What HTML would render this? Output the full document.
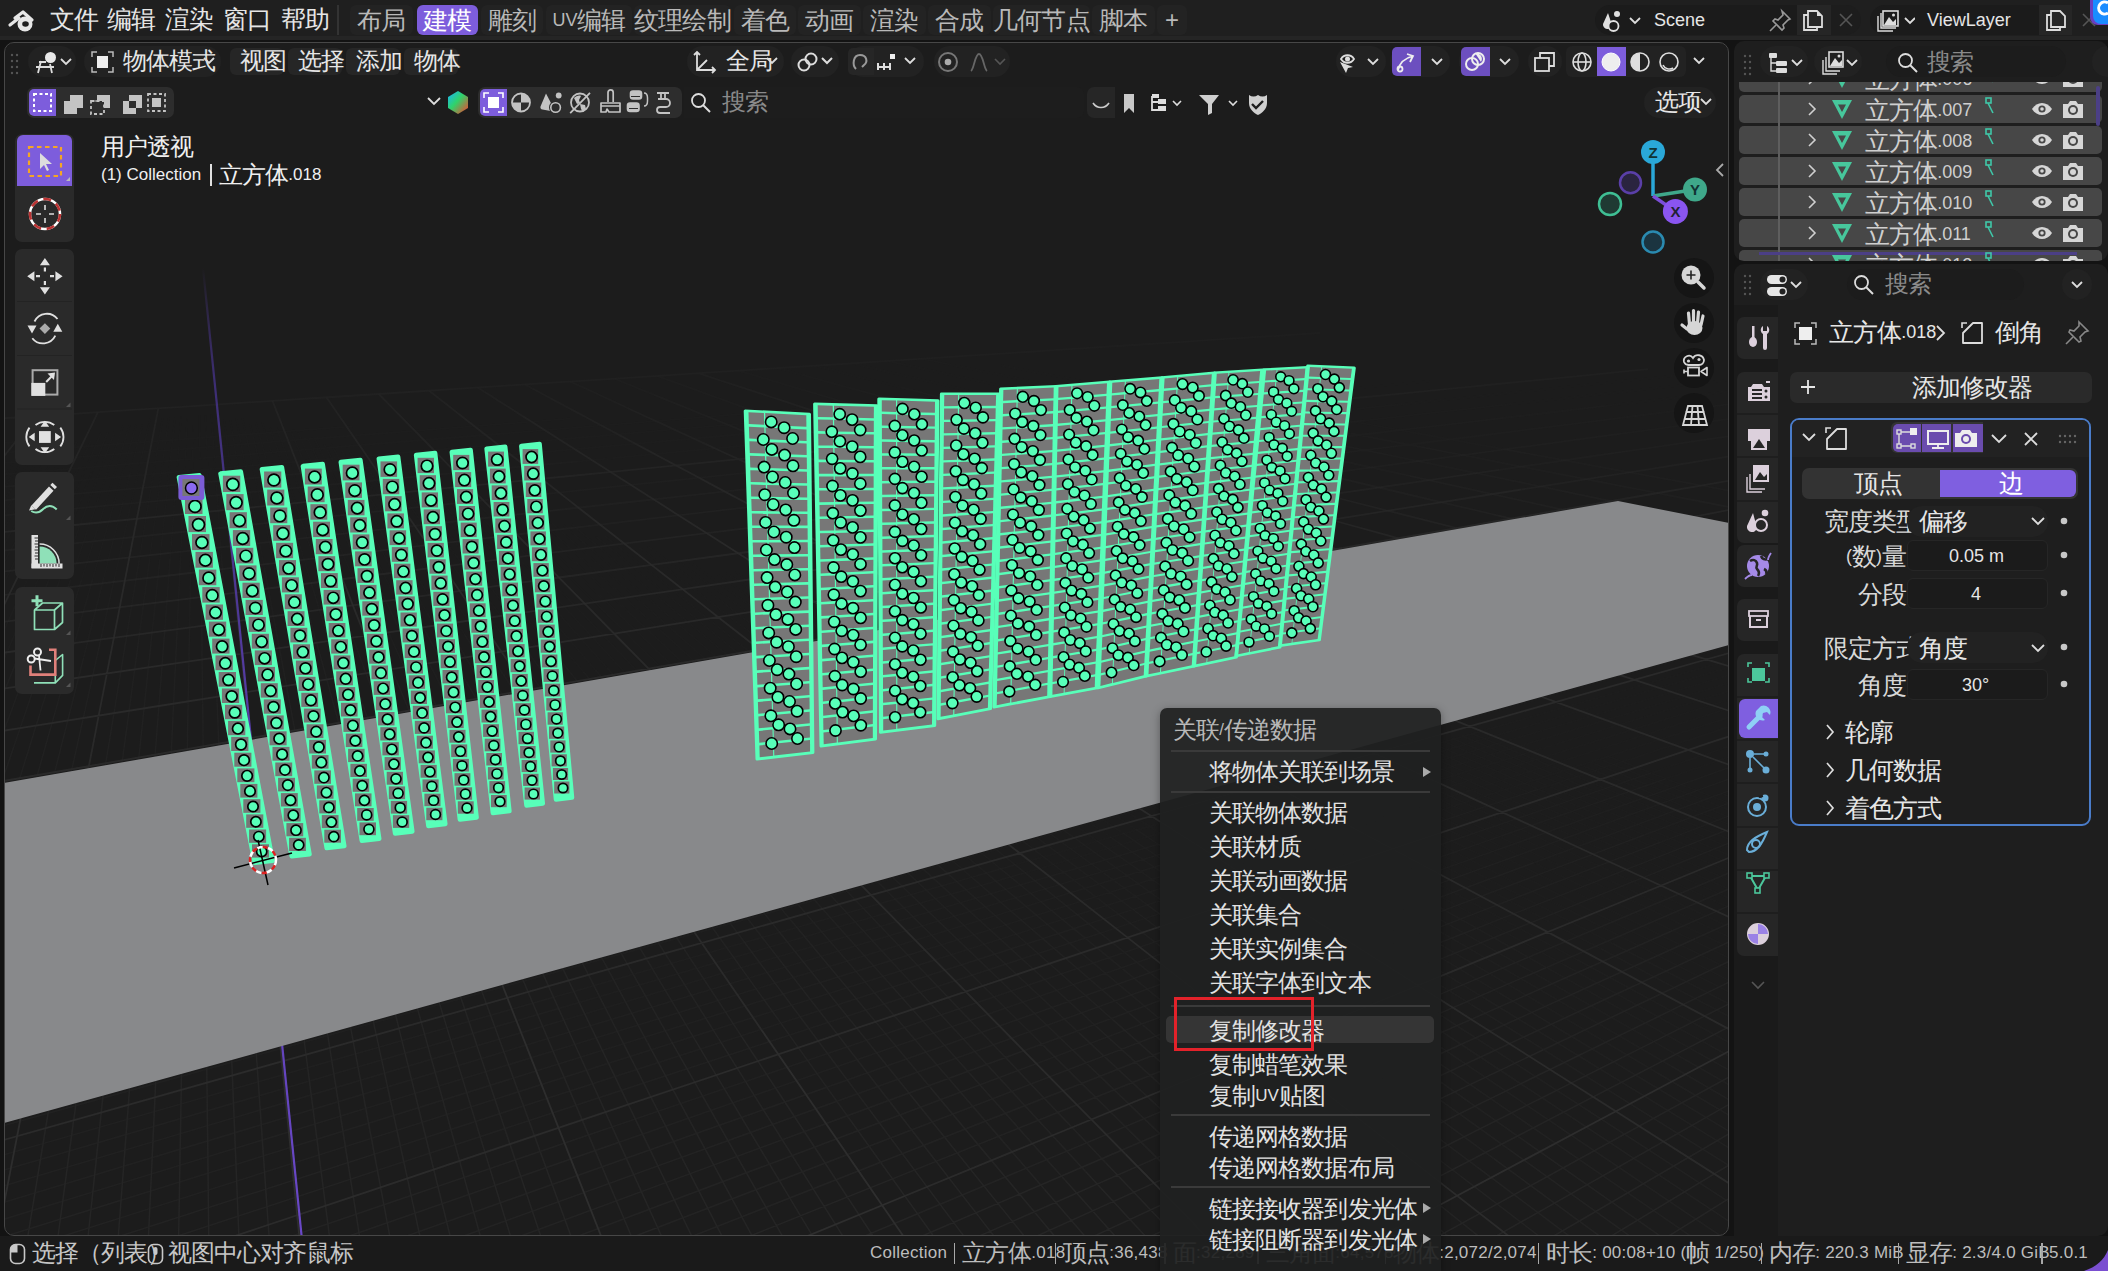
<!DOCTYPE html>
<html><head><meta charset="utf-8">
<style>
*{margin:0;padding:0;box-sizing:border-box}
html,body{width:2108px;height:1271px;overflow:hidden;background:#131313;font-family:"Liberation Sans",sans-serif;color:#d6d6d6;position:relative}
.a{position:absolute}
.t{position:absolute;white-space:nowrap;font-size:17px;line-height:20px}
.ic{position:absolute;overflow:visible}
#top{left:0;top:0;width:2108px;height:40px;background:linear-gradient(#1f1f1f 0,#1f1f1f 36px,#252525 36px)}
.vborder{left:4px;top:42px;width:1725px;height:1194px;border:1.5px solid #474747;border-radius:10px;pointer-events:none}
#ol{left:1734px;top:41px;width:374px;height:220px;background:#1e1e1e;border-radius:10px;overflow:hidden}
#pr{left:1734px;top:264px;width:374px;height:972px;background:#1e1e1e;border-radius:10px;overflow:hidden}
#sb{left:0;top:1236px;width:2108px;height:35px;background:#1a1a1a}
.btn{position:absolute;background:#262626;border-radius:6px}
.pill{position:absolute;background:#222222;border-radius:16px}
.tab{position:absolute;top:5px;height:30px;background:#232323;border-radius:6px;font-size:18px;line-height:30px;text-align:center;color:#b9b9b9}
.tab.on{background:#7d5ddc;color:#fff}
.mi{position:absolute;left:49px;font-size:17px;line-height:22px;color:#e2e2e2;white-space:nowrap}
.sep{position:absolute;left:11px;width:259px;height:2px;background:#3a3a3a}
.row{position:absolute;left:5px;width:363px;height:28px;background:#474747;border-radius:5px}
.k{font-size:1.4em;letter-spacing:-0.038em;line-height:1px;vertical-align:-3px}
</style></head><body>
<svg class="a" style="left:0;top:0" width="2108" height="1271" viewBox="0 0 2108 1271">
<defs>
<clipPath id="vc"><rect x="5" y="43" width="1723" height="1192" rx="9"/></clipPath>
<linearGradient id="gg" x1="0" y1="0" x2="0" y2="1" gradientUnits="userSpaceOnUse" >
</linearGradient>
<mask id="gm" maskUnits="userSpaceOnUse" x="0" y="0" width="2108" height="1271">
<rect x="0" y="0" width="2108" height="1271" fill="url(#gmg)"/>
</mask>
<linearGradient id="gmg" gradientUnits="userSpaceOnUse" x1="0" y1="260" x2="0" y2="1236">
<stop offset="0" stop-color="#000"/><stop offset="0.12" stop-color="#555"/><stop offset="0.3" stop-color="#ddd"/><stop offset="1" stop-color="#fff"/>
</linearGradient>
<linearGradient id="fl" gradientUnits="userSpaceOnUse" x1="0" y1="500" x2="0" y2="1123">
<stop offset="0" stop-color="#88898b"/><stop offset="1" stop-color="#88898b"/>
</linearGradient>
<linearGradient id="yax" gradientUnits="userSpaceOnUse" x1="0" y1="268" x2="0" y2="1240"><stop offset="0" stop-color="#5b3fb0" stop-opacity="0"/><stop offset="0.12" stop-color="#45328a" stop-opacity="0.8"/><stop offset="0.5" stop-color="#5a3fb0"/><stop offset="1" stop-color="#6a48c8"/></linearGradient>
</defs>
<g clip-path="url(#vc)">
<rect x="0" y="0" width="2108" height="1271" fill="#1c1c1c"/>
<g mask="url(#gm)"><path d="M-57.9 493.0L-49.8 484.1M-57.4 502.1L-49.1 492.5M-49.1 492.5L-41.3 483.5M-56.9 511.7L-48.3 501.5M-48.3 501.5L-40.3 491.9M-40.3 491.9L-32.8 483.0M-56.4 522.1L-47.6 511.1M-47.6 511.1L-39.3 500.9M-39.3 500.9L-31.6 491.4M-31.6 491.4L-24.3 482.4M-24.3 482.4L-17.5 474.0M-55.5 545.2L-46.0 532.6M-46.0 532.6L-37.2 520.8M-37.2 520.8L-29.0 509.9M-29.0 509.9L-21.3 499.8M-21.3 499.8L-14.2 490.3M-14.2 490.3L-7.5 481.3M-7.5 481.3L-1.2 473.0M-1.2 473.0L4.7 465.1M-55.0 558.2L-45.2 544.6M-45.2 544.6L-36.0 531.9M-36.0 531.9L-27.6 520.2M-27.6 520.2L-19.7 509.3M-19.7 509.3L-12.4 499.2M-12.4 499.2L-5.6 489.7M-5.6 489.7L0.9 480.8M0.9 480.8L6.9 472.5M6.9 472.5L12.5 464.6M-34.9 543.9L-26.2 531.3M-26.2 531.3L-18.1 519.6M-18.1 519.6L-10.5 508.8M-10.5 508.8L-3.5 498.6M-3.5 498.6L3.0 489.1M3.0 489.1L9.2 480.3M9.2 480.3L15.0 471.9M15.0 471.9L20.4 464.1M-24.6 543.3L-16.3 530.7M-16.3 530.7L-8.6 519.0M-8.6 519.0L-1.4 508.2M-1.4 508.2L5.3 498.1M5.3 498.1L11.6 488.6M11.6 488.6L17.5 479.7M17.5 479.7L23.0 471.4M23.0 471.4L28.2 463.6M28.2 463.6L33.1 456.2M-14.4 542.6L-6.5 530.1M-6.5 530.1L0.9 518.4M0.9 518.4L7.8 507.6M7.8 507.6L14.2 497.5M14.2 497.5L20.1 488.1M20.1 488.1L25.7 479.2M25.7 479.2L31.0 470.9M31.0 470.9L36.0 463.1M36.0 463.1L40.6 455.8M3.3 529.5L10.3 517.8M10.3 517.8L16.9 507.0M16.9 507.0L23.0 496.9M23.0 496.9L28.6 487.5M28.6 487.5L34.0 478.7M34.0 478.7L39.0 470.4M39.0 470.4L43.7 462.6M43.7 462.6L48.1 455.3M48.1 455.3L52.3 448.4M13.0 528.8L19.7 517.2M19.7 517.2L25.9 506.4M25.9 506.4L31.7 496.4M31.7 496.4L37.1 487.0M37.1 487.0L42.2 478.2M42.2 478.2L46.9 469.9M46.9 469.9L51.4 462.1M51.4 462.1L55.6 454.8M55.6 454.8L59.6 447.9M22.7 528.2L29.1 516.6M29.1 516.6L35.0 505.9M35.0 505.9L40.4 495.8M40.4 495.8L45.6 486.4M45.6 486.4L50.4 477.6M50.4 477.6L54.9 469.4M54.9 469.4L59.1 461.6M59.1 461.6L63.1 454.3M63.1 454.3L66.9 447.4M32.4 527.6L38.4 516.0M38.4 516.0L43.9 505.3M43.9 505.3L49.1 495.3M49.1 495.3L54.0 485.9M54.0 485.9L58.5 477.1M58.5 477.1L62.8 468.9M62.8 468.9L66.8 461.1M66.8 461.1L70.5 453.8M70.5 453.8L74.1 446.9M74.1 446.9L77.4 440.4M56.9 514.9L61.8 504.1M61.8 504.1L66.4 494.2M66.4 494.2L70.7 484.8M70.7 484.8L74.7 476.1M74.7 476.1L78.4 467.9M78.4 467.9L82.0 460.2M82.0 460.2L85.3 452.9M85.3 452.9L88.5 446.0M88.5 446.0L91.4 439.5M66.1 514.3L70.7 503.6M70.7 503.6L75.0 493.6M75.0 493.6L79.0 484.3M79.0 484.3L82.7 475.6M82.7 475.6L86.2 467.4M86.2 467.4L89.6 459.7M89.6 459.7L92.7 452.4M92.7 452.4L95.6 445.6M95.6 445.6L98.4 439.1M98.4 439.1L101.0 433.0M75.3 513.7L79.6 503.0M79.6 503.0L83.6 493.1M83.6 493.1L87.3 483.8M87.3 483.8L90.8 475.0M90.8 475.0L94.0 466.9M94.0 466.9L97.1 459.2M97.1 459.2L100.0 451.9M100.0 451.9L102.7 445.1M102.7 445.1L105.3 438.6M105.3 438.6L107.7 432.5M88.4 502.4L92.1 492.5M92.1 492.5L95.5 483.2M95.5 483.2L98.7 474.5M98.7 474.5L101.8 466.4M101.8 466.4L104.6 458.7M104.6 458.7L107.3 451.5M107.3 451.5L109.8 444.6M109.8 444.6L112.2 438.2M112.2 438.2L114.5 432.1M97.2 501.9L100.6 492.0M100.6 492.0L103.8 482.7M103.8 482.7L106.7 474.0M106.7 474.0L109.5 465.9M109.5 465.9L112.1 458.2M112.1 458.2L114.6 451.0M114.6 451.0L116.9 444.2M116.9 444.2L119.1 437.8M119.1 437.8L121.1 431.7M121.1 431.7L123.1 425.9M106.0 501.3L109.1 491.4M109.1 491.4L111.9 482.2M111.9 482.2L114.6 473.5M114.6 473.5L117.2 465.4M117.2 465.4L119.6 457.7M119.6 457.7L121.8 450.5M121.8 450.5L123.9 443.7M123.9 443.7L125.9 437.3M125.9 437.3L127.8 431.2M127.8 431.2L129.6 425.5M114.7 500.8L117.5 490.9M117.5 490.9L120.1 481.7M120.1 481.7L122.5 473.0M122.5 473.0L124.8 464.9M124.8 464.9L127.0 457.3M127.0 457.3L129.0 450.1M129.0 450.1L130.9 443.3M130.9 443.3L132.7 436.9M132.7 436.9L134.4 430.8M134.4 430.8L136.1 425.0M123.4 500.2L125.9 490.4M125.9 490.4L128.2 481.1M128.2 481.1L130.4 472.5M130.4 472.5L132.5 464.4M132.5 464.4L134.4 456.8M134.4 456.8L136.2 449.6M136.2 449.6L137.9 442.8M137.9 442.8L139.5 436.4M139.5 436.4L141.1 430.4M141.1 430.4L142.5 424.6M132.1 499.7L134.3 489.8M134.3 489.8L136.3 480.6M136.3 480.6L138.3 472.0M138.3 472.0L140.1 463.9M140.1 463.9L141.8 456.3M141.8 456.3L143.4 449.1M143.4 449.1L144.9 442.4M144.9 442.4L146.3 436.0M146.3 436.0L147.6 429.9M147.6 429.9L148.9 424.2M148.9 424.2L150.1 418.8M150.9 488.8L152.4 479.6M152.4 479.6L153.9 471.0M153.9 471.0L155.2 462.9M155.2 462.9L156.4 455.4M156.4 455.4L157.6 448.2M157.6 448.2L158.7 441.5M158.7 441.5L159.8 435.1M159.8 435.1L160.8 429.1M160.8 429.1L161.7 423.4M161.7 423.4L162.6 418.0M159.2 488.2L160.4 479.1M160.4 479.1L161.6 470.5M161.6 470.5L162.7 462.5M162.7 462.5L163.7 454.9M163.7 454.9L164.7 447.8M164.7 447.8L165.6 441.1M165.6 441.1L166.5 434.7M166.5 434.7L167.3 428.7M167.3 428.7L168.0 423.0M168.0 423.0L168.8 417.6M167.5 487.7L168.4 478.6M168.4 478.6L169.3 470.0M169.3 470.0L170.2 462.0M170.2 462.0L171.0 454.4M171.0 454.4L171.7 447.3M171.7 447.3L172.5 440.6M172.5 440.6L173.1 434.3M173.1 434.3L173.8 428.3M173.8 428.3L174.4 422.6M174.4 422.6L174.9 417.2M175.7 487.2L176.4 478.1M176.4 478.1L177.0 469.5M177.0 469.5L177.6 461.5M177.6 461.5L178.2 454.0M178.2 454.0L178.8 446.9M178.8 446.9L179.3 440.2M179.3 440.2L179.8 433.8M179.8 433.8L180.2 427.8M180.2 427.8L180.7 422.2M180.7 422.2L181.1 416.8M183.9 486.7L184.3 477.5M184.3 477.5L184.7 469.0M184.7 469.0L185.1 461.0M185.1 461.0L185.4 453.5M185.4 453.5L185.8 446.4M185.8 446.4L186.1 439.7M186.1 439.7L186.4 433.4M186.4 433.4L186.7 427.4M186.7 427.4L186.9 421.8M186.9 421.8L187.2 416.4M192.0 486.1L192.2 477.0M192.2 477.0L192.3 468.5M192.3 468.5L192.5 460.6M192.5 460.6L192.6 453.0M192.6 453.0L192.8 446.0M192.8 446.0L192.9 439.3M192.9 439.3L193.0 433.0M193.0 433.0L193.1 427.0M193.1 427.0L193.2 421.3M193.2 421.3L193.3 416.0M200.2 485.6L200.1 476.5M200.1 476.5L200.0 468.0M200.0 468.0L199.9 460.1M199.9 460.1L199.8 452.6M199.8 452.6L199.7 445.5M199.7 445.5L199.6 438.9M199.6 438.9L199.6 432.6M199.6 432.6L199.5 426.6M199.5 426.6L199.4 420.9M199.4 420.9L199.4 415.6M208.3 485.1L207.9 476.0M207.9 476.0L207.5 467.6M207.5 467.6L207.2 459.6M207.2 459.6L206.9 452.1M206.9 452.1L206.6 445.1M206.6 445.1L206.4 438.4M206.4 438.4L206.1 432.1M206.1 432.1L205.9 426.2M205.9 426.2L205.6 420.5M205.6 420.5L205.4 415.2M216.3 484.6L215.7 475.5M215.7 475.5L215.1 467.1M215.1 467.1L214.6 459.1M214.6 459.1L214.0 451.7M214.0 451.7L213.5 444.6M213.5 444.6L213.1 438.0M213.1 438.0L212.6 431.7M212.6 431.7L212.2 425.8M212.2 425.8L211.8 420.1M211.8 420.1L211.4 414.8M233.6 493.2L232.4 483.6M232.4 483.6L231.2 474.5M231.2 474.5L230.1 466.1M230.1 466.1L229.1 458.2M229.1 458.2L228.2 450.8M228.2 450.8L227.3 443.7M227.3 443.7L226.4 437.1M226.4 437.1L225.6 430.9M225.6 430.9L224.8 425.0M224.8 425.0L224.1 419.4M241.9 492.7L240.4 483.0M240.4 483.0L239.0 474.1M239.0 474.1L237.6 465.6M237.6 465.6L236.4 457.7M236.4 457.7L235.2 450.3M235.2 450.3L234.1 443.3M234.1 443.3L233.0 436.7M233.0 436.7L232.1 430.5M232.1 430.5L231.1 424.6M231.1 424.6L230.2 419.0M250.1 492.1L248.3 482.5M248.3 482.5L246.7 473.6M246.7 473.6L245.1 465.2M245.1 465.2L243.6 457.3M243.6 457.3L242.2 449.9M242.2 449.9L240.9 442.9M240.9 442.9L239.7 436.3M239.7 436.3L238.5 430.0M238.5 430.0L237.4 424.2M237.4 424.2L236.3 418.6M258.3 491.6L256.3 482.0M256.3 482.0L254.3 473.1M254.3 473.1L252.5 464.7M252.5 464.7L250.8 456.8M250.8 456.8L249.2 449.4M249.2 449.4L247.7 442.4M247.7 442.4L246.2 435.9M246.2 435.9L244.9 429.6M244.9 429.6L243.6 423.7M243.6 423.7L242.4 418.2M266.5 491.1L264.2 481.5M264.2 481.5L262.0 472.6M262.0 472.6L259.9 464.2M259.9 464.2L258.0 456.3M258.0 456.3L256.1 449.0M256.1 449.0L254.4 442.0M254.4 442.0L252.8 435.4M252.8 435.4L251.3 429.2M251.3 429.2L249.8 423.3M277.5 500.8L274.7 490.6M274.7 490.6L272.0 481.0M272.0 481.0L269.6 472.1M269.6 472.1L267.3 463.7M267.3 463.7L265.1 455.9M265.1 455.9L263.1 448.5M263.1 448.5L261.2 441.6M261.2 441.6L259.3 435.0M259.3 435.0L257.6 428.8M257.6 428.8L256.0 422.9M285.9 500.3L282.8 490.1M282.8 490.1L279.9 480.5M279.9 480.5L277.2 471.6M277.2 471.6L274.6 463.3M274.6 463.3L272.2 455.4M272.2 455.4L270.0 448.1M270.0 448.1L267.9 441.1M267.9 441.1L265.9 434.6M265.9 434.6L264.0 428.4M264.0 428.4L262.2 422.5M294.3 499.8L290.9 489.5M290.9 489.5L287.7 480.0M287.7 480.0L284.7 471.1M284.7 471.1L281.9 462.8M281.9 462.8L279.3 455.0M279.3 455.0L276.9 447.6M276.9 447.6L274.5 440.7M274.5 440.7L272.4 434.2M272.4 434.2L270.3 428.0M306.6 510.2L302.7 499.2M302.7 499.2L298.9 489.0M298.9 489.0L295.5 479.5M295.5 479.5L292.2 470.6M292.2 470.6L289.2 462.3M289.2 462.3L286.4 454.5M286.4 454.5L283.7 447.2M283.7 447.2L281.2 440.3M281.2 440.3L278.8 433.8M278.8 433.8L276.6 427.6M323.9 509.1L319.3 498.2M319.3 498.2L315.0 488.0M315.0 488.0L311.0 478.5M311.0 478.5L307.2 469.7M307.2 469.7L303.7 461.4M303.7 461.4L300.4 453.6M300.4 453.6L297.3 446.3M297.3 446.3L294.4 439.4M294.4 439.4L291.7 432.9M337.8 520.3L332.5 508.5M332.5 508.5L327.5 497.6M327.5 497.6L323.0 487.5M323.0 487.5L318.7 478.0M318.7 478.0L314.7 469.2M314.7 469.2L310.9 460.9M310.9 460.9L307.4 453.2M307.4 453.2L304.1 445.9M304.1 445.9L301.0 439.0M301.0 439.0L298.1 432.5M346.7 519.7L341.0 508.0M341.0 508.0L335.8 497.1M335.8 497.1L330.9 487.0M330.9 487.0L326.4 477.5M326.4 477.5L322.1 468.7M322.1 468.7L318.1 460.5M318.1 460.5L314.4 452.7M314.4 452.7L310.9 445.4M310.9 445.4L307.6 438.6M355.5 519.2L349.5 507.5M349.5 507.5L344.0 496.6M344.0 496.6L338.8 486.5M338.8 486.5L334.0 477.1M334.0 477.1L329.5 468.3M329.5 468.3L325.3 460.0M325.3 460.0L321.3 452.3M321.3 452.3L317.6 445.0M317.6 445.0L314.1 438.2M371.2 531.3L364.4 518.6M364.4 518.6L358.0 506.9M358.0 506.9L352.2 496.1M352.2 496.1L346.7 486.0M346.7 486.0L341.6 476.6M341.6 476.6L336.9 467.8M336.9 467.8L332.4 459.6M332.4 459.6L328.3 451.8M328.3 451.8L324.3 444.6M380.4 530.7L373.2 518.1M373.2 518.1L366.5 506.4M366.5 506.4L360.3 495.5M360.3 495.5L354.6 485.5M354.6 485.5L349.2 476.1M349.2 476.1L344.2 467.3M344.2 467.3L339.5 459.1M339.5 459.1L335.2 451.4M335.2 451.4L331.0 444.1M389.5 530.1L381.9 517.5M381.9 517.5L374.9 505.8M374.9 505.8L368.4 495.0M368.4 495.0L362.4 485.0M362.4 485.0L356.8 475.6M356.8 475.6L351.5 466.8M351.5 466.8L346.6 458.6M346.6 458.6L342.0 451.0M407.2 543.2L398.6 529.6M398.6 529.6L390.6 517.0M390.6 517.0L383.3 505.3M383.3 505.3L376.5 494.5M376.5 494.5L370.2 484.5M370.2 484.5L364.3 475.1M364.3 475.1L358.8 466.4M358.8 466.4L353.7 458.2M353.7 458.2L348.9 450.5M416.5 542.5L407.5 528.9M407.5 528.9L399.3 516.3M399.3 516.3L391.6 504.7M391.6 504.7L384.5 493.9M384.5 493.9L378.0 483.9M378.0 483.9L371.8 474.6M371.8 474.6L366.1 465.9M366.1 465.9L360.7 457.7M445.1 555.0L434.6 540.4M434.6 540.4L425.0 526.9M425.0 526.9L416.1 514.5M416.1 514.5L407.8 503.0M407.8 503.0L400.2 492.4M400.2 492.4L393.1 482.5M393.1 482.5L386.5 473.2M386.5 473.2L380.3 464.6M454.5 553.9L443.6 539.3M443.6 539.3L433.6 525.9M433.6 525.9L424.4 513.6M424.4 513.6L415.9 502.2M415.9 502.2L408.0 491.6M408.0 491.6L400.6 481.7M400.6 481.7L393.8 472.6M393.8 472.6L387.3 464.0M476.0 568.6L463.8 552.8M463.8 552.8L452.5 538.3M452.5 538.3L442.2 525.0M442.2 525.0L432.7 512.7M432.7 512.7L423.9 501.4M423.9 501.4L415.7 490.8M415.7 490.8L408.1 481.0M408.1 481.0L401.0 471.9M485.6 567.3L473.0 551.6M473.0 551.6L461.4 537.2M461.4 537.2L450.7 524.0M450.7 524.0L440.9 511.8M440.9 511.8L431.8 500.5M431.8 500.5L423.4 490.1M423.4 490.1L415.5 480.3M415.5 480.3L408.2 471.2M495.1 566.1L482.1 550.5M482.1 550.5L470.2 536.2M470.2 536.2L459.2 523.1M459.2 523.1L449.1 511.0M449.1 511.0L439.7 499.7M439.7 499.7L431.0 489.3M431.0 489.3L422.9 479.6M519.3 581.8L504.6 564.9M504.6 564.9L491.2 549.4M491.2 549.4L479.0 535.2M479.0 535.2L467.7 522.1M467.7 522.1L457.2 510.1M457.2 510.1L447.6 498.9M447.6 498.9L438.6 488.6M438.6 488.6L430.3 478.9M529.1 580.5L514.0 563.7M514.0 563.7L500.3 548.3M500.3 548.3L487.7 534.2M487.7 534.2L476.1 521.2M476.1 521.2L465.3 509.2M465.3 509.2L455.4 498.1M455.4 498.1L446.2 487.8M538.8 579.2L523.4 562.5M523.4 562.5L509.2 547.2M509.2 547.2L496.3 533.2M496.3 533.2L484.4 520.3M484.4 520.3L473.4 508.4M473.4 508.4L463.2 497.3M463.2 497.3L453.7 487.1M565.9 596.2L548.5 577.9M548.5 577.9L532.6 561.3M532.6 561.3L518.2 546.1M518.2 546.1L504.9 532.2M504.9 532.2L492.7 519.3M492.7 519.3L481.4 507.5M481.4 507.5L470.9 496.5M605.9 613.2L585.8 593.3M585.8 593.3L567.6 575.3M567.6 575.3L551.0 558.9M551.0 558.9L535.9 543.9M535.9 543.9L521.9 530.2M521.9 530.2L509.1 517.5M509.1 517.5L497.3 505.8M616.2 611.6L595.7 591.9M595.7 591.9L577.1 574.0M577.1 574.0L560.1 557.8M560.1 557.8L544.6 542.9M544.6 542.9L530.4 529.2M530.4 529.2L517.3 516.6M517.3 516.6L505.1 505.0M626.4 610.1L605.5 590.5M605.5 590.5L586.5 572.8M586.5 572.8L569.2 556.6M569.2 556.6L553.3 541.8M553.3 541.8L538.8 528.2M538.8 528.2L525.4 515.7M660.3 630.1L636.6 608.6M636.6 608.6L615.2 589.1M615.2 589.1L595.8 571.5M595.8 571.5L578.1 555.4M578.1 555.4L562.0 540.7M562.0 540.7L547.1 527.2M547.1 527.2L533.4 514.8M670.8 628.4L646.6 607.0M646.6 607.0L624.9 587.8M624.9 587.8L605.1 570.3M605.1 570.3L587.1 554.3M587.1 554.3L570.6 539.7M570.6 539.7L555.4 526.3M555.4 526.3L541.4 513.9M681.2 626.7L656.6 605.5M656.6 605.5L634.4 586.4M634.4 586.4L614.3 569.0M614.3 569.0L595.9 553.2M595.9 553.2L579.1 538.6M579.1 538.6L563.6 525.3M719.3 648.4L691.5 625.1M691.5 625.1L666.6 604.0M666.6 604.0L644.0 585.0M644.0 585.0L623.4 567.8M623.4 567.8L604.7 552.0M604.7 552.0L587.6 537.6M587.6 537.6L571.8 524.4M730.1 646.6L701.8 623.4M701.8 623.4L676.4 602.5M676.4 602.5L653.4 583.7M653.4 583.7L632.5 566.5M632.5 566.5L613.5 550.9M613.5 550.9L596.0 536.6M740.7 644.8L712.0 621.8M712.0 621.8L686.2 601.1M686.2 601.1L662.8 582.3M662.8 582.3L641.6 565.3M641.6 565.3L622.2 549.8M622.2 549.8L604.4 535.6M794.8 666.5L761.7 641.2M761.7 641.2L732.1 618.6M732.1 618.6L705.5 598.2M705.5 598.2L681.4 579.7M681.4 579.7L659.4 562.9M659.4 562.9L639.4 547.6M805.6 664.5L772.1 639.4M772.1 639.4L742.1 617.0M742.1 617.0L715.0 596.7M715.0 596.7L690.6 578.4M690.6 578.4L668.3 561.7M668.3 561.7L647.9 546.5M854.6 690.5L816.4 662.5M816.4 662.5L782.4 637.7M782.4 637.7L752.0 615.4M752.0 615.4L724.5 595.3M724.5 595.3L699.7 577.1M699.7 577.1L677.1 560.5M865.7 688.3L827.1 660.6M827.1 660.6L792.6 635.9M792.6 635.9L761.8 613.8M761.8 613.8L734.0 593.9M734.0 593.9L708.8 575.8M708.8 575.8L685.8 559.3M876.7 686.1L837.6 658.7M837.6 658.7L802.8 634.2M802.8 634.2L771.5 612.2M771.5 612.2L743.3 592.5M743.3 592.5L717.8 574.5M887.7 683.9L848.1 656.7M848.1 656.7L812.8 632.5M812.8 632.5L781.2 610.7M781.2 610.7L752.6 591.0M752.6 591.0L726.7 573.2M943.7 712.3L898.5 681.8M898.5 681.8L858.5 654.8M858.5 654.8L822.8 630.8M822.8 630.8L790.7 609.2M790.7 609.2L761.8 589.7M761.8 589.7L735.6 572.0M955.0 709.9L909.3 679.7M909.3 679.7L868.8 652.9M868.8 652.9L832.7 629.1M832.7 629.1L800.2 607.6M800.2 607.6L771.0 588.3M966.1 707.5L919.9 677.6M919.9 677.6L879.0 651.1M879.0 651.1L842.5 627.4M842.5 627.4L809.7 606.1M809.7 606.1L780.0 586.9M1041.4 736.1L988.0 702.8M988.0 702.8L941.0 673.4M941.0 673.4L899.2 647.4M899.2 647.4L861.9 624.1M861.9 624.1L828.4 603.1M1052.7 733.5L998.8 700.5M998.8 700.5L951.4 671.4M951.4 671.4L909.2 645.5M909.2 645.5L871.5 622.4M871.5 622.4L837.6 601.6M1063.8 730.9L1009.5 698.2M1009.5 698.2L961.6 669.3M961.6 669.3L919.1 643.7M919.1 643.7L881.0 620.8M881.0 620.8L846.7 600.2M1137.4 765.3L1074.9 728.3M1074.9 728.3L1020.2 695.9M1020.2 695.9L971.8 667.3M971.8 667.3L928.9 641.9M928.9 641.9L890.4 619.2M1148.8 762.3L1085.8 725.7M1085.8 725.7L1030.7 693.7M1030.7 693.7L982.0 665.3M982.0 665.3L938.6 640.1M938.6 640.1L899.8 617.6M1160.1 759.4L1096.7 723.2M1096.7 723.2L1041.1 691.4M1041.1 691.4L992.0 663.4M992.0 663.4L948.3 638.4M948.3 638.4L909.1 616.0M1171.3 756.6L1107.4 720.7M1107.4 720.7L1051.4 689.2M1051.4 689.2L1001.9 661.4M1001.9 661.4L957.8 636.6M1256.2 794.6L1182.3 753.7M1182.3 753.7L1118.1 718.2M1118.1 718.2L1061.7 687.0M1061.7 687.0L1011.8 659.5M1011.8 659.5L967.3 634.9M1267.6 791.3L1193.3 750.9M1193.3 750.9L1128.6 715.7M1128.6 715.7L1071.8 684.9M1071.8 684.9L1021.5 657.5M1021.5 657.5L976.8 633.2M1289.9 785.0L1214.8 745.4M1214.8 745.4L1149.4 710.9M1149.4 710.9L1091.8 680.6M1091.8 680.6L1040.8 653.7M1388.3 827.2L1300.9 781.8M1300.9 781.8L1225.4 742.7M1225.4 742.7L1159.6 708.5M1159.6 708.5L1101.7 678.5M1101.7 678.5L1050.4 651.8M1399.5 823.6L1311.7 778.7M1311.7 778.7L1235.9 740.0M1235.9 740.0L1169.7 706.1M1169.7 706.1L1111.5 676.4M1111.5 676.4L1059.8 650.0M1410.6 820.0L1322.5 775.6M1322.5 775.6L1246.3 737.3M1246.3 737.3L1179.8 703.8M1179.8 703.8L1121.2 674.3M1421.5 816.5L1333.1 772.6M1333.1 772.6L1256.6 734.6M1256.6 734.6L1189.7 701.5M1189.7 701.5L1130.8 672.2M1536.0 863.6L1432.4 813.0M1432.4 813.0L1343.6 769.6M1343.6 769.6L1266.8 732.0M1266.8 732.0L1199.6 699.2M1199.6 699.2L1140.3 670.2M1547.0 859.6L1443.1 809.5M1443.1 809.5L1354.0 766.6M1354.0 766.6L1276.9 729.4M1276.9 729.4L1209.4 696.9M1209.4 696.9L1149.8 668.2M1557.8 855.6L1453.7 806.1M1453.7 806.1L1364.3 763.7M1364.3 763.7L1286.9 726.8M1286.9 726.8L1219.1 694.6M1568.5 851.6L1464.1 802.7M1464.1 802.7L1374.5 760.7M1374.5 760.7L1296.8 724.3M1296.8 724.3L1228.6 692.4M1712.9 900.1L1589.5 843.9M1589.5 843.9L1484.7 796.1M1484.7 796.1L1394.6 755.0M1394.6 755.0L1316.3 719.3M1316.3 719.3L1247.6 688.0M1723.3 895.6L1599.8 840.0M1599.8 840.0L1494.9 792.8M1494.9 792.8L1404.5 752.2M1404.5 752.2L1325.9 716.8M1733.6 891.1L1610.0 836.3M1610.0 836.3L1504.9 789.6M1504.9 789.6L1414.3 749.4M1414.3 749.4L1335.4 714.4M1743.8 886.7L1620.1 832.5M1620.1 832.5L1514.8 786.4M1514.8 786.4L1424.0 746.6M1424.0 746.6L1344.9 711.9M1753.8 882.4L1630.1 828.9M1630.1 828.9L1524.6 783.2M1524.6 783.2L1433.5 743.9M1433.5 743.9L1354.2 709.5M1910.7 940.9L1763.7 878.1M1763.7 878.1L1639.9 825.2M1639.9 825.2L1534.3 780.1M1534.3 780.1L1443.0 741.1M1920.4 935.8L1773.5 873.9M1773.5 873.9L1649.7 821.6M1649.7 821.6L1543.9 777.0M1543.9 777.0L1452.4 738.5M1930.0 930.8L1783.2 869.7M1783.2 869.7L1659.3 818.1M1659.3 818.1L1553.3 774.0M1553.3 774.0L1461.7 735.8M1939.4 925.9L1792.7 865.5M1792.7 865.5L1668.8 814.6M1668.8 814.6L1562.7 770.9M1562.7 770.9L1470.9 733.2M1811.4 857.4L1687.5 807.7M1687.5 807.7L1581.2 765.0M1820.6 853.5L1696.7 804.3M1696.7 804.3L1590.3 762.0M1829.7 849.5L1705.8 800.9M1705.8 800.9L1599.3 759.1M1838.7 845.6L1714.8 797.6M1714.8 797.6L1608.2 756.3M1847.6 841.8L1723.6 794.3M1856.3 838.0L1732.4 791.0M1865.0 834.3L1741.1 787.8M1873.6 830.6L1749.7 784.7M1882.0 826.9L1758.2 781.5M1726.6 700.4L1790.6 680.4M1790.6 680.4L1849.7 662.0M1643.6 717.3L1713.1 696.0M1713.1 696.0L1777.2 676.4M1777.2 676.4L1836.3 658.3M1630.4 712.7L1699.9 691.8M1699.9 691.8L1764.0 672.5M1764.0 672.5L1823.2 654.7M1542.0 730.6L1617.5 708.2M1617.5 708.2L1687.0 687.6M1687.0 687.6L1751.0 668.7M1751.0 668.7L1810.2 651.2M1529.4 725.7L1604.9 703.7M1604.9 703.7L1674.2 683.5M1674.2 683.5L1738.2 664.9M1738.2 664.9L1797.4 647.7M1797.4 647.7L1852.4 631.7M1435.0 744.5L1517.2 721.0M1517.2 721.0L1592.5 699.4M1592.5 699.4L1661.7 679.5M1661.7 679.5L1725.7 661.2M1725.7 661.2L1784.9 644.2M1784.9 644.2L1839.8 628.5M1322.4 759.2L1411.6 734.4M1411.6 734.4L1493.3 711.7M1493.3 711.7L1568.2 690.9M1568.2 690.9L1637.3 671.7M1637.3 671.7L1701.1 653.9M1701.1 653.9L1760.3 637.5M1760.3 637.5L1815.3 622.2M1311.3 753.8L1400.3 729.5M1400.3 729.5L1481.6 707.2M1481.6 707.2L1556.4 686.7M1556.4 686.7L1625.4 667.8M1625.4 667.8L1689.2 650.4M1689.2 650.4L1748.3 634.2M1748.3 634.2L1803.3 619.1M1203.5 774.7L1300.5 748.5M1300.5 748.5L1389.1 724.6M1389.1 724.6L1470.2 702.8M1470.2 702.8L1544.8 682.6M1544.8 682.6L1613.7 664.1M1613.7 664.1L1677.4 646.9M1677.4 646.9L1736.5 631.0M1193.3 769.0L1289.9 743.3M1289.9 743.3L1378.1 719.9M1378.1 719.9L1459.0 698.4M1459.0 698.4L1533.4 678.6M1533.4 678.6L1602.1 660.4M1602.1 660.4L1665.8 643.5M1665.8 643.5L1724.9 627.8M1077.8 791.0L1183.4 763.4M1183.4 763.4L1279.5 738.2M1279.5 738.2L1367.4 715.2M1367.4 715.2L1448.0 694.1M1448.0 694.1L1522.2 674.7M1522.2 674.7L1590.8 656.7M1590.8 656.7L1654.4 640.1M1068.7 785.0L1173.7 757.9M1173.7 757.9L1269.3 733.2M1269.3 733.2L1356.8 710.7M1356.8 710.7L1437.2 689.9M1437.2 689.9L1511.2 670.8M1511.2 670.8L1579.7 653.2M1579.7 653.2L1643.1 636.8M944.8 808.4L1059.8 779.1M1059.8 779.1L1164.1 752.6M1164.1 752.6L1259.3 728.3M1259.3 728.3L1346.4 706.2M1346.4 706.2L1426.5 685.8M1426.5 685.8L1500.4 667.0M1500.4 667.0L1568.7 649.6M936.8 802.0L1051.0 773.3M1051.0 773.3L1154.8 747.3M1154.8 747.3L1249.5 723.5M1249.5 723.5L1336.2 701.8M1336.2 701.8L1416.0 681.7M1416.0 681.7L1489.7 663.3M803.8 826.7L929.0 795.7M929.0 795.7L1042.4 767.7M1042.4 767.7L1145.6 742.1M1145.6 742.1L1239.8 718.8M1239.8 718.8L1326.2 697.4M1326.2 697.4L1405.8 677.8M1405.8 677.8L1479.2 659.6M654.0 846.3L790.6 813.3M790.6 813.3L913.9 783.6M913.9 783.6L1025.8 756.7M1025.8 756.7L1127.8 732.1M1127.8 732.1L1221.0 709.6M1221.0 709.6L1306.7 689.0M1306.7 689.0L1385.7 670.0M648.8 839.1L784.2 806.9M784.2 806.9L906.6 777.8M906.6 777.8L1017.7 751.3M1017.7 751.3L1119.1 727.2M1119.1 727.2L1211.9 705.2M1211.9 705.2L1297.2 684.9M494.6 867.0L643.8 832.0M643.8 832.0L778.0 800.5M778.0 800.5L899.4 772.0M899.4 772.0L1009.8 746.1M1009.8 746.1L1110.6 722.5M1110.6 722.5L1202.9 700.8M1202.9 700.8L1287.9 680.9M491.1 859.4L638.8 825.1M638.8 825.1L771.9 794.3M771.9 794.3L892.4 766.4M892.4 766.4L1002.0 741.0M1002.0 741.0L1102.2 717.8M1102.2 717.8L1194.1 696.5M487.7 851.9L634.0 818.4M634.0 818.4L765.9 788.2M765.9 788.2L885.5 760.9M885.5 760.9L994.4 735.9M994.4 735.9L1094.0 713.2M1094.0 713.2L1185.4 692.2M323.1 881.0L484.4 844.5M484.4 844.5L629.3 811.8M629.3 811.8L760.1 782.3M760.1 782.3L878.8 755.4M878.8 755.4L986.9 731.0M986.9 731.0L1086.0 708.6M321.6 873.0L481.2 837.4M481.2 837.4L624.7 805.4M624.7 805.4L754.3 776.4M754.3 776.4L872.1 750.1M872.1 750.1L979.6 726.1M979.6 726.1L1078.0 704.2M143.7 904.1L320.1 865.2M320.1 865.2L478.0 830.4M478.0 830.4L620.1 799.0M620.1 799.0L748.7 770.7M748.7 770.7L865.6 744.9M865.6 744.9L972.4 721.4M144.4 895.5L318.7 857.5M318.7 857.5L474.9 823.5M474.9 823.5L615.7 792.9M615.7 792.9L743.2 765.1M743.2 765.1L859.3 739.8M859.3 739.8L965.3 716.7M-45.1 919.6L145.6 879.0M145.6 879.0L316.0 842.8M316.0 842.8L468.9 810.3M468.9 810.3L607.1 780.9M607.1 780.9L732.5 754.2M732.5 754.2L846.9 729.9M-42.1 910.7L146.3 871.1M146.3 871.1L314.6 835.7M314.6 835.7L466.0 803.9M466.0 803.9L602.9 775.1M602.9 775.1L727.3 748.9M-248.2 945.4L-39.1 902.0M-39.1 902.0L146.9 863.3M146.9 863.3L313.3 828.7M313.3 828.7L463.2 797.6M463.2 797.6L598.9 769.4M598.9 769.4L722.2 743.7M-242.4 935.8L-36.2 893.5M-36.2 893.5L147.4 855.8M147.4 855.8L312.0 821.9M312.0 821.9L460.4 791.4M460.4 791.4L594.9 763.8M594.9 763.8L717.3 738.7M-236.7 926.5L-33.4 885.2M-33.4 885.2L148.0 848.3M148.0 848.3L310.8 815.3M310.8 815.3L457.7 785.4M457.7 785.4L590.9 758.3M-231.2 917.4L-30.6 877.1M-30.6 877.1L148.6 841.1M148.6 841.1L309.6 808.8M309.6 808.8L455.0 779.5M455.0 779.5L587.1 753.0M-225.9 908.6L-27.9 869.2M-27.9 869.2L149.1 834.0M149.1 834.0L308.4 802.4M308.4 802.4L452.4 773.7M-220.6 899.9L-25.3 861.5M-25.3 861.5L149.6 827.1M149.6 827.1L307.2 796.1M307.2 796.1L449.9 768.1M-215.5 891.5L-22.7 854.0M-22.7 854.0L150.1 820.3M150.1 820.3L306.0 790.0M-205.7 875.2L-17.8 839.4M-17.8 839.4L151.1 807.2M-201.0 867.4L-15.4 832.4M-15.4 832.4L151.6 800.9M-196.3 859.7L-13.0 825.5M-13.0 825.5L152.1 794.7M-191.8 852.2L-10.7 818.8M-187.4 844.9L-8.5 812.2" stroke="#252525" stroke-width="1.5" stroke-opacity="0.125" fill="none"/><path d="M-54.6 572.3L-44.3 557.6M-44.3 557.6L-34.9 543.9M-54.1 587.7L-43.5 571.6M-43.5 571.6L-33.7 556.9M-33.7 556.9L-24.6 543.3M-53.7 604.5L-42.6 587.0M-42.6 587.0L-32.4 570.9M-32.4 570.9L-23.1 556.2M-23.1 556.2L-14.4 542.6M-53.2 623.0L-41.6 603.8M-41.6 603.8L-31.0 586.3M-31.0 586.3L-21.4 570.3M-21.4 570.3L-12.5 555.5M-12.5 555.5L-4.3 542.0M-4.3 542.0L3.3 529.5M-40.6 622.2L-29.6 603.0M-29.6 603.0L-19.6 585.5M-19.6 585.5L-10.4 569.6M-10.4 569.6L-1.9 554.9M-1.9 554.9L5.8 541.3M5.8 541.3L13.0 528.8M-17.7 602.3L-8.2 584.8M-8.2 584.8L0.6 568.9M0.6 568.9L8.6 554.2M8.6 554.2L15.9 540.7M15.9 540.7L22.7 528.2M-5.8 601.5L3.2 584.1M3.2 584.1L11.5 568.2M11.5 568.2L19.0 553.6M19.0 553.6L26.0 540.1M26.0 540.1L32.4 527.6M17.9 600.0L25.9 582.7M25.9 582.7L33.1 566.8M33.1 566.8L39.8 552.2M39.8 552.2L46.0 538.8M46.0 538.8L51.7 526.4M51.7 526.4L56.9 514.9M29.7 599.3L37.1 582.0M37.1 582.0L43.9 566.1M43.9 566.1L50.2 551.6M50.2 551.6L55.9 538.2M55.9 538.2L61.2 525.8M61.2 525.8L66.1 514.3M48.3 581.3L54.7 565.5M54.7 565.5L60.5 550.9M60.5 550.9L65.8 537.5M65.8 537.5L70.7 525.2M70.7 525.2L75.3 513.7M59.5 580.6L65.4 564.8M65.4 564.8L70.7 550.3M70.7 550.3L75.7 536.9M75.7 536.9L80.2 524.6M80.2 524.6L84.5 513.1M84.5 513.1L88.4 502.4M70.6 579.9L76.0 564.1M76.0 564.1L80.9 549.6M80.9 549.6L85.5 536.3M85.5 536.3L89.7 524.0M89.7 524.0L93.6 512.5M93.6 512.5L97.2 501.9M81.7 579.2L86.6 563.4M86.6 563.4L91.1 549.0M91.1 549.0L95.3 535.7M95.3 535.7L99.1 523.4M99.1 523.4L102.7 511.9M102.7 511.9L106.0 501.3M92.8 578.5L97.2 562.8M97.2 562.8L101.3 548.4M101.3 548.4L105.0 535.1M105.0 535.1L108.5 522.8M108.5 522.8L111.7 511.4M111.7 511.4L114.7 500.8M103.8 577.8L107.8 562.1M107.8 562.1L111.4 547.7M111.4 547.7L114.8 534.4M114.8 534.4L117.9 522.2M117.9 522.2L120.7 510.8M120.7 510.8L123.4 500.2M114.8 577.1L118.3 561.4M118.3 561.4L121.5 547.1M121.5 547.1L124.4 533.8M124.4 533.8L127.2 521.6M127.2 521.6L129.7 510.2M129.7 510.2L132.1 499.7M139.2 560.1L141.5 545.8M141.5 545.8L143.7 532.6M143.7 532.6L145.7 520.4M145.7 520.4L147.6 509.1M147.6 509.1L149.3 498.6M149.3 498.6L150.9 488.8M149.6 559.5L151.5 545.2M151.5 545.2L153.3 532.0M153.3 532.0L154.9 519.8M154.9 519.8L156.5 508.5M156.5 508.5L157.9 498.0M157.9 498.0L159.2 488.2M159.9 558.8L161.4 544.6M161.4 544.6L162.8 531.4M162.8 531.4L164.1 519.2M164.1 519.2L165.3 508.0M165.3 508.0L166.4 497.5M166.4 497.5L167.5 487.7M170.2 558.2L171.3 543.9M171.3 543.9L172.3 530.8M172.3 530.8L173.3 518.7M173.3 518.7L174.1 507.4M174.1 507.4L174.9 496.9M174.9 496.9L175.7 487.2M180.5 557.5L181.2 543.3M181.2 543.3L181.8 530.2M181.8 530.2L182.4 518.1M182.4 518.1L182.9 506.8M182.9 506.8L183.4 496.4M183.4 496.4L183.9 486.7M190.8 556.9L191.0 542.7M191.0 542.7L191.3 529.6M191.3 529.6L191.5 517.5M191.5 517.5L191.7 506.3M191.7 506.3L191.9 495.9M191.9 495.9L192.0 486.1M201.0 556.2L200.8 542.1M200.8 542.1L200.7 529.0M200.7 529.0L200.5 516.9M200.5 516.9L200.4 505.7M200.4 505.7L200.3 495.3M200.3 495.3L200.2 485.6M211.1 555.6L210.6 541.4M210.6 541.4L210.0 528.4M210.0 528.4L209.5 516.4M209.5 516.4L209.1 505.2M209.1 505.2L208.7 494.8M208.7 494.8L208.3 485.1M221.3 555.0L220.3 540.8M220.3 540.8L219.4 527.8M219.4 527.8L218.5 515.8M218.5 515.8L217.7 504.6M217.7 504.6L217.0 494.2M217.0 494.2L216.3 484.6M243.4 569.0L241.4 553.7M241.4 553.7L239.6 539.6M239.6 539.6L237.9 526.6M237.9 526.6L236.4 514.6M236.4 514.6L235.0 503.5M235.0 503.5L233.6 493.2M253.9 568.4L251.5 553.1M251.5 553.1L249.2 539.0M249.2 539.0L247.2 526.1M247.2 526.1L245.3 514.1M245.3 514.1L243.5 503.0M243.5 503.0L241.9 492.7M264.3 567.7L261.5 552.4M261.5 552.4L258.8 538.4M258.8 538.4L256.4 525.5M256.4 525.5L254.2 513.5M254.2 513.5L252.1 502.4M252.1 502.4L250.1 492.1M274.7 567.0L271.4 551.8M271.4 551.8L268.4 537.8M268.4 537.8L265.6 524.9M265.6 524.9L263.0 513.0M263.0 513.0L260.6 501.9M260.6 501.9L258.3 491.6M285.1 566.4L281.3 551.2M281.3 551.2L277.9 537.2M277.9 537.2L274.7 524.3M274.7 524.3L271.8 512.4M271.8 512.4L269.1 501.4M269.1 501.4L266.5 491.1M295.4 565.7L291.2 550.5M291.2 550.5L287.4 536.6M287.4 536.6L283.8 523.7M283.8 523.7L280.5 511.8M280.5 511.8L277.5 500.8M310.8 581.7L305.7 565.1M305.7 565.1L301.1 549.9M301.1 549.9L296.8 536.0M296.8 536.0L292.9 523.2M292.9 523.2L289.3 511.3M289.3 511.3L285.9 500.3M321.5 581.0L315.9 564.5M315.9 564.5L310.9 549.3M310.9 549.3L306.2 535.4M306.2 535.4L301.9 522.6M301.9 522.6L298.0 510.7M298.0 510.7L294.3 499.8M332.2 580.3L326.2 563.8M326.2 563.8L320.7 548.7M320.7 548.7L315.6 534.8M315.6 534.8L310.9 522.0M310.9 522.0L306.6 510.2M361.1 597.1L353.5 579.0M353.5 579.0L346.5 562.5M346.5 562.5L340.1 547.5M340.1 547.5L334.3 533.6M334.3 533.6L328.9 520.9M328.9 520.9L323.9 509.1M372.2 596.4L364.0 578.3M364.0 578.3L356.6 561.9M356.6 561.9L349.8 546.9M349.8 546.9L343.6 533.0M343.6 533.0L337.8 520.3M383.3 595.7L374.6 577.7M374.6 577.7L366.7 561.3M366.7 561.3L359.4 546.2M359.4 546.2L352.8 532.5M352.8 532.5L346.7 519.7M394.3 595.0L385.1 577.0M385.1 577.0L376.7 560.6M376.7 560.6L369.1 545.6M369.1 545.6L362.0 531.9M362.0 531.9L355.5 519.2M416.0 614.1L405.3 594.3M405.3 594.3L395.6 576.4M395.6 576.4L386.7 560.0M386.7 560.0L378.6 545.0M378.6 545.0L371.2 531.3M427.5 613.4L416.2 593.7M416.2 593.7L406.0 575.7M406.0 575.7L396.7 559.4M396.7 559.4L388.2 544.4M388.2 544.4L380.4 530.7M439.0 612.7L427.1 593.0M427.1 593.0L416.4 575.1M416.4 575.1L406.6 558.8M406.6 558.8L397.7 543.8M397.7 543.8L389.5 530.1M464.2 633.9L450.4 612.0M450.4 612.0L438.0 592.3M438.0 592.3L426.8 574.4M426.8 574.4L416.5 558.1M416.5 558.1L407.2 543.2M476.0 632.8L461.6 611.0M461.6 611.0L448.7 591.4M448.7 591.4L437.0 573.6M437.0 573.6L426.3 557.3M426.3 557.3L416.5 542.5M498.5 629.4L483.1 608.0M483.1 608.0L469.2 588.6M469.2 588.6L456.6 571.0M456.6 571.0L445.1 555.0M527.3 651.4L509.6 627.7M509.6 627.7L493.7 606.4M493.7 606.4L479.4 587.2M479.4 587.2L466.4 569.8M466.4 569.8L454.5 553.9M538.9 649.5L520.6 626.1M520.6 626.1L504.3 604.9M504.3 604.9L489.5 585.9M489.5 585.9L476.0 568.6M550.4 647.7L531.6 624.4M531.6 624.4L514.7 603.5M514.7 603.5L499.5 584.5M499.5 584.5L485.6 567.3M583.3 671.7L561.7 645.9M561.7 645.9L542.5 622.8M542.5 622.8L525.1 602.0M525.1 602.0L509.4 583.2M509.4 583.2L495.1 566.1M595.2 669.7L573.1 644.1M573.1 644.1L553.2 621.1M553.2 621.1L535.4 600.5M535.4 600.5L519.3 581.8M607.0 667.7L584.3 642.3M584.3 642.3L563.9 619.5M563.9 619.5L545.6 599.0M545.6 599.0L529.1 580.5M644.8 694.0L618.6 665.7M618.6 665.7L595.4 640.5M595.4 640.5L574.6 617.9M574.6 617.9L555.8 597.6M555.8 597.6L538.8 579.2M657.0 691.8L630.2 663.7M630.2 663.7L606.4 638.7M606.4 638.7L585.1 616.3M585.1 616.3L565.9 596.2M712.5 718.5L681.0 687.4M681.0 687.4L653.1 659.8M653.1 659.8L628.2 635.2M628.2 635.2L605.9 613.2M725.0 716.1L692.8 685.2M692.8 685.2L664.3 657.9M664.3 657.9L639.0 633.5M639.0 633.5L616.2 611.6M737.3 713.6L704.5 683.0M704.5 683.0L675.5 655.9M675.5 655.9L649.7 631.8M649.7 631.8L626.4 610.1M787.5 745.7L749.5 711.2M749.5 711.2L716.2 680.9M716.2 680.9L686.6 654.0M686.6 654.0L660.3 630.1M800.2 743.0L761.6 708.8M761.6 708.8L727.7 678.8M727.7 678.8L697.6 652.2M697.6 652.2L670.8 628.4M812.8 740.3L773.6 706.5M773.6 706.5L739.1 676.7M739.1 676.7L708.5 650.3M708.5 650.3L681.2 626.7M825.3 737.6L785.5 704.1M785.5 704.1L750.5 674.6M750.5 674.6L719.3 648.4M883.9 772.9L837.7 735.0M837.7 735.0L797.3 701.8M797.3 701.8L761.7 672.6M761.7 672.6L730.1 646.6M896.8 769.9L849.9 732.3M849.9 732.3L809.0 699.5M809.0 699.5L772.8 670.5M772.8 670.5L740.7 644.8M922.1 764.0L874.1 727.2M874.1 727.2L832.0 694.9M832.0 694.9L794.8 666.5M990.7 803.0L934.6 761.0M934.6 761.0L886.0 724.6M886.0 724.6L843.3 692.7M843.3 692.7L805.6 664.5M1003.7 799.7L947.0 758.2M947.0 758.2L897.7 722.1M897.7 722.1L854.6 690.5M1016.5 796.4L959.2 755.3M959.2 755.3L909.4 719.6M909.4 719.6L865.7 688.3M1096.4 840.3L1029.2 793.1M1029.2 793.1L971.3 752.5M971.3 752.5L921.0 717.1M921.0 717.1L876.7 686.1M1109.6 836.5L1041.7 789.9M1041.7 789.9L983.3 749.7M983.3 749.7L932.4 714.7M932.4 714.7L887.7 683.9M1122.6 832.8L1054.2 786.7M1054.2 786.7L995.1 746.9M995.1 746.9L943.7 712.3M1135.5 829.1L1066.4 783.5M1066.4 783.5L1006.9 744.2M1006.9 744.2L955.0 709.9M1229.7 878.3L1148.2 825.5M1148.2 825.5L1078.6 780.4M1078.6 780.4L1018.5 741.5M1018.5 741.5L966.1 707.5M1255.7 869.9L1173.1 818.4M1173.1 818.4L1102.5 774.3M1102.5 774.3L1041.4 736.1M1268.5 865.8L1185.4 814.8M1185.4 814.8L1114.3 771.2M1114.3 771.2L1052.7 733.5M1281.2 861.7L1197.6 811.4M1197.6 811.4L1125.9 768.2M1125.9 768.2L1063.8 730.9M1393.0 916.5L1293.7 857.7M1293.7 857.7L1209.5 807.9M1209.5 807.9L1137.4 765.3M1405.8 911.7L1306.0 853.7M1306.0 853.7L1221.4 804.5M1221.4 804.5L1148.8 762.3M1418.4 907.1L1318.2 849.8M1318.2 849.8L1233.1 801.2M1233.1 801.2L1160.1 759.4M1430.9 902.5L1330.2 845.9M1330.2 845.9L1244.7 797.9M1244.7 797.9L1171.3 756.6M1563.7 964.6L1443.1 897.9M1443.1 897.9L1342.1 842.1M1342.1 842.1L1256.2 794.6M1576.2 959.2L1455.3 893.5M1455.3 893.5L1353.9 838.3M1353.9 838.3L1267.6 791.3M1600.6 948.7L1479.1 884.7M1479.1 884.7L1376.9 830.8M1376.9 830.8L1289.9 785.0M1612.5 943.5L1490.7 880.3M1490.7 880.3L1388.3 827.2M1771.4 1013.6L1624.3 938.4M1624.3 938.4L1502.3 876.1M1502.3 876.1L1399.5 823.6M1783.1 1007.5L1635.9 933.4M1635.9 933.4L1513.7 871.9M1513.7 871.9L1410.6 820.0M1794.6 1001.5L1647.3 928.5M1647.3 928.5L1524.9 867.7M1524.9 867.7L1421.5 816.5M1805.9 995.6L1658.6 923.6M1658.6 923.6L1536.0 863.6M1817.1 989.8L1669.7 918.7M1669.7 918.7L1547.0 859.6M1828.1 984.0L1680.7 914.0M1680.7 914.0L1557.8 855.6M1839.0 978.3L1691.6 909.3M1691.6 909.3L1568.5 851.6M1860.2 967.3L1712.9 900.1M1870.6 961.8L1723.3 895.6M1880.8 956.5L1733.6 891.1M1890.9 951.2L1743.8 886.7M1900.9 946.0L1753.8 882.4M1773.5 763.0L1843.2 737.8M1757.9 757.5L1827.6 732.8M1666.1 778.7L1742.6 752.1M1742.6 752.1L1812.4 727.9M1651.2 772.9L1727.6 746.9M1727.6 746.9L1797.4 723.1M1797.4 723.1L1861.3 701.3M1538.4 789.2L1622.3 761.7M1622.3 761.7L1698.6 736.7M1698.6 736.7L1768.3 713.8M1768.3 713.8L1832.3 692.7M1432.4 813.0L1524.6 783.2M1524.6 783.2L1608.2 756.3M1608.2 756.3L1684.4 731.7M1684.4 731.7L1754.1 709.2M1754.1 709.2L1818.2 688.6M1419.1 806.5L1511.0 777.4M1511.0 777.4L1594.4 750.9M1594.4 750.9L1670.5 726.8M1670.5 726.8L1740.2 704.7M1740.2 704.7L1804.3 684.5M1304.8 831.7L1406.1 800.1M1406.1 800.1L1497.7 771.6M1497.7 771.6L1580.9 745.7M1580.9 745.7L1656.9 722.0M1656.9 722.0L1726.6 700.4M1292.6 824.8L1393.4 793.9M1393.4 793.9L1484.7 766.0M1484.7 766.0L1567.7 740.6M1567.7 740.6L1643.6 717.3M1169.3 851.5L1280.6 818.0M1280.6 818.0L1380.9 787.8M1380.9 787.8L1471.9 760.4M1471.9 760.4L1554.7 735.5M1554.7 735.5L1630.4 712.7M1158.2 844.2L1268.9 811.4M1268.9 811.4L1368.7 781.9M1368.7 781.9L1459.4 755.0M1459.4 755.0L1542.0 730.6M1025.0 872.7L1147.4 837.0M1147.4 837.0L1257.4 805.0M1257.4 805.0L1356.8 776.0M1356.8 776.0L1447.1 749.7M1447.1 749.7L1529.4 725.7M1015.3 864.8L1136.8 830.0M1136.8 830.0L1246.1 798.7M1246.1 798.7L1345.1 770.3M1345.1 770.3L1435.0 744.5M862.8 886.9L996.4 849.7M996.4 849.7L1116.3 816.5M1116.3 816.5L1224.4 786.4M1224.4 786.4L1322.4 759.2M706.4 919.3L854.8 878.7M854.8 878.7L987.3 842.5M987.3 842.5L1106.3 809.9M1106.3 809.9L1213.8 780.5M1213.8 780.5L1311.3 753.8M700.0 910.4L847.0 870.8M847.0 870.8L978.4 835.3M978.4 835.3L1096.6 803.5M1096.6 803.5L1203.5 774.7M530.0 945.2L693.7 901.7M693.7 901.7L839.4 863.0M839.4 863.0L969.7 828.4M969.7 828.4L1087.1 797.2M1087.1 797.2L1193.3 769.0M525.6 935.6L687.6 893.2M687.6 893.2L831.9 855.4M831.9 855.4L961.2 821.6M961.2 821.6L1077.8 791.0M340.4 973.0L521.4 926.3M521.4 926.3L681.7 884.9M681.7 884.9L824.7 848.0M824.7 848.0L952.9 814.9M952.9 814.9L1068.7 785.0M338.4 962.7L517.3 917.2M517.3 917.2L675.9 876.8M675.9 876.8L817.5 840.8M817.5 840.8L944.8 808.4M336.6 952.6L513.3 908.3M513.3 908.3L670.2 868.9M670.2 868.9L810.6 833.7M810.6 833.7L936.8 802.0M137.0 991.8L334.7 942.8M334.7 942.8L509.3 899.6M509.3 899.6L664.7 861.2M664.7 861.2L803.8 826.7M-80.4 1023.2L138.6 970.4M138.6 970.4L331.2 924.0M331.2 924.0L501.8 882.9M501.8 882.9L654.0 846.3M-76.4 1011.5L139.4 960.2M139.4 960.2L329.5 915.0M329.5 915.0L498.2 874.9M498.2 874.9L648.8 839.1M-72.5 1000.1L140.2 950.2M140.2 950.2L327.8 906.2M327.8 906.2L494.6 867.0M-68.8 989.1L140.9 940.5M140.9 940.5L326.2 897.6M326.2 897.6L491.1 859.4M-65.1 978.3L141.7 931.0M141.7 931.0L324.7 889.2M324.7 889.2L487.7 851.9M-61.5 967.9L142.4 921.8M142.4 921.8L323.1 881.0M-58.1 957.7L143.1 912.8M143.1 912.8L321.6 873.0M-54.7 947.8L143.7 904.1M-51.4 938.2L144.4 895.5M-260.2 965.4L-45.1 919.6M-254.1 955.3L-42.1 910.7" stroke="#252525" stroke-width="1.5" stroke-opacity="0.250" fill="none"/><path d="M-52.8 643.3L-40.6 622.2M-52.4 665.8L-39.6 642.5M-39.6 642.5L-28.1 621.4M-28.1 621.4L-17.7 602.3M-52.0 691.0L-38.6 665.0M-38.6 665.0L-26.5 641.7M-26.5 641.7L-15.6 620.6M-15.6 620.6L-5.8 601.5M-11.0 663.3L-0.4 640.0M-0.4 640.0L9.2 619.1M9.2 619.1L17.9 600.0M2.6 662.4L12.6 639.2M12.6 639.2L21.6 618.3M21.6 618.3L29.7 599.3M16.3 661.6L25.5 638.4M25.5 638.4L33.9 617.5M33.9 617.5L41.4 598.6M41.4 598.6L48.3 581.3M29.8 660.7L38.4 637.6M38.4 637.6L46.1 616.8M46.1 616.8L53.1 597.8M53.1 597.8L59.5 580.6M43.4 659.9L51.2 636.8M51.2 636.8L58.3 616.0M58.3 616.0L64.8 597.1M64.8 597.1L70.6 579.9M56.9 659.1L64.0 636.0M64.0 636.0L70.5 615.2M70.5 615.2L76.4 596.4M76.4 596.4L81.7 579.2M70.3 658.2L76.8 635.2M76.8 635.2L82.6 614.5M82.6 614.5L88.0 595.6M88.0 595.6L92.8 578.5M83.7 657.4L89.5 634.5M89.5 634.5L94.7 613.7M94.7 613.7L99.5 594.9M99.5 594.9L103.8 577.8M102.1 633.7L106.8 613.0M106.8 613.0L111.0 594.2M111.0 594.2L114.8 577.1M127.3 632.1L130.7 611.5M130.7 611.5L133.8 592.8M133.8 592.8L136.6 575.7M136.6 575.7L139.2 560.1M139.8 631.3L142.6 610.7M142.6 610.7L145.2 592.1M145.2 592.1L147.5 575.0M147.5 575.0L149.6 559.5M152.3 630.5L154.5 610.0M154.5 610.0L156.5 591.3M156.5 591.3L158.3 574.4M158.3 574.4L159.9 558.8M164.8 629.8L166.3 609.3M166.3 609.3L167.8 590.6M167.8 590.6L169.0 573.7M169.0 573.7L170.2 558.2M177.1 629.0L178.1 608.5M178.1 608.5L179.0 589.9M179.0 589.9L179.8 573.0M179.8 573.0L180.5 557.5M189.5 628.2L189.9 607.8M189.9 607.8L190.2 589.2M190.2 589.2L190.5 572.3M190.5 572.3L190.8 556.9M201.8 627.5L201.6 607.1M201.6 607.1L201.3 588.5M201.3 588.5L201.1 571.7M201.1 571.7L201.0 556.2M214.0 626.7L213.2 606.3M213.2 606.3L212.5 587.8M212.5 587.8L211.8 571.0M211.8 571.0L211.1 555.6M226.3 625.9L224.8 605.6M224.8 605.6L223.5 587.1M223.5 587.1L222.4 570.3M222.4 570.3L221.3 555.0M253.5 646.9L250.6 624.4M250.6 624.4L247.9 604.2M247.9 604.2L245.6 585.8M245.6 585.8L243.4 569.0M266.2 646.1L262.6 623.7M262.6 623.7L259.4 603.4M259.4 603.4L256.5 585.1M256.5 585.1L253.9 568.4M278.9 645.3L274.7 622.9M274.7 622.9L270.9 602.7M270.9 602.7L267.5 584.4M267.5 584.4L264.3 567.7M291.5 644.5L286.7 622.2M286.7 622.2L282.3 602.0M282.3 602.0L278.3 583.7M278.3 583.7L274.7 567.0M304.1 643.8L298.6 621.4M298.6 621.4L293.7 601.3M293.7 601.3L289.2 583.0M289.2 583.0L285.1 566.4M316.7 643.0L310.6 620.7M310.6 620.7L305.0 600.6M305.0 600.6L300.0 582.4M300.0 582.4L295.4 565.7M329.2 642.2L322.4 620.0M322.4 620.0L316.3 599.9M316.3 599.9L310.8 581.7M350.0 666.2L341.7 641.4M341.7 641.4L334.3 619.2M334.3 619.2L327.6 599.2M327.6 599.2L321.5 581.0M363.1 665.4L354.1 640.7M354.1 640.7L346.1 618.5M346.1 618.5L338.8 598.5M338.8 598.5L332.2 580.3M389.3 663.8L378.9 639.1M378.9 639.1L369.5 617.0M369.5 617.0L361.1 597.1M402.3 663.0L391.2 638.4M391.2 638.4L381.2 616.3M381.2 616.3L372.2 596.4M428.5 689.7L415.3 662.2M415.3 662.2L403.5 637.6M403.5 637.6L392.8 615.6M392.8 615.6L383.3 595.7M442.3 688.9L428.2 661.4M428.2 661.4L415.7 636.9M415.7 636.9L404.4 614.9M404.4 614.9L394.3 595.0M455.9 688.0L441.1 660.6M441.1 660.6L427.9 636.1M427.9 636.1L416.0 614.1M469.5 687.2L453.9 659.8M453.9 659.8L440.0 635.4M440.0 635.4L427.5 613.4M501.6 717.3L483.1 686.4M483.1 686.4L466.7 659.0M466.7 659.0L452.1 634.6M452.1 634.6L439.0 612.7M516.1 716.4L496.7 685.5M496.7 685.5L479.5 658.2M479.5 658.2L464.2 633.9M530.1 715.0L509.8 684.3M509.8 684.3L491.9 657.1M491.9 657.1L476.0 632.8M581.0 744.5L556.4 710.2M556.4 710.2L534.8 680.0M534.8 680.0L515.6 653.3M515.6 653.3L498.5 629.4M594.8 741.8L569.4 707.8M569.4 707.8L547.1 677.9M547.1 677.9L527.3 651.4M608.4 739.1L582.3 705.5M582.3 705.5L559.3 675.8M559.3 675.8L538.9 649.5M621.8 736.4L595.0 703.1M595.0 703.1L571.3 673.8M571.3 673.8L550.4 647.7M666.7 771.5L635.2 733.8M635.2 733.8L607.6 700.8M607.6 700.8L583.3 671.7M680.7 768.5L648.4 731.2M648.4 731.2L620.1 698.5M620.1 698.5L595.2 669.7M694.5 765.6L661.4 728.6M661.4 728.6L632.5 696.2M632.5 696.2L607.0 667.7M747.1 804.8L708.2 762.7M708.2 762.7L674.4 726.1M674.4 726.1L644.8 694.0M761.5 801.5L721.7 759.8M721.7 759.8L687.2 723.5M687.2 723.5L657.0 691.8M789.8 794.9L748.4 754.0M748.4 754.0L712.5 718.5M852.5 838.6L803.6 791.6M803.6 791.6L761.6 751.2M761.6 751.2L725.0 716.1M867.0 834.8L817.4 788.4M817.4 788.4L774.6 748.5M774.6 748.5L737.3 713.6M881.4 831.1L831.0 785.3M831.0 785.3L787.5 745.7M895.6 827.5L844.4 782.1M844.4 782.1L800.2 743.0M970.5 876.3L909.7 823.8M909.7 823.8L857.7 779.0M857.7 779.0L812.8 740.3M985.2 872.1L923.6 820.3M923.6 820.3L870.9 775.9M870.9 775.9L825.3 737.6M999.7 868.0L937.3 816.7M937.3 816.7L883.9 772.9M1014.0 863.9L950.9 813.2M950.9 813.2L896.8 769.9M1118.4 914.2L1042.2 855.8M1042.2 855.8L977.6 806.4M977.6 806.4L922.1 764.0M1133.0 909.5L1056.0 851.9M1056.0 851.9L990.7 803.0M1147.3 904.9L1069.6 848.0M1069.6 848.0L1003.7 799.7M1161.5 900.3L1083.1 844.1M1083.1 844.1L1016.5 796.4M1269.8 962.0L1175.5 895.8M1175.5 895.8L1096.4 840.3M1284.3 956.6L1189.3 891.3M1189.3 891.3L1109.6 836.5M1298.5 951.4L1202.9 887.0M1202.9 887.0L1122.6 832.8M1312.6 946.2L1216.4 882.6M1216.4 882.6L1135.5 829.1M1443.2 1016.8L1326.4 941.1M1326.4 941.1L1229.7 878.3M1471.4 1004.6L1353.6 931.0M1353.6 931.0L1255.7 869.9M1485.2 998.6L1366.9 926.1M1366.9 926.1L1268.5 865.8M1498.8 992.7L1380.0 921.2M1380.0 921.2L1281.2 861.7M1657.6 1073.0L1512.1 986.9M1512.1 986.9L1393.0 916.5M1671.1 1066.0L1525.3 981.2M1525.3 981.2L1405.8 911.7M1684.3 1059.1L1538.3 975.6M1538.3 975.6L1418.4 907.1M1697.4 1052.3L1551.1 970.1M1551.1 970.1L1430.9 902.5M1710.2 1045.6L1563.7 964.6M1904.3 1137.7L1722.8 1039.0M1722.8 1039.0L1576.2 959.2M1928.7 1121.6L1747.5 1026.1M1747.5 1026.1L1600.6 948.7M1940.6 1113.8L1759.5 1019.8M1759.5 1019.8L1612.5 943.5M1952.3 1106.1L1771.4 1013.6M1963.8 1098.5L1783.1 1007.5M1975.1 1091.1L1794.6 1001.5M1762.4 816.1L1839.0 786.0M1660.7 842.1L1745.5 809.5M1745.5 809.5L1822.1 780.1M1644.2 835.0L1729.0 803.1M1729.0 803.1L1805.6 774.3M1534.0 862.7L1628.1 828.0M1628.1 828.0L1712.7 796.8M1712.7 796.8L1789.4 768.6M1789.4 768.6L1859.0 742.9M1518.5 855.1L1612.3 821.2M1612.3 821.2L1696.9 790.6M1696.9 790.6L1773.5 763.0M1399.0 884.6L1503.3 847.7M1503.3 847.7L1596.9 814.5M1596.9 814.5L1681.3 784.6M1681.3 784.6L1757.9 757.5M1384.6 876.5L1488.5 840.4M1488.5 840.4L1581.8 808.0M1581.8 808.0L1666.1 778.7M1254.8 908.0L1370.5 868.6M1370.5 868.6L1474.0 833.3M1474.0 833.3L1567.0 801.6M1567.0 801.6L1651.2 772.9M1100.4 933.1L1228.9 890.9M1228.9 890.9L1343.3 853.3M1343.3 853.3L1445.9 819.6M1445.9 819.6L1538.4 789.2M1088.8 923.8L1216.4 882.6M1216.4 882.6L1330.2 845.9M1330.2 845.9L1432.4 813.0M934.6 960.0L1077.5 914.7M1077.5 914.7L1204.2 874.6M1204.2 874.6L1317.4 838.7M1317.4 838.7L1419.1 806.5M924.8 950.0L1066.4 905.9M1066.4 905.9L1192.3 866.7M1192.3 866.7L1304.8 831.7M756.3 988.9L915.3 940.2M915.3 940.2L1055.7 897.3M1055.7 897.3L1180.7 859.0M1180.7 859.0L1292.6 824.8M748.6 978.1L906.0 930.8M906.0 930.8L1045.2 888.9M1045.2 888.9L1169.3 851.5M563.8 1020.1L741.1 967.7M741.1 967.7L896.9 921.5M896.9 921.5L1035.0 880.7M1035.0 880.7L1158.2 844.2M558.6 1008.5L733.8 957.5M733.8 957.5L888.1 912.5M888.1 912.5L1025.0 872.7M553.5 997.2L726.6 947.6M726.6 947.6L879.4 903.8M879.4 903.8L1015.3 864.8M350.9 1029.1L543.7 975.5M543.7 975.5L713.0 928.5M713.0 928.5L862.8 886.9M130.5 1076.9L348.7 1017.2M348.7 1017.2L539.0 965.2M539.0 965.2L706.4 919.3M131.5 1063.7L346.5 1005.7M346.5 1005.7L534.4 955.0M534.4 955.0L700.0 910.4M132.5 1050.8L344.4 994.5M344.4 994.5L530.0 945.2M-107.0 1101.2L133.4 1038.3M133.4 1038.3L342.4 983.6M342.4 983.6L525.6 935.6M-102.2 1087.2L134.4 1026.1M134.4 1026.1L340.4 973.0M-97.6 1073.6L135.3 1014.3M135.3 1014.3L338.4 962.7M-93.1 1060.4L136.2 1002.9M136.2 1002.9L336.6 952.6M-88.7 1047.6L137.0 991.8" stroke="#252525" stroke-width="1.5" stroke-opacity="0.375" fill="none"/><path d="M-51.2 750.9L-36.2 718.2M-36.2 718.2L-22.9 689.2M-22.9 689.2L-11.0 663.3M-34.9 749.9L-20.9 717.3M-20.9 717.3L-8.4 688.3M-8.4 688.3L2.6 662.4M-18.6 749.0L-5.6 716.3M-5.6 716.3L6.0 687.4M6.0 687.4L16.3 661.6M-2.4 748.0L9.6 715.4M9.6 715.4L20.3 686.5M20.3 686.5L29.8 660.7M13.7 747.0L24.8 714.5M24.8 714.5L34.6 685.6M34.6 685.6L43.4 659.9M39.9 713.5L48.9 684.7M48.9 684.7L56.9 659.1M55.0 712.6L63.1 683.9M63.1 683.9L70.3 658.2M70.0 711.7L77.2 683.0M77.2 683.0L83.7 657.4M84.9 710.8L91.3 682.1M91.3 682.1L97.0 656.6M97.0 656.6L102.1 633.7M114.7 708.9L119.4 680.4M119.4 680.4L123.6 654.9M123.6 654.9L127.3 632.1M129.5 708.0L133.3 679.5M133.3 679.5L136.8 654.1M136.8 654.1L139.8 631.3M144.2 707.1L147.2 678.7M147.2 678.7L149.9 653.3M149.9 653.3L152.3 630.5M158.9 706.2L161.1 677.8M161.1 677.8L163.0 652.5M163.0 652.5L164.8 629.8M173.5 705.3L174.9 677.0M174.9 677.0L176.1 651.7M176.1 651.7L177.1 629.0M188.1 704.4L188.6 676.1M188.6 676.1L189.1 650.9M189.1 650.9L189.5 628.2M202.7 703.6L202.3 675.3M202.3 675.3L202.0 650.1M202.0 650.1L201.8 627.5M217.1 702.7L216.0 674.5M216.0 674.5L215.0 649.3M215.0 649.3L214.0 626.7M231.6 701.8L229.6 673.6M229.6 673.6L227.8 648.5M227.8 648.5L226.3 625.9M260.3 700.0L256.7 671.9M256.7 671.9L253.5 646.9M274.6 699.1L270.2 671.1M270.2 671.1L266.2 646.1M288.8 698.3L283.6 670.3M283.6 670.3L278.9 645.3M309.9 729.0L303.0 697.4M303.0 697.4L296.9 669.5M296.9 669.5L291.5 644.5M324.9 728.0L317.2 696.5M317.2 696.5L310.3 668.6M310.3 668.6L304.1 643.8M339.9 727.1L331.2 695.7M331.2 695.7L323.6 667.8M323.6 667.8L316.7 643.0M354.9 726.2L345.3 694.8M345.3 694.8L336.8 667.0M336.8 667.0L329.2 642.2M369.8 725.3L359.3 694.0M359.3 694.0L350.0 666.2M384.6 724.4L373.2 693.1M373.2 693.1L363.1 665.4M429.2 758.1L414.2 722.6M414.2 722.6L401.0 691.4M401.0 691.4L389.3 663.8M444.9 757.2L428.9 721.7M428.9 721.7L414.8 690.6M414.8 690.6L402.3 663.0M460.6 756.2L443.5 720.8M443.5 720.8L428.5 689.7M476.2 755.3L458.1 719.9M458.1 719.9L442.3 688.9M491.8 754.3L472.7 719.0M472.7 719.0L455.9 688.0M530.4 793.9L507.3 753.4M507.3 753.4L487.2 718.2M487.2 718.2L469.5 687.2M547.0 792.9L522.7 752.5M522.7 752.5L501.6 717.3M563.5 791.9L538.2 751.5M538.2 751.5L516.1 716.4M579.6 790.2L553.1 750.0M553.1 750.0L530.1 715.0M641.9 829.4L609.2 783.8M609.2 783.8L581.0 744.5M657.5 825.8L623.8 780.7M623.8 780.7L594.8 741.8M672.8 822.2L638.3 777.6M638.3 777.6L608.4 739.1M729.5 870.2L688.0 818.6M688.0 818.6L652.5 774.6M652.5 774.6L621.8 736.4M745.6 866.0L703.1 815.1M703.1 815.1L666.7 771.5M761.4 862.0L717.9 811.7M717.9 811.7L680.7 768.5M777.1 857.9L732.6 808.2M732.6 808.2L694.5 765.6M792.5 854.0L747.1 804.8M862.3 907.3L807.8 850.0M807.8 850.0L761.5 801.5M894.2 898.2L837.8 842.3M837.8 842.3L789.8 794.9M909.9 893.7L852.5 838.6M994.7 954.1L925.3 889.3M925.3 889.3L867.0 834.8M1011.0 948.9L940.6 884.9M940.6 884.9L881.4 831.1M1027.0 943.7L955.7 880.6M955.7 880.6L895.6 827.5M1042.7 938.6L970.5 876.3M1146.3 1007.6L1058.3 933.6M1058.3 933.6L985.2 872.1M1162.5 1001.6L1073.6 928.6M1073.6 928.6L999.7 868.0M1178.5 995.7L1088.8 923.8M1088.8 923.8L1014.0 863.9M1209.8 984.1L1118.4 914.2M1337.4 1062.5L1225.1 978.5M1225.1 978.5L1133.0 909.5M1353.3 1055.7L1240.2 972.9M1240.2 972.9L1147.3 904.9M1368.9 1048.9L1255.1 967.4M1255.1 967.4L1161.5 900.3M1384.2 1042.3L1269.8 962.0M1399.3 1035.8L1284.3 956.6M1557.0 1125.6L1414.2 1029.3M1414.2 1029.3L1298.5 951.4M1572.1 1117.7L1428.8 1023.0M1428.8 1023.0L1312.6 946.2M1587.0 1109.9L1443.2 1016.8M1615.9 1094.8L1471.4 1004.6M1811.7 1198.7L1630.1 1087.4M1630.1 1087.4L1485.2 998.6M1825.6 1189.5L1644.0 1080.1M1644.0 1080.1L1498.8 992.7M1839.4 1180.5L1657.6 1073.0M1852.8 1171.6L1671.1 1066.0M1866.0 1162.9L1684.3 1059.1M1879.0 1154.4L1697.4 1052.3M1891.8 1146.0L1710.2 1045.6M1749.1 880.3L1834.0 843.8M1730.6 872.3L1815.5 836.7M1600.0 894.9L1694.8 856.9M1694.8 856.9L1779.7 822.8M1779.7 822.8L1856.3 792.1M1476.7 928.3L1582.9 886.6M1582.9 886.6L1677.6 849.4M1677.6 849.4L1762.4 816.1M1460.4 919.1L1566.2 878.4M1566.2 878.4L1660.7 842.1M1325.7 954.8L1444.5 910.1M1444.5 910.1L1549.9 870.4M1549.9 870.4L1644.2 835.0M1310.7 945.0L1428.9 901.4M1428.9 901.4L1534.0 862.7M1163.2 983.4L1296.2 935.4M1296.2 935.4L1413.8 892.9M1413.8 892.9L1518.5 855.1M1149.9 972.8L1282.0 926.0M1282.0 926.0L1399.0 884.6M987.9 1014.2L1137.0 962.4M1137.0 962.4L1268.2 916.9M1268.2 916.9L1384.6 876.5M976.7 1002.8L1124.5 952.4M1124.5 952.4L1254.8 908.0M789.4 1035.1L955.1 980.8M955.1 980.8L1100.4 933.1M592.6 1083.8L780.8 1023.1M780.8 1023.1L944.7 970.2M944.7 970.2L1088.8 923.8M586.5 1070.2L772.4 1011.4M772.4 1011.4L934.6 960.0M580.6 1057.1L764.2 1000.0M764.2 1000.0L924.8 950.0M365.8 1108.4L574.8 1044.4M574.8 1044.4L756.3 988.9M363.1 1094.2L569.3 1032.1M569.3 1032.1L748.6 978.1M124.9 1150.1L360.5 1080.3M360.5 1080.3L563.8 1020.1M126.1 1134.5L358.0 1066.9M358.0 1066.9L558.6 1008.5M-139.2 1195.8L127.2 1119.4M127.2 1119.4L355.6 1053.9M355.6 1053.9L553.5 997.2M-127.7 1162.1L129.4 1090.7M129.4 1090.7L350.9 1029.1M-122.3 1146.1L130.5 1076.9M-117.0 1130.7L131.5 1063.7M-111.9 1115.7L132.5 1050.8" stroke="#252525" stroke-width="1.5" stroke-opacity="0.500" fill="none"/><path d="M-50.8 787.1L-34.9 749.9M-50.5 828.7L-33.5 786.1M-33.5 786.1L-18.6 749.0M-31.9 827.6L-16.1 785.0M-16.1 785.0L-2.4 748.0M-13.4 826.5L1.1 784.0M1.1 784.0L13.7 747.0M5.1 825.4L18.3 783.0M18.3 783.0L29.8 746.0M29.8 746.0L39.9 713.5M35.4 781.9L45.8 745.0M45.8 745.0L55.0 712.6M52.5 780.9L61.8 744.1M61.8 744.1L70.0 711.7M69.5 779.9L77.7 743.1M77.7 743.1L84.9 710.8M103.3 777.8L109.4 741.2M109.4 741.2L114.7 708.9M120.2 776.8L125.1 740.2M125.1 740.2L129.5 708.0M136.9 775.8L140.8 739.3M140.8 739.3L144.2 707.1M153.6 774.8L156.4 738.3M156.4 738.3L158.9 706.2M170.3 773.8L172.0 737.4M172.0 737.4L173.5 705.3M186.9 772.8L187.5 736.4M187.5 736.4L188.1 704.4M203.4 771.8L203.0 735.5M203.0 735.5L202.7 703.6M219.9 770.8L218.4 734.5M218.4 734.5L217.1 702.7M236.3 769.8L233.8 733.6M233.8 733.6L231.6 701.8M269.0 767.8L264.4 731.7M264.4 731.7L260.3 700.0M285.3 766.8L279.6 730.8M279.6 730.8L274.6 699.1M309.3 807.1L301.5 765.8M301.5 765.8L294.8 729.9M294.8 729.9L288.8 698.3M326.6 806.1L317.7 764.9M317.7 764.9L309.9 729.0M343.9 805.1L333.8 763.9M333.8 763.9L324.9 728.0M361.1 804.0L349.8 762.9M349.8 762.9L339.9 727.1M378.3 803.0L365.8 762.0M365.8 762.0L354.9 726.2M395.4 802.0L381.7 761.0M381.7 761.0L369.8 725.3M412.5 801.0L397.6 760.0M397.6 760.0L384.6 724.4M466.5 846.3L446.4 798.9M446.4 798.9L429.2 758.1M484.7 845.2L463.3 797.9M463.3 797.9L444.9 757.2M502.9 844.1L480.2 796.9M480.2 796.9L460.6 756.2M521.0 843.0L497.0 795.9M497.0 795.9L476.2 755.3M539.1 842.0L513.7 794.9M513.7 794.9L491.8 754.3M557.1 840.9L530.4 793.9M608.1 894.9L575.1 839.8M575.1 839.8L547.0 792.9M627.6 893.8L593.0 838.8M593.0 838.8L563.5 791.9M646.3 891.6L610.2 836.8M610.2 836.8L579.6 790.2M680.2 882.8L641.9 829.4M743.7 941.2L696.9 878.6M696.9 878.6L657.5 825.8M761.3 936.2L713.3 874.3M713.3 874.3L672.8 822.2M778.7 931.2L729.5 870.2M795.9 926.3L745.6 866.0M874.5 992.8L812.8 921.4M812.8 921.4L761.4 862.0M892.5 987.1L829.5 916.7M829.5 916.7L777.1 857.9M910.1 981.4L846.0 911.9M846.0 911.9L792.5 854.0M927.5 975.8L862.3 907.3M1043.4 1045.6L961.6 964.8M961.6 964.8L894.2 898.2M1061.2 1039.0L978.3 959.4M978.3 959.4L909.9 893.7M1078.8 1032.6L994.7 954.1M1096.0 1026.2L1011.0 948.9M1113.0 1019.9L1027.0 943.7M1236.8 1106.1L1129.8 1013.7M1129.8 1013.7L1042.7 938.6M1254.3 1098.5L1146.3 1007.6M1271.5 1091.1L1162.5 1001.6M1288.4 1083.8L1178.5 995.7M1460.5 1176.0L1321.4 1069.5M1321.4 1069.5L1209.8 984.1M1477.3 1167.2L1337.4 1062.5M1493.8 1158.6L1353.3 1055.7M1510.0 1150.1L1368.9 1048.9M1525.9 1141.8L1384.2 1042.3M1722.1 1257.7L1541.6 1133.6M1541.6 1133.6L1399.3 1035.8M1737.7 1247.4L1557.0 1125.6M1753.1 1237.3L1572.1 1117.7M1768.2 1227.4L1587.0 1109.9M1797.4 1208.1L1615.9 1094.8M1695.5 938.5L1790.3 895.7M1790.3 895.7L1874.7 857.6M1672.8 930.5L1768.1 888.6M1768.1 888.6L1852.9 851.2M1546.5 967.5L1653.9 921.3M1653.9 921.3L1749.1 880.3M1528.4 957.3L1635.5 912.3M1635.5 912.3L1730.6 872.3M1372.9 986.1L1493.5 937.7M1493.5 937.7L1600.0 894.9M1220.1 1029.0L1356.7 975.4M1356.7 975.4L1476.7 928.3M1205.2 1017.1L1341.0 965.0M1341.0 965.0L1460.4 919.1M1036.5 1063.6L1190.8 1005.6M1190.8 1005.6L1325.7 954.8M1023.8 1050.7L1176.8 994.3M1176.8 994.3L1310.7 945.0M836.9 1101.3L1011.5 1038.2M1011.5 1038.2L1163.2 983.4M826.8 1087.2L999.5 1026.0M999.5 1026.0L1149.9 972.8M619.1 1142.3L817.0 1073.6M817.0 1073.6L987.9 1014.2M612.2 1126.9L807.5 1060.4M807.5 1060.4L976.7 1002.8M377.4 1170.4L598.9 1097.7M598.9 1097.7L789.4 1035.1M374.4 1154.1L592.6 1083.8M119.7 1218.1L371.4 1138.4M371.4 1138.4L586.5 1070.2M121.0 1200.2L368.6 1123.2M368.6 1123.2L580.6 1057.1M-164.7 1270.8L122.4 1182.9M122.4 1182.9L365.8 1108.4M-158.0 1251.0L123.6 1166.2M123.6 1166.2L363.1 1094.2M-151.5 1231.9L124.9 1150.1M-145.2 1213.5L126.1 1134.5" stroke="#252525" stroke-width="1.5" stroke-opacity="0.625" fill="none"/><path d="M-50.1 876.9L-31.9 827.6M-30.2 875.8L-13.4 826.5M-10.2 874.6L5.1 825.4M9.6 873.4L23.5 824.3M23.5 824.3L35.4 781.9M29.4 872.2L41.8 823.2M41.8 823.2L52.5 780.9M49.1 871.0L60.1 822.1M60.1 822.1L69.5 779.9M88.4 868.7L96.4 819.9M96.4 819.9L103.3 777.8M107.9 867.6L114.5 818.8M114.5 818.8L120.2 776.8M127.3 866.4L132.5 817.7M132.5 817.7L136.9 775.8M146.7 865.3L150.4 816.7M150.4 816.7L153.6 774.8M166.0 864.1L168.3 815.6M168.3 815.6L170.3 773.8M185.3 863.0L186.1 814.5M186.1 814.5L186.9 772.8M204.5 861.8L203.9 813.5M203.9 813.5L203.4 771.8M223.6 860.7L221.6 812.4M221.6 812.4L219.9 770.8M242.6 859.6L239.3 811.3M239.3 811.3L236.3 769.8M280.6 857.3L274.4 809.2M274.4 809.2L269.0 767.8M299.4 856.2L291.8 808.2M291.8 808.2L285.3 766.8M318.3 855.1L309.3 807.1M337.0 854.0L326.6 806.1M355.7 852.8L343.9 805.1M374.3 851.7L361.1 804.0M409.9 906.6L392.9 850.6M392.9 850.6L378.3 803.0M430.0 905.4L411.3 849.5M411.3 849.5L395.4 802.0M450.1 904.2L429.8 848.4M429.8 848.4L412.5 801.0M490.0 901.9L466.5 846.3M509.8 900.7L484.7 845.2M529.6 899.5L502.9 844.1M549.3 898.4L521.0 843.0M604.6 963.1L569.0 897.2M569.0 897.2L539.1 842.0M626.1 961.9L588.6 896.1M588.6 896.1L557.1 840.9M647.5 960.6L608.1 894.9M668.8 959.4L627.6 893.8M689.2 956.8L646.3 891.6M780.8 1023.1L725.8 946.4M725.8 946.4L680.2 882.8M800.1 1016.8L743.7 941.2M819.1 1010.7L761.3 936.2M837.9 1004.7L778.7 931.2M930.4 1087.4L856.3 998.7M856.3 998.7L795.9 926.3M950.0 1080.1L874.5 992.8M969.3 1073.0L892.5 987.1M988.3 1066.0L910.1 981.4M1007.0 1059.1L927.5 975.8M1144.8 1145.9L1043.4 1045.6M1163.9 1137.6L1061.2 1039.0M1182.6 1129.5L1078.8 1032.6M1201.0 1121.6L1096.0 1026.2M1352.8 1232.2L1219.0 1113.7M1219.0 1113.7L1113.0 1019.9M1371.6 1222.3L1236.8 1106.1M1390.1 1212.7L1254.3 1098.5M1408.1 1203.3L1271.5 1091.1M1425.9 1194.0L1288.4 1083.8M1638.9 1312.5L1460.5 1176.0M1656.2 1301.1L1477.3 1167.2M1673.2 1289.9L1493.8 1158.6M1689.8 1279.0L1510.0 1150.1M1706.1 1268.2L1525.9 1141.8M1958.5 1420.3L1722.1 1257.7M1973.9 1406.6L1737.7 1247.4M1989.0 1393.1L1753.1 1237.3M2003.7 1380.0L1768.2 1227.4M2032.2 1354.6L1797.4 1208.1M1697.2 997.6L1797.6 948.6M1797.6 948.6L1886.3 905.2M1660.6 994.0L1763.2 945.2M1763.2 945.2L1854.0 902.0M1624.2 990.5L1729.2 941.8M1729.2 941.8L1822.0 898.8M1465.8 1042.3L1588.2 987.0M1588.2 987.0L1695.5 938.5M1442.5 1032.0L1565.2 978.0M1565.2 978.0L1672.8 930.5M1284.1 1080.3L1424.3 1020.0M1424.3 1020.0L1546.5 967.5M1267.4 1066.9L1406.7 1008.4M1406.7 1008.4L1528.4 957.3M1076.9 1104.8L1235.4 1041.3M1235.4 1041.3L1372.9 986.1M880.6 1162.3L1063.0 1090.7M1063.0 1090.7L1220.1 1029.0M869.1 1146.3L1049.5 1076.9M1049.5 1076.9L1205.2 1017.1M858.0 1130.8L1036.5 1063.6M641.4 1191.6L847.3 1115.8M847.3 1115.8L1023.8 1050.7M633.7 1174.6L836.9 1101.3M390.8 1241.6L626.3 1158.2M626.3 1158.2L826.8 1087.2M387.3 1222.8L619.1 1142.3M113.6 1296.8L383.9 1204.7M383.9 1204.7L612.2 1126.9M116.8 1256.0L377.4 1170.4M-186.6 1335.0L118.2 1236.7M118.2 1236.7L374.4 1154.1M-179.0 1312.8L119.7 1218.1M-171.8 1291.4L121.0 1200.2" stroke="#252525" stroke-width="1.5" stroke-opacity="0.750" fill="none"/><path d="M-49.9 933.6L-30.2 875.8M-28.2 932.3L-10.2 874.6M-6.6 931.0L9.6 873.4M14.9 929.8L29.4 872.2M36.3 928.5L49.1 871.0M78.9 926.0L88.4 868.7M100.1 924.8L107.9 867.6M121.3 923.5L127.3 866.4M142.3 922.3L146.7 865.3M163.3 921.0L166.0 864.1M184.3 919.8L185.3 863.0M205.1 918.6L204.5 861.8M225.9 917.4L223.6 860.7M246.6 916.2L242.6 859.6M287.9 913.7L280.6 857.3M308.4 912.5L299.4 856.2M328.8 911.3L318.3 855.1M349.2 910.1L337.0 854.0M386.0 975.8L369.5 908.9M369.5 908.9L355.7 852.8M408.1 974.5L389.7 907.8M389.7 907.8L374.3 851.7M430.3 973.2L409.9 906.6M452.3 971.9L430.0 905.4M474.3 970.6L450.1 904.2M518.0 968.1L490.0 901.9M539.8 966.9L509.8 900.7M561.4 965.6L529.6 899.5M623.9 1044.3L583.1 964.3M583.1 964.3L549.3 898.4M647.7 1042.9L604.6 963.1M671.5 1041.6L626.1 961.9M695.2 1040.2L647.5 960.6M718.8 1038.9L668.8 959.4M741.2 1035.8L689.2 956.8M848.6 1117.6L780.8 1023.1M869.6 1109.9L800.1 1016.8M890.2 1102.2L819.1 1010.7M910.4 1094.8L837.9 1004.7M1044.4 1189.3L950.0 1080.1M1065.2 1180.3L969.3 1073.0M1085.6 1171.5L988.3 1066.0M1105.7 1162.8L1007.0 1059.1M1273.9 1273.4L1144.8 1145.9M1294.2 1262.8L1163.9 1137.6M1314.1 1252.4L1182.6 1129.5M1333.6 1242.2L1201.0 1121.6M1546.5 1373.3L1371.6 1222.3M1565.8 1360.6L1390.1 1212.7M1584.7 1348.2L1408.1 1203.3M1603.1 1336.0L1425.9 1194.0M1910.1 1463.4L1673.2 1289.9M1926.6 1448.7L1689.8 1279.0M1942.8 1434.3L1706.1 1268.2M1771.6 1004.8L1867.2 955.4M1622.5 1057.3L1734.2 1001.2M1734.2 1001.2L1832.2 952.0M1582.8 1053.5L1697.2 997.6M1543.4 1049.7L1660.6 994.0M1366.5 1109.9L1504.4 1046.0M1504.4 1046.0L1624.2 990.5M1324.8 1106.0L1465.8 1042.3M1137.4 1166.4L1301.4 1094.2M1301.4 1094.2L1442.5 1032.0M1121.5 1150.3L1284.1 1080.3M917.6 1213.8L1106.2 1134.6M1106.2 1134.6L1267.4 1066.9M892.5 1178.9L1076.9 1104.8M666.2 1246.5L880.6 1162.3M657.6 1227.5L869.1 1146.3M402.2 1302.3L649.4 1209.3M649.4 1209.3L858.0 1130.8M398.2 1281.2L641.4 1191.6M108.5 1364.3L394.4 1261.0M394.4 1261.0L633.7 1174.6M110.2 1340.9L390.8 1241.6M112.0 1318.4L387.3 1222.8M-211.3 1407.5L113.6 1296.8M-194.5 1358.2L116.8 1256.0" stroke="#252525" stroke-width="1.5" stroke-opacity="0.875" fill="none"/><path d="M-73.3 1002.3L-49.9 933.6M-75.5 1084.1L-49.6 1001.0M-49.6 1001.0L-28.2 932.3M-78.3 1185.0L-49.4 1082.6M-49.4 1082.6L-26.0 999.6M-26.0 999.6L-6.6 931.0M-82.0 1312.9L-49.2 1183.4M-49.2 1183.4L-23.4 1081.1M-23.4 1081.1L-2.4 998.2M-2.4 998.2L14.9 929.8M-49.2 1311.1L-20.3 1181.8M-20.3 1181.8L2.5 1079.6M2.5 1079.6L21.0 996.9M21.0 996.9L36.3 928.5M16.1 1307.6L37.3 1178.6M37.3 1178.6L54.1 1076.7M54.1 1076.7L67.7 994.2M67.7 994.2L78.9 926.0M48.6 1305.8L66.0 1177.0M66.0 1177.0L79.8 1075.2M79.8 1075.2L90.9 992.8M90.9 992.8L100.1 924.8M80.9 1304.0L94.6 1175.4M94.6 1175.4L105.3 1073.8M105.3 1073.8L114.1 991.5M114.1 991.5L121.3 923.5M113.2 1302.3L123.1 1173.8M123.1 1173.8L130.8 1072.3M130.8 1072.3L137.1 990.2M137.1 990.2L142.3 922.3M145.4 1300.6L151.5 1172.2M151.5 1172.2L156.2 1070.9M156.2 1070.9L160.1 988.8M160.1 988.8L163.3 921.0M174.5 1466.4L177.5 1298.8M177.5 1298.8L179.8 1170.6M179.8 1170.6L181.6 1069.4M181.6 1069.4L183.0 987.5M183.0 987.5L184.3 919.8M211.4 1464.5L209.4 1297.1M209.4 1297.1L208.0 1169.1M208.0 1169.1L206.8 1068.0M206.8 1068.0L205.9 986.2M205.9 986.2L205.1 918.6M248.1 1462.6L241.3 1295.4M241.3 1295.4L236.1 1167.5M236.1 1167.5L232.0 1066.6M232.0 1066.6L228.7 984.9M228.7 984.9L225.9 917.4M284.8 1460.7L273.1 1293.6M273.1 1293.6L264.1 1165.9M264.1 1165.9L257.1 1065.1M257.1 1065.1L251.3 983.5M251.3 983.5L246.6 916.2M357.9 1456.9L336.4 1290.2M336.4 1290.2L320.0 1162.8M320.0 1162.8L307.0 1062.3M307.0 1062.3L296.5 980.9M296.5 980.9L287.9 913.7M394.2 1455.0L367.9 1288.5M367.9 1288.5L347.7 1161.3M347.7 1161.3L331.8 1060.9M331.8 1060.9L319.0 979.6M319.0 979.6L308.4 912.5M430.5 1453.1L399.3 1286.8M399.3 1286.8L375.4 1159.7M375.4 1159.7L356.6 1059.5M356.6 1059.5L341.4 978.3M341.4 978.3L328.8 911.3M466.6 1451.2L430.6 1285.1M430.6 1285.1L403.0 1158.2M403.0 1158.2L381.3 1058.1M381.3 1058.1L363.7 977.0M363.7 977.0L349.2 910.1M502.7 1449.3L461.8 1283.4M461.8 1283.4L430.6 1156.7M430.6 1156.7L405.9 1056.7M405.9 1056.7L386.0 975.8M538.6 1447.4L492.9 1281.7M492.9 1281.7L458.0 1155.1M458.0 1155.1L430.4 1055.3M430.4 1055.3L408.1 974.5M574.4 1445.6L523.9 1280.1M523.9 1280.1L485.3 1153.6M485.3 1153.6L454.9 1053.9M454.9 1053.9L430.3 973.2M610.2 1443.7L554.9 1278.4M554.9 1278.4L512.6 1152.1M512.6 1152.1L479.3 1052.5M479.3 1052.5L452.3 971.9M645.8 1441.8L585.7 1276.7M585.7 1276.7L539.8 1150.6M539.8 1150.6L503.6 1051.1M503.6 1051.1L474.3 970.6M716.7 1438.1L647.1 1273.4M647.1 1273.4L593.9 1147.6M593.9 1147.6L551.9 1048.4M551.9 1048.4L518.0 968.1M752.1 1436.3L677.6 1271.7M677.6 1271.7L620.8 1146.1M620.8 1146.1L576.0 1047.0M576.0 1047.0L539.8 966.9M787.3 1434.5L708.1 1270.1M708.1 1270.1L647.6 1144.6M647.6 1144.6L600.0 1045.6M600.0 1045.6L561.4 965.6M822.4 1432.6L738.5 1268.4M738.5 1268.4L674.4 1143.1M674.4 1143.1L623.9 1044.3M857.4 1430.8L768.8 1266.8M768.8 1266.8L701.1 1141.6M701.1 1141.6L647.7 1042.9M892.3 1429.0L799.0 1265.2M799.0 1265.2L727.7 1140.1M727.7 1140.1L671.5 1041.6M927.1 1427.2L829.1 1263.5M829.1 1263.5L754.2 1138.6M754.2 1138.6L695.2 1040.2M961.9 1425.4L859.1 1261.9M859.1 1261.9L780.6 1137.2M780.6 1137.2L718.8 1038.9M993.8 1419.6L887.1 1257.4M887.1 1257.4L805.6 1133.5M805.6 1133.5L741.2 1035.8M1045.7 1392.5L934.2 1237.0M934.2 1237.0L848.6 1117.6M1070.8 1379.4L957.1 1227.1M957.1 1227.1L869.6 1109.9M1095.3 1366.6L979.5 1217.4M979.5 1217.4L890.2 1102.2M1119.3 1354.1L1001.5 1207.9M1001.5 1207.9L910.4 1094.8M1142.8 1341.8L1023.2 1198.5M1023.2 1198.5L930.4 1087.4M1165.8 1329.8L1044.4 1189.3M1188.3 1318.0L1065.2 1180.3M1210.4 1306.5L1085.6 1171.5M1398.9 1470.5L1232.0 1295.3M1232.0 1295.3L1105.7 1162.8M1443.5 1441.1L1273.9 1273.4M1465.1 1426.9L1294.2 1262.8M1486.1 1413.0L1314.1 1252.4M1506.7 1399.5L1333.6 1242.2M1526.9 1386.2L1352.8 1232.2M1645.7 1328.6L1781.8 1237.4M1781.8 1237.4L1897.4 1159.8M1590.7 1323.6L1731.3 1232.7M1731.3 1232.7L1850.9 1155.4M1536.2 1318.7L1681.4 1228.1M1681.4 1228.1L1804.8 1151.1M1482.1 1313.9L1631.9 1223.6M1631.9 1223.6L1759.1 1146.8M1759.1 1146.8L1868.6 1080.8M1428.5 1309.1L1582.8 1219.0M1582.8 1219.0L1713.9 1142.6M1713.9 1142.6L1826.6 1076.8M1375.5 1304.3L1534.2 1214.6M1534.2 1214.6L1669.1 1138.3M1669.1 1138.3L1785.0 1072.8M1785.0 1072.8L1885.8 1015.9M1127.8 1406.4L1322.8 1299.6M1322.8 1299.6L1486.0 1210.1M1486.0 1210.1L1624.6 1134.2M1624.6 1134.2L1743.8 1068.9M1743.8 1068.9L1847.4 1012.1M1013.3 1396.4L1218.9 1290.2M1218.9 1290.2L1391.0 1201.4M1391.0 1201.4L1537.0 1125.9M1537.0 1125.9L1662.5 1061.1M1662.5 1061.1L1771.6 1004.8M956.8 1391.5L1167.7 1285.6M1167.7 1285.6L1344.1 1197.0M1344.1 1197.0L1493.8 1121.9M1493.8 1121.9L1622.5 1057.3M900.7 1386.6L1116.9 1281.0M1116.9 1281.0L1297.6 1192.8M1297.6 1192.8L1451.0 1117.8M1451.0 1117.8L1582.8 1053.5M845.2 1381.7L1066.5 1276.5M1066.5 1276.5L1251.5 1188.5M1251.5 1188.5L1408.5 1113.9M1408.5 1113.9L1543.4 1049.7M790.1 1376.9L1016.5 1272.0M1016.5 1272.0L1205.9 1184.3M1205.9 1184.3L1366.5 1109.9M735.4 1372.2L967.0 1267.6M967.0 1267.6L1160.6 1180.1M1160.6 1180.1L1324.8 1106.0M714.3 1352.8L944.5 1251.4M944.5 1251.4L1137.4 1166.4M703.9 1329.9L930.8 1232.3M930.8 1232.3L1121.5 1150.3M693.9 1307.8L917.6 1213.8M415.0 1370.5L675.1 1266.1M675.1 1266.1L892.5 1178.9M410.5 1346.8L666.2 1246.5M406.3 1324.1L657.6 1227.5M106.6 1388.7L398.2 1281.2" stroke="#252525" stroke-width="1.5" stroke-opacity="1.000" fill="none"/><path d="M802.3 374.9L789.7 371.4M789.7 371.4L777.5 368.1M900.3 387.2L884.6 383.2M884.6 383.2L869.5 379.4M869.5 379.4L855.1 375.8M855.1 375.8L841.3 372.3M841.3 372.3L828.0 368.9M828.0 368.9L815.3 365.7M994.4 396.9L975.6 392.4M975.6 392.4L957.7 388.2M957.7 388.2L940.5 384.2M940.5 384.2L924.1 380.3M924.1 380.3L908.4 376.6M908.4 376.6L893.4 373.1M893.4 373.1L879.0 369.7M879.0 369.7L865.2 366.4M865.2 366.4L851.9 363.3M1123.1 412.9L1099.4 407.6M1099.4 407.6L1076.9 402.7M1076.9 402.7L1055.5 398.0M1055.5 398.0L1035.1 393.5M1035.1 393.5L1015.7 389.2M1015.7 389.2L997.1 385.1M997.1 385.1L979.4 381.2M979.4 381.2L962.4 377.5M962.4 377.5L946.2 373.9M946.2 373.9L930.6 370.5M930.6 370.5L915.7 367.2M915.7 367.2L901.3 364.0M901.3 364.0L887.5 361.0M1245.8 425.6L1217.4 419.7M1217.4 419.7L1190.4 414.2M1190.4 414.2L1164.8 408.9M1164.8 408.9L1140.5 403.9M1140.5 403.9L1117.4 399.1M1117.4 399.1L1095.4 394.5M1095.4 394.5L1074.5 390.2M1074.5 390.2L1054.4 386.1M1054.4 386.1L1035.3 382.1M1035.3 382.1L1017.0 378.4M1017.0 378.4L999.5 374.7M999.5 374.7L982.7 371.3M982.7 371.3L966.7 368.0M966.7 368.0L951.2 364.8M951.2 364.8L936.4 361.7M936.4 361.7L922.1 358.8M1350.7 433.4L1318.3 427.1M1318.3 427.1L1287.6 421.1M1287.6 421.1L1258.6 415.5M1258.6 415.5L1231.1 410.1M1231.1 410.1L1205.0 405.1M1205.0 405.1L1180.1 400.2M1180.1 400.2L1156.5 395.6M1156.5 395.6L1133.9 391.2M1133.9 391.2L1112.4 387.1M1112.4 387.1L1091.9 383.1M1091.9 383.1L1072.3 379.2M1072.3 379.2L1053.5 375.6M1053.5 375.6L1035.5 372.1M1035.5 372.1L1018.2 368.7M1018.2 368.7L1001.6 365.5M1502.8 449.0L1463.6 441.8M1463.6 441.8L1426.7 435.0M1426.7 435.0L1391.9 428.6M1391.9 428.6L1358.9 422.6M1358.9 422.6L1327.8 416.8M1327.8 416.8L1298.3 411.4M1298.3 411.4L1270.3 406.3M1270.3 406.3L1243.6 401.4M1243.6 401.4L1218.3 396.7M1218.3 396.7L1194.2 392.3M1194.2 392.3L1171.1 388.0M1171.1 388.0L1149.2 384.0M1149.2 384.0L1128.1 380.1M1128.1 380.1L1108.0 376.4M1605.7 405.9L1634.2 402.5M1634.2 402.5L1661.8 399.3M1661.8 399.3L1688.5 396.1M1688.5 396.1L1714.3 393.1M1714.3 393.1L1739.4 390.1M1739.4 390.1L1763.6 387.2M1763.6 387.2L1787.2 384.5M1365.8 420.3L1400.5 416.5M1400.5 416.5L1434.0 412.7M1434.0 412.7L1466.3 409.2M1466.3 409.2L1497.6 405.7M1497.6 405.7L1527.9 402.3M1527.9 402.3L1557.1 399.1M1557.1 399.1L1585.4 395.9M1585.4 395.9L1612.8 392.9M1612.8 392.9L1639.4 389.9M1639.4 389.9L1665.2 387.1M1665.2 387.1L1690.1 384.3M1690.1 384.3L1714.4 381.6M1714.4 381.6L1737.9 379.0M1132.2 432.5L1173.2 428.2M1173.2 428.2L1212.6 424.1M1212.6 424.1L1250.6 420.1M1250.6 420.1L1287.3 416.2M1287.3 416.2L1322.7 412.5M1322.7 412.5L1356.9 408.9M1356.9 408.9L1389.9 405.5M1389.9 405.5L1421.9 402.1M1421.9 402.1L1452.8 398.9M1452.8 398.9L1482.7 395.8M1482.7 395.8L1511.7 392.7M1511.7 392.7L1539.8 389.8M1539.8 389.8L1567.0 386.9M1567.0 386.9L1593.4 384.2M1593.4 384.2L1619.1 381.5M1619.1 381.5L1643.9 378.9M1643.9 378.9L1668.1 376.4M1668.1 376.4L1691.6 373.9M578.8 461.3L636.2 455.9M636.2 455.9L691.4 450.7M691.4 450.7L744.3 445.7M744.3 445.7L795.1 440.9M795.1 440.9L843.9 436.3M843.9 436.3L890.9 431.9M890.9 431.9L936.2 427.7M936.2 427.7L979.8 423.6M979.8 423.6L1021.8 419.6M1021.8 419.6L1062.4 415.8M1062.4 415.8L1101.5 412.1M1101.5 412.1L1139.3 408.5M1139.3 408.5L1175.9 405.1M1175.9 405.1L1211.2 401.8M1211.2 401.8L1245.4 398.6M1245.4 398.6L1278.6 395.4M1278.6 395.4L1310.6 392.4M1310.6 392.4L1341.7 389.5M1341.7 389.5L1371.9 386.7M1371.9 386.7L1401.1 383.9M1401.1 383.9L1429.5 381.2M316.1 472.4L381.7 466.5M381.7 466.5L444.4 460.9M444.4 460.9L504.6 455.5M504.6 455.5L562.2 450.3M562.2 450.3L617.6 445.4M617.6 445.4L670.8 440.6M670.8 440.6L721.9 436.0M721.9 436.0L771.1 431.6M771.1 431.6L818.5 427.4M818.5 427.4L864.1 423.3M864.1 423.3L908.1 419.4M908.1 419.4L950.6 415.6M950.6 415.6L991.6 411.9M991.6 411.9L1031.2 408.3M1031.2 408.3L1069.5 404.9M1069.5 404.9L1106.5 401.6M1106.5 401.6L1142.4 398.4M1142.4 398.4L1177.0 395.3M1177.0 395.3L1210.7 392.3M1210.7 392.3L1243.2 389.4M30.5 484.5L105.3 478.1M105.3 478.1L176.8 471.9M176.8 471.9L245.3 466.1M245.3 466.1L310.7 460.5M310.7 460.5L373.5 455.1M373.5 455.1L433.7 450.0M433.7 450.0L491.5 445.1M491.5 445.1L547.0 440.3M547.0 440.3L600.4 435.8M600.4 435.8L651.8 431.4M651.8 431.4L701.3 427.1M701.3 427.1L749.0 423.1M749.0 423.1L795.0 419.1M795.0 419.1L839.3 415.3M839.3 415.3L882.2 411.7M882.2 411.7L923.5 408.1M923.5 408.1L963.5 404.7M963.5 404.7L1002.2 401.4M-114.1 484.0L-36.1 477.6M-36.1 477.6L38.3 471.5M38.3 471.5L109.5 465.7M109.5 465.7L177.8 460.1M177.8 460.1L243.1 454.8M243.1 454.8L305.8 449.7M305.8 449.7L366.0 444.7M366.0 444.7L423.9 440.0M423.9 440.0L479.5 435.5M479.5 435.5L533.1 431.1M533.1 431.1L584.6 426.9M584.6 426.9L634.3 422.8M634.3 422.8L682.3 418.9M682.3 418.9L728.5 415.1M728.5 415.1L773.1 411.5M773.1 411.5L816.3 407.9M-99.5 471.1L-25.5 465.3M-25.5 465.3L45.4 459.7M45.4 459.7L113.4 454.4M113.4 454.4L178.6 449.3M178.6 449.3L241.2 444.4M241.2 444.4L301.3 439.7M301.3 439.7L359.2 435.2M359.2 435.2L414.9 430.8M414.9 430.8L468.5 426.6M468.5 426.6L520.2 422.6M520.2 422.6L570.0 418.7M-86.2 459.4L-15.7 454.1M-15.7 454.1L51.9 449.0M51.9 449.0L116.9 444.1M116.9 444.1L179.3 439.4M179.3 439.4L239.4 434.9M239.4 434.9L297.2 430.5M297.2 430.5L352.9 426.4M-74.1 448.6L-6.8 443.8M-6.8 443.8L57.9 439.1" stroke="#2e2e2e" stroke-width="1.8" stroke-opacity="0.125" fill="none"/><path d="M863.1 407.8L846.6 402.8M846.6 402.8L830.8 398.1M830.8 398.1L815.7 393.7M815.7 393.7L801.4 389.4M801.4 389.4L787.7 385.3M787.7 385.3L774.6 381.4M774.6 381.4L762.1 377.7M762.1 377.7L750.1 374.1M750.1 374.1L738.6 370.6M987.8 425.8L966.4 419.9M966.4 419.9L946.1 414.3M946.1 414.3L926.8 409.0M926.8 409.0L908.5 404.0M908.5 404.0L891.1 399.3M891.1 399.3L874.6 394.7M874.6 394.7L858.8 390.4M858.8 390.4L843.7 386.3M843.7 386.3L829.3 382.3M829.3 382.3L815.5 378.5M815.5 378.5L802.3 374.9M1109.5 440.2L1083.1 433.5M1083.1 433.5L1058.2 427.2M1058.2 427.2L1034.7 421.3M1034.7 421.3L1012.5 415.6M1012.5 415.6L991.4 410.3M991.4 410.3L971.3 405.2M971.3 405.2L952.3 400.4M952.3 400.4L934.1 395.8M934.1 395.8L916.8 391.4M916.8 391.4L900.3 387.2M1248.7 456.8L1216.2 449.1M1216.2 449.1L1185.6 441.9M1185.6 441.9L1156.9 435.1M1156.9 435.1L1129.7 428.7M1129.7 428.7L1104.1 422.7M1104.1 422.7L1079.8 417.0M1079.8 417.0L1056.8 411.6M1056.8 411.6L1035.0 406.4M1035.0 406.4L1014.2 401.5M1014.2 401.5L994.4 396.9M1409.6 475.9L1369.3 467.0M1369.3 467.0L1331.6 458.7M1331.6 458.7L1296.2 451.0M1296.2 451.0L1263.0 443.6M1263.0 443.6L1231.8 436.8M1231.8 436.8L1202.3 430.3M1202.3 430.3L1174.4 424.1M1174.4 424.1L1148.1 418.3M1148.1 418.3L1123.1 412.9M1547.3 487.9L1500.4 478.2M1500.4 478.2L1456.8 469.2M1456.8 469.2L1415.9 460.7M1415.9 460.7L1377.6 452.8M1377.6 452.8L1341.7 445.4M1341.7 445.4L1307.8 438.4M1307.8 438.4L1276.0 431.8M1276.0 431.8L1245.8 425.6M1698.1 501.0L1643.6 490.4M1643.6 490.4L1593.0 480.5M1593.0 480.5L1545.8 471.3M1545.8 471.3L1501.7 462.8M1501.7 462.8L1460.4 454.7M1460.4 454.7L1421.6 447.2M1421.6 447.2L1385.1 440.1M1385.1 440.1L1350.7 433.4M1800.6 503.7L1741.9 492.9M1741.9 492.9L1687.3 482.9M1687.3 482.9L1636.5 473.6M1636.5 473.6L1589.0 464.8M1589.0 464.8L1544.5 456.7M1544.5 456.7L1502.8 449.0M1621.4 433.6L1653.5 429.3M1653.5 429.3L1684.4 425.1M1684.4 425.1L1714.2 421.0M1714.2 421.0L1742.9 417.1M1742.9 417.1L1770.7 413.4M1770.7 413.4L1797.4 409.8M1797.4 409.8L1823.3 406.3M1346.7 452.4L1386.9 447.4M1386.9 447.4L1425.5 442.5M1425.5 442.5L1462.6 437.8M1462.6 437.8L1498.3 433.3M1498.3 433.3L1532.6 429.0M1532.6 429.0L1565.7 424.8M1565.7 424.8L1597.6 420.8M1597.6 420.8L1628.3 416.9M1628.3 416.9L1658.0 413.2M1658.0 413.2L1686.6 409.6M1686.6 409.6L1714.3 406.1M1714.3 406.1L1741.0 402.7M1741.0 402.7L1766.9 399.4M1766.9 399.4L1792.0 396.3M1792.0 396.3L1816.2 393.2M1074.6 468.6L1123.2 462.9M1123.2 462.9L1169.7 457.4M1169.7 457.4L1214.3 452.1M1214.3 452.1L1257.1 447.0M1257.1 447.0L1298.2 442.2M1298.2 442.2L1337.7 437.5M1337.7 437.5L1375.7 433.0M1375.7 433.0L1412.3 428.7M1412.3 428.7L1447.5 424.6M1447.5 424.6L1481.4 420.6M1481.4 420.6L1514.1 416.7M1514.1 416.7L1545.7 413.0M1545.7 413.0L1576.2 409.4M1576.2 409.4L1605.7 405.9M765.5 486.9L824.4 480.4M824.4 480.4L880.7 474.1M880.7 474.1L934.5 468.2M934.5 468.2L986.0 462.5M986.0 462.5L1035.3 457.0M1035.3 457.0L1082.6 451.7M1082.6 451.7L1128.0 446.7M1128.0 446.7L1171.5 441.9M1171.5 441.9L1213.4 437.2M1213.4 437.2L1253.7 432.8M1253.7 432.8L1292.4 428.5M1292.4 428.5L1329.8 424.3M1329.8 424.3L1365.8 420.3M483.2 500.4L551.6 493.3M551.6 493.3L616.8 486.4M616.8 486.4L679.0 479.9M679.0 479.9L738.4 473.7M738.4 473.7L795.2 467.8M795.2 467.8L849.6 462.1M849.6 462.1L901.6 456.6M901.6 456.6L951.5 451.4M951.5 451.4L999.4 446.4M999.4 446.4L1045.5 441.6M1045.5 441.6L1089.7 436.9M1089.7 436.9L1132.2 432.5M-75.4 522.8L12.3 514.6M12.3 514.6L95.6 506.7M95.6 506.7L174.8 499.3M174.8 499.3L250.2 492.2M250.2 492.2L322.0 485.4M322.0 485.4L390.6 479.0M390.6 479.0L456.1 472.8M456.1 472.8L518.8 466.9M518.8 466.9L578.8 461.3M-60.9 506.2L21.9 498.7M21.9 498.7L100.7 491.7M100.7 491.7L175.9 484.9M175.9 484.9L247.6 478.5M247.6 478.5L316.1 472.4M-130.1 498.2L-47.9 491.2M-47.9 491.2L30.5 484.5" stroke="#2e2e2e" stroke-width="1.8" stroke-opacity="0.250" fill="none"/><path d="M654.3 394.9L643.6 390.6M643.6 390.6L633.5 386.4M633.5 386.4L623.8 382.5M623.8 382.5L614.5 378.7M767.1 415.8L752.3 410.5M752.3 410.5L738.3 405.4M738.3 405.4L725.0 400.5M725.0 400.5L712.4 396.0M712.4 396.0L700.3 391.6M700.3 391.6L688.8 387.4M688.8 387.4L677.8 383.4M677.8 383.4L667.2 379.6M667.2 379.6L657.2 375.9M1008.1 451.1L983.7 443.8M983.7 443.8L960.6 436.9M960.6 436.9L938.9 430.4M938.9 430.4L918.4 424.3M918.4 424.3L899.0 418.5M899.0 418.5L880.6 413.0M880.6 413.0L863.1 407.8M1179.4 478.3L1146.5 469.3M1146.5 469.3L1115.8 460.8M1115.8 460.8L1087.0 452.9M1087.0 452.9L1059.9 445.5M1059.9 445.5L1034.5 438.5M1034.5 438.5L1010.5 432.0M1010.5 432.0L987.8 425.8M1307.6 490.4L1268.8 480.6M1268.8 480.6L1232.6 471.4M1232.6 471.4L1198.8 462.9M1198.8 462.9L1167.2 454.8M1167.2 454.8L1137.4 447.3M1137.4 447.3L1109.5 440.2M1497.4 515.4L1448.1 503.8M1448.1 503.8L1402.4 493.0M1402.4 493.0L1359.9 483.0M1359.9 483.0L1320.3 473.6M1320.3 473.6L1283.3 464.9M1283.3 464.9L1248.7 456.8M1661.1 531.3L1602.8 518.4M1602.8 518.4L1548.9 506.6M1548.9 506.6L1499.0 495.6M1499.0 495.6L1452.7 485.4M1452.7 485.4L1409.6 475.9M1842.9 548.9L1773.9 534.7M1773.9 534.7L1710.4 521.5M1710.4 521.5L1651.8 509.4M1651.8 509.4L1597.6 498.3M1597.6 498.3L1547.3 487.9M1820.3 524.7L1756.8 512.4M1756.8 512.4L1698.1 501.0M1780.0 448.4L1811.0 443.5M1499.2 469.9L1538.9 464.1M1538.9 464.1L1576.9 458.5M1576.9 458.5L1613.4 453.2M1613.4 453.2L1648.3 448.1M1648.3 448.1L1681.9 443.1M1681.9 443.1L1714.1 438.4M1714.1 438.4L1745.1 433.9M1745.1 433.9L1775.0 429.5M1775.0 429.5L1803.7 425.3M1216.5 488.4L1265.5 481.8M1265.5 481.8L1312.2 475.5M1312.2 475.5L1356.9 469.4M1356.9 469.4L1399.6 463.7M1399.6 463.7L1440.5 458.1M1440.5 458.1L1479.7 452.8M1479.7 452.8L1517.3 447.7M1517.3 447.7L1553.4 442.8M1553.4 442.8L1588.1 438.1M1588.1 438.1L1621.4 433.6M892.3 509.8L952.9 502.1M952.9 502.1L1010.5 494.9M1010.5 494.9L1065.3 487.9M1065.3 487.9L1117.7 481.3M1117.7 481.3L1167.6 475.0M1167.6 475.0L1215.3 469.0M1215.3 469.0L1261.0 463.3M1261.0 463.3L1304.8 457.7M1304.8 457.7L1346.7 452.4M516.7 534.5L592.0 525.6M592.0 525.6L663.3 517.1M663.3 517.1L731.0 509.2M731.0 509.2L795.4 501.6M795.4 501.6L856.6 494.3M856.6 494.3L915.0 487.4M915.0 487.4L970.6 480.9M970.6 480.9L1023.8 474.6M1023.8 474.6L1074.6 468.6M170.6 552.9L259.7 543.1M259.7 543.1L343.9 533.7M343.9 533.7L423.5 524.9M423.5 524.9L499.0 516.5M499.0 516.5L570.7 508.5M570.7 508.5L638.9 501.0M638.9 501.0L703.7 493.8M703.7 493.8L765.5 486.9M-109.8 562.5L-10.4 552.1M-10.4 552.1L83.5 542.3M83.5 542.3L172.2 533.0M172.2 533.0L256.2 524.2M256.2 524.2L335.8 515.9M335.8 515.9L411.4 507.9M411.4 507.9L483.2 500.4" stroke="#2e2e2e" stroke-width="1.8" stroke-opacity="0.375" fill="none"/><path d="M532.4 388.5L524.8 384.5M627.5 408.0L616.8 403.0M616.8 403.0L606.6 398.3M606.6 398.3L596.9 393.8M596.9 393.8L587.7 389.5M587.7 389.5L578.8 385.5M578.8 385.5L570.4 381.6M745.9 432.1L730.6 425.9M730.6 425.9L716.2 420.0M716.2 420.0L702.5 414.5M702.5 414.5L689.5 409.2M689.5 409.2L677.2 404.2M677.2 404.2L665.4 399.4M665.4 399.4L654.3 394.9M875.0 455.0L854.3 447.4M854.3 447.4L834.8 440.4M834.8 440.4L816.4 433.7M816.4 433.7L799.0 427.4M799.0 427.4L782.6 421.4M782.6 421.4L767.1 415.8M1194.2 506.6L1157.5 495.6M1157.5 495.6L1123.4 485.5M1123.4 485.5L1091.6 476.0M1091.6 476.0L1061.9 467.1M1061.9 467.1L1034.2 458.8M1034.2 458.8L1008.1 451.1M1337.2 521.5L1293.2 509.5M1293.2 509.5L1252.4 498.3M1252.4 498.3L1214.6 487.9M1214.6 487.9L1179.4 478.3M1553.0 552.6L1495.6 538.1M1495.6 538.1L1442.9 524.7M1442.9 524.7L1394.3 512.4M1394.3 512.4L1349.3 501.0M1349.3 501.0L1307.6 490.4M1740.9 572.7L1671.9 556.5M1671.9 556.5L1608.8 541.6M1608.8 541.6L1550.8 528.0M1550.8 528.0L1497.4 515.4M1869.3 577.1L1793.6 560.4M1793.6 560.4L1724.5 545.2M1724.5 545.2L1661.1 531.3M1521.5 489.5L1563.6 482.8M1563.6 482.8L1603.8 476.4M1603.8 476.4L1642.2 470.3M1642.2 470.3L1678.9 464.5M1678.9 464.5L1714.1 458.9M1714.1 458.9L1747.7 453.5M1747.7 453.5L1780.0 448.4M1162.4 519.1L1217.9 511.0M1217.9 511.0L1270.7 503.3M1270.7 503.3L1320.8 495.9M1320.8 495.9L1368.6 489.0M1368.6 489.0L1414.2 482.3M1414.2 482.3L1457.6 475.9M1457.6 475.9L1499.2 469.9M795.6 545.5L865.8 536.0M865.8 536.0L932.1 527.0M932.1 527.0L995.0 518.5M995.0 518.5L1054.6 510.4M1054.6 510.4L1111.3 502.7M1111.3 502.7L1165.2 495.4M1165.2 495.4L1216.5 488.4M452.5 565.3L536.5 554.7M536.5 554.7L615.8 544.7M615.8 544.7L690.7 535.2M690.7 535.2L761.5 526.3M761.5 526.3L828.6 517.8M828.6 517.8L892.3 509.8M-39.4 600.1L68.1 587.4M68.1 587.4L168.9 575.5M168.9 575.5L263.7 564.3M263.7 564.3L352.9 553.8M352.9 553.8L437.1 543.9M437.1 543.9L516.7 534.5M-130.6 586.4L-24.0 574.5M-24.0 574.5L76.3 563.4M76.3 563.4L170.6 552.9" stroke="#2e2e2e" stroke-width="1.8" stroke-opacity="0.500" fill="none"/><path d="M484.3 391.7L477.8 387.6M586.1 417.3L576.0 411.9M576.0 411.9L566.4 406.7M566.4 406.7L557.2 401.9M557.2 401.9L548.6 397.2M548.6 397.2L540.3 392.8M540.3 392.8L532.4 388.5M705.3 443.9L690.4 437.0M690.4 437.0L676.4 430.6M676.4 430.6L663.2 424.4M663.2 424.4L650.7 418.7M650.7 418.7L638.8 413.2M638.8 413.2L627.5 408.0M837.5 469.4L816.8 460.9M816.8 460.9L797.4 453.1M797.4 453.1L779.2 445.6M779.2 445.6L762.0 438.7M762.0 438.7L745.9 432.1M973.0 490.5L945.9 480.7M945.9 480.7L920.7 471.5M920.7 471.5L897.1 463.0M897.1 463.0L875.0 455.0M1323.4 545.1L1276.7 531.2M1276.7 531.2L1233.8 518.4M1233.8 518.4L1194.2 506.6M1555.5 581.4L1493.5 564.4M1493.5 564.4L1436.9 548.8M1436.9 548.8L1385.0 534.6M1385.0 534.6L1337.2 521.5M1760.2 605.1L1684.5 585.9M1684.5 585.9L1615.7 568.5M1615.7 568.5L1553.0 552.6M1816.7 590.6L1740.9 572.7M1547.5 512.2L1592.3 504.5M1592.3 504.5L1634.8 497.0M1634.8 497.0L1675.4 490.0M1675.4 490.0L1714.0 483.3M1714.0 483.3L1750.8 476.9M1750.8 476.9L1786.0 470.7M1786.0 470.7L1819.7 464.9M1219.5 537.5L1276.7 528.4M1276.7 528.4L1330.9 519.8M1330.9 519.8L1382.2 511.6M1382.2 511.6L1431.0 503.9M1431.0 503.9L1477.4 496.5M1477.4 496.5L1521.5 489.5M834.2 567.1L907.6 556.4M907.6 556.4L976.7 546.3M976.7 546.3L1042.1 536.7M1042.1 536.7L1103.9 527.7M1103.9 527.7L1162.4 519.1M374.9 602.4L469.9 589.6M469.9 589.6L559.0 577.5M559.0 577.5L642.6 566.2M642.6 566.2L721.4 555.5M721.4 555.5L795.6 545.5M-57.2 629.6L58.7 614.9M58.7 614.9L166.9 601.3M166.9 601.3L268.2 588.5M268.2 588.5L363.2 576.5M363.2 576.5L452.5 565.3M-154.3 613.7L-39.4 600.1" stroke="#2e2e2e" stroke-width="1.8" stroke-opacity="0.625" fill="none"/><path d="M522.4 415.9L514.0 410.6M514.0 410.6L506.0 405.5M506.0 405.5L498.4 400.7M498.4 400.7L491.2 396.1M491.2 396.1L484.3 391.7M632.6 442.2L619.9 435.4M619.9 435.4L608.0 429.0M608.0 429.0L596.7 423.0M596.7 423.0L586.1 417.3M774.9 476.1L755.7 467.2M755.7 467.2L737.9 458.9M737.9 458.9L721.1 451.2M721.1 451.2L705.3 443.9M908.8 498.3L883.3 488.0M883.3 488.0L859.6 478.3M859.6 478.3L837.5 469.4M1104.0 538.0L1067.3 524.7M1067.3 524.7L1033.4 512.4M1033.4 512.4L1002.0 501.0M1002.0 501.0L973.0 490.5M1257.7 556.4L1212.4 541.5M1212.4 541.5L1170.9 527.9M1170.9 527.9L1132.6 515.4M1132.6 515.4L1097.1 503.8M1097.1 503.8L1064.3 493.0M1064.3 493.0L1033.8 483.0M1033.8 483.0L1005.4 473.7M1005.4 473.7L978.8 465.0M978.8 465.0L953.9 456.9M953.9 456.9L930.6 449.2M930.6 449.2L908.6 442.0M908.6 442.0L888.0 435.3M888.0 435.3L868.4 428.9M868.4 428.9L850.0 422.9M850.0 422.9L832.6 417.1M832.6 417.1L816.0 411.7M816.0 411.7L800.3 406.6M800.3 406.6L785.4 401.7M785.4 401.7L771.2 397.0M771.2 397.0L757.7 392.6M757.7 392.6L744.7 388.4M744.7 388.4L732.4 384.3M732.4 384.3L720.6 380.5M720.6 380.5L709.3 376.8M709.3 376.8L698.5 373.2M1491.0 595.2L1429.8 576.9M1429.8 576.9L1374.2 560.3M1374.2 560.3L1323.4 545.1M1699.3 620.8L1623.8 600.1M1623.8 600.1L1555.5 581.4M1844.1 626.4L1760.2 605.1M1671.0 521.1L1713.9 512.9M1713.9 512.9L1754.5 505.0M1754.5 505.0L1793.2 497.6M1793.2 497.6L1830.1 490.5M1342.7 547.9L1398.2 538.2M1398.2 538.2L1450.7 529.1M1450.7 529.1L1500.4 520.5M1500.4 520.5L1547.5 512.2M954.9 579.5L1027.1 568.1M1027.1 568.1L1095.0 557.3M1095.0 557.3L1159.1 547.1M1159.1 547.1L1219.5 537.5M489.9 617.5L584.6 603.6M584.6 603.6L673.2 590.7M673.2 590.7L756.2 578.5M756.2 578.5L834.2 567.1M47.9 646.7L164.7 630.9M164.7 630.9L273.4 616.2M273.4 616.2L374.9 602.4M-91.6 541.5L1.6 532.3M1.6 532.3L89.8 523.5M89.8 523.5L173.5 515.2M173.5 515.2L253.0 507.3M253.0 507.3L328.5 499.9M328.5 499.9L400.5 492.7M400.5 492.7L469.0 485.9M469.0 485.9L534.4 479.5M534.4 479.5L596.9 473.3M596.9 473.3L656.6 467.3M656.6 467.3L713.8 461.7M713.8 461.7L768.6 456.2M768.6 456.2L821.1 451.0M821.1 451.0L871.5 446.0M871.5 446.0L920.0 441.2M920.0 441.2L966.5 436.6M966.5 436.6L1011.3 432.2M1011.3 432.2L1054.4 427.9M1054.4 427.9L1095.9 423.8M1095.9 423.8L1136.0 419.8M1136.0 419.8L1174.6 416.0M1174.6 416.0L1211.9 412.3M1211.9 412.3L1247.9 408.7M1247.9 408.7L1282.7 405.3M1282.7 405.3L1316.4 402.0M1316.4 402.0L1348.9 398.7M1348.9 398.7L1380.4 395.6M1380.4 395.6L1411.0 392.6M1411.0 392.6L1440.6 389.7M1440.6 389.7L1469.3 386.8M1469.3 386.8L1497.1 384.0M1497.1 384.0L1524.1 381.4M1524.1 381.4L1550.3 378.8M1550.3 378.8L1575.8 376.3M1575.8 376.3L1600.5 373.8M1600.5 373.8L1624.6 371.4M1624.6 371.4L1648.0 369.1M-104.6 425.3L-43.2 421.3M-43.2 421.3L16.0 417.5M16.0 417.5L73.2 413.8M73.2 413.8L128.4 410.2M128.4 410.2L181.8 406.8M181.8 406.8L233.5 403.4M233.5 403.4L283.5 400.2M283.5 400.2L331.8 397.0M331.8 397.0L378.7 394.0M378.7 394.0L424.1 391.0M424.1 391.0L468.2 388.2M468.2 388.2L510.9 385.4M510.9 385.4L552.4 382.7M552.4 382.7L592.6 380.1M592.6 380.1L631.7 377.6M631.7 377.6L669.7 375.1M669.7 375.1L706.7 372.7M706.7 372.7L742.6 370.4M742.6 370.4L777.5 368.1M777.5 368.1L811.6 365.9M811.6 365.9L844.7 363.8M844.7 363.8L877.0 361.7M877.0 361.7L908.4 359.6M908.4 359.6L939.0 357.7M939.0 357.7L968.9 355.7M968.9 355.7L998.0 353.8M998.0 353.8L1026.5 352.0M1026.5 352.0L1054.2 350.2M1054.2 350.2L1081.3 348.4M1081.3 348.4L1107.7 346.7M1107.7 346.7L1133.5 345.0M1133.5 345.0L1158.7 343.4M1158.7 343.4L1183.4 341.8M1183.4 341.8L1207.5 340.2M1207.5 340.2L1231.0 338.7M1231.0 338.7L1254.1 337.2M1254.1 337.2L1276.6 335.8M1276.6 335.8L1298.7 334.3M1298.7 334.3L1320.2 332.9" stroke="#2e2e2e" stroke-width="1.8" stroke-opacity="0.750" fill="none"/><path d="M-54.0 443.0L-47.5 436.9M-47.5 436.9L-41.3 431.2M-41.3 431.2L-35.5 425.7M-35.5 425.7L-29.9 420.5M-55.9 533.2L-46.8 521.5M-46.8 521.5L-38.2 510.5M-38.2 510.5L-30.3 500.3M-30.3 500.3L-22.9 490.8M-22.9 490.8L-15.9 481.9M-15.9 481.9L-9.4 473.5M-9.4 473.5L-3.2 465.6M-3.2 465.6L2.6 458.2M2.6 458.2L8.0 451.2M8.0 451.2L13.2 444.6M13.2 444.6L18.1 438.3M18.1 438.3L22.7 432.4M22.7 432.4L27.1 426.7M27.1 426.7L31.3 421.4M31.3 421.4L35.3 416.3M-51.6 719.1L-37.4 690.1M-37.4 690.1L-24.8 664.1M-24.8 664.1L-13.4 640.8M-13.4 640.8L-3.2 619.8M-3.2 619.8L6.1 600.8M6.1 600.8L14.6 583.4M14.6 583.4L22.3 567.5M22.3 567.5L29.4 552.9M29.4 552.9L36.0 539.4M36.0 539.4L42.1 527.0M42.1 527.0L47.7 515.4M47.7 515.4L52.9 504.7M52.9 504.7L57.8 494.7M57.8 494.7L62.3 485.4M62.3 485.4L66.6 476.6M66.6 476.6L70.6 468.4M70.6 468.4L74.4 460.6M74.4 460.6L77.9 453.4M77.9 453.4L81.3 446.5M81.3 446.5L84.4 440.0M84.4 440.0L87.4 433.8M87.4 433.8L90.3 428.0M90.3 428.0L93.0 422.5M93.0 422.5L95.5 417.2M95.5 417.2L98.0 412.2M57.6 927.2L68.8 869.9M68.8 869.9L78.3 821.0M78.3 821.0L86.4 778.8M86.4 778.8L93.6 742.1M93.6 742.1L99.8 709.9M99.8 709.9L105.4 681.3M105.4 681.3L110.3 655.8M110.3 655.8L114.8 632.9M114.8 632.9L118.8 612.2M118.8 612.2L122.4 593.5M122.4 593.5L125.7 576.4M125.7 576.4L128.7 560.8M128.7 560.8L131.5 546.4M131.5 546.4L134.1 533.2M134.1 533.2L136.5 521.0M136.5 521.0L138.7 509.7M138.7 509.7L140.7 499.1M140.7 499.1L142.6 489.3M142.6 489.3L144.4 480.1M144.4 480.1L146.1 471.5M146.1 471.5L147.6 463.4M147.6 463.4L149.1 455.8M149.1 455.8L150.5 448.7M150.5 448.7L151.8 441.9M151.8 441.9L153.0 435.6M153.0 435.6L154.2 429.5M154.2 429.5L155.3 423.8M155.3 423.8L156.4 418.4M156.4 418.4L157.4 413.2M157.4 413.2L158.3 408.3M267.3 914.9L261.6 858.4M261.6 858.4L256.9 810.3M256.9 810.3L252.7 768.8M252.7 768.8L249.1 732.7M249.1 732.7L246.0 700.9M246.0 700.9L243.2 672.8M243.2 672.8L240.7 647.7M240.7 647.7L238.4 625.2M238.4 625.2L236.4 604.9M236.4 604.9L234.6 586.5M234.6 586.5L232.9 569.7M232.9 569.7L231.4 554.3M231.4 554.3L230.0 540.2M230.0 540.2L228.7 527.2M228.7 527.2L227.5 515.2M227.5 515.2L226.4 504.1M226.4 504.1L225.3 493.7M225.3 493.7L224.4 484.1M224.4 484.1L223.5 475.0M223.5 475.0L222.6 466.6M222.6 466.6L221.9 458.7M221.9 458.7L221.1 451.2M221.1 451.2L220.4 444.2M220.4 444.2L219.8 437.6M219.8 437.6L219.1 431.3M219.1 431.3L218.5 425.4M218.5 425.4L218.0 419.7M218.0 419.7L217.4 414.4M217.4 414.4L216.9 409.3M216.9 409.3L216.5 404.5M496.2 969.4L470.1 903.0M470.1 903.0L448.2 847.4M448.2 847.4L429.5 799.9M429.5 799.9L413.4 759.1M413.4 759.1L399.4 723.5M399.4 723.5L387.1 692.3M387.1 692.3L376.2 664.6M376.2 664.6L366.5 639.9M366.5 639.9L357.8 617.8M357.8 617.8L350.0 597.8M350.0 597.8L342.8 579.7M342.8 579.7L336.3 563.2M336.3 563.2L330.4 548.1M330.4 548.1L325.0 534.2M325.0 534.2L319.9 521.4M319.9 521.4L315.3 509.6M315.3 509.6L311.0 498.7M311.0 498.7L307.0 488.5M307.0 488.5L303.2 479.0M303.2 479.0L299.8 470.2M299.8 470.2L296.5 461.9M296.5 461.9L293.4 454.1M293.4 454.1L290.5 446.7M290.5 446.7L287.8 439.8M287.8 439.8L285.3 433.3M285.3 433.3L282.8 427.2M282.8 427.2L280.6 421.4M280.6 421.4L278.4 415.8M278.4 415.8L276.3 410.6M276.3 410.6L274.4 405.6M274.4 405.6L272.5 400.9M761.2 1029.4L707.6 951.5M707.6 951.5L663.4 887.2M663.4 887.2L626.2 833.1M626.2 833.1L594.5 787.0M594.5 787.0L567.1 747.2M567.1 747.2L543.3 712.6M543.3 712.6L522.4 682.1M522.4 682.1L503.8 655.2M503.8 655.2L487.3 631.1M487.3 631.1L472.4 609.5M472.4 609.5L459.0 590.0M459.0 590.0L446.8 572.3M446.8 572.3L435.7 556.2M435.7 556.2L425.6 541.4M425.6 541.4L416.3 527.9M416.3 527.9L407.7 515.4M407.7 515.4L399.8 503.8M399.8 503.8L392.4 493.1M392.4 493.1L385.5 483.2M385.5 483.2L379.2 473.9M379.2 473.9L373.2 465.2M373.2 465.2L367.6 457.1M367.6 457.1L362.4 449.5M362.4 449.5L357.4 442.3M357.4 442.3L352.8 435.5M352.8 435.5L348.4 429.2M348.4 429.2L344.3 423.1M344.3 423.1L340.3 417.4M340.3 417.4L336.6 412.0M336.6 412.0L333.1 406.9M333.1 406.9L329.7 402.0M329.7 402.0L326.5 397.4M1125.5 1154.2L1025.3 1052.3M1025.3 1052.3L944.7 970.2M944.7 970.2L878.4 902.7M878.4 902.7L822.9 846.2M822.9 846.2L775.7 798.2M775.7 798.2L735.2 756.9M735.2 756.9L699.9 721.0M699.9 721.0L669.0 689.6M669.0 689.6L641.7 661.7M641.7 661.7L617.4 637.0M617.4 637.0L595.5 614.7M595.5 614.7L575.9 594.7M575.9 594.7L558.1 576.6M558.1 576.6L541.9 560.1M541.9 560.1L527.0 545.0M527.0 545.0L513.4 531.2M513.4 531.2L500.9 518.4M500.9 518.4L489.4 506.6M489.4 506.6L478.6 495.7M478.6 495.7L468.7 485.6M468.7 485.6L459.4 476.1M459.4 476.1L450.7 467.3M450.7 467.3L442.6 459.1M442.6 459.1L435.0 451.3M435.0 451.3L427.9 444.0M427.9 444.0L421.1 437.2M421.1 437.2L414.8 430.7M414.8 430.7L408.8 424.6M408.8 424.6L403.1 418.8M403.1 418.8L397.7 413.3M397.7 413.3L392.6 408.1M392.6 408.1L387.7 403.2M387.7 403.2L383.1 398.5M383.1 398.5L378.7 394.0M1621.2 1324.1L1443.3 1184.9M1443.3 1184.9L1305.0 1076.6M1305.0 1076.6L1194.3 989.9M1194.3 989.9L1103.7 918.9M1103.7 918.9L1028.2 859.8M1028.2 859.8L964.3 809.8M964.3 809.8L909.5 766.9M909.5 766.9L862.1 729.7M862.1 729.7L820.5 697.2M820.5 697.2L783.9 668.5M783.9 668.5L751.3 643.0M751.3 643.0L722.1 620.2M722.1 620.2L695.9 599.6M695.9 599.6L672.1 581.0M672.1 581.0L650.5 564.1M650.5 564.1L630.8 548.7M630.8 548.7L612.8 534.5M612.8 534.5L596.1 521.5M596.1 521.5L580.8 509.5M580.8 509.5L566.6 498.4M566.6 498.4L553.4 488.0M553.4 488.0L541.1 478.4M541.1 478.4L529.6 469.4M529.6 469.4L518.9 461.0M518.9 461.0L508.8 453.2M508.8 453.2L499.4 445.8M499.4 445.8L490.5 438.8M490.5 438.8L482.1 432.2M482.1 432.2L474.2 426.0M474.2 426.0L466.7 420.2M466.7 420.2L459.6 414.6M459.6 414.6L452.9 409.4M452.9 409.4L446.5 404.3M446.5 404.3L440.4 399.6M440.4 399.6L434.6 395.0M434.6 395.0L429.1 390.7M2018.1 1367.2L1782.9 1217.6M1782.9 1217.6L1601.6 1102.3M1601.6 1102.3L1457.4 1010.6M1457.4 1010.6L1340.1 936.0M1340.1 936.0L1242.8 874.1M1242.8 874.1L1160.7 821.9M1160.7 821.9L1090.6 777.3M1090.6 777.3L1030.0 738.8M1030.0 738.8L977.1 705.1M977.1 705.1L930.5 675.5M930.5 675.5L889.2 649.2M889.2 649.2L852.2 625.7M852.2 625.7L819.1 604.6M819.1 604.6L789.1 585.5M789.1 585.5L761.8 568.2M761.8 568.2L737.0 552.4M737.0 552.4L714.3 538.0M714.3 538.0L693.4 524.7M693.4 524.7L674.1 512.4M674.1 512.4L656.2 501.1M656.2 501.1L639.7 490.5M639.7 490.5L624.3 480.7M624.3 480.7L609.9 471.6M609.9 471.6L596.5 463.1M596.5 463.1L583.9 455.1M583.9 455.1L572.1 447.6M572.1 447.6L561.0 440.5M561.0 440.5L550.5 433.8M550.5 433.8L540.6 427.5M540.6 427.5L531.3 421.6M531.3 421.6L522.4 415.9M1916.6 1129.6L1735.2 1032.5M1735.2 1032.5L1588.5 953.9M1588.5 953.9L1467.3 889.0M1467.3 889.0L1365.5 834.5M1365.5 834.5L1278.8 788.1M1278.8 788.1L1204.1 748.1M1204.1 748.1L1139.0 713.3M1139.0 713.3L1081.9 682.7M1081.9 682.7L1031.2 655.6M1031.2 655.6L986.1 631.4M986.1 631.4L945.6 609.8M945.6 609.8L909.0 590.2M909.0 590.2L875.9 572.4M875.9 572.4L845.7 556.3M845.7 556.3L818.1 541.5M818.1 541.5L792.7 527.9M792.7 527.9L769.3 515.4M769.3 515.4L747.7 503.8M747.7 503.8L727.7 493.1M727.7 493.1L709.0 483.1M709.0 483.1L691.7 473.8M691.7 473.8L675.4 465.1M675.4 465.1L660.2 457.0M660.2 457.0L646.0 449.4M646.0 449.4L632.6 442.2M1849.6 972.8L1702.3 904.7M1702.3 904.7L1579.1 847.7M1579.1 847.7L1474.5 799.4M1474.5 799.4L1384.6 757.9M1384.6 757.9L1306.6 721.8M1306.6 721.8L1238.2 690.2M1238.2 690.2L1177.7 662.2M1177.7 662.2L1123.8 637.3M1123.8 637.3L1075.6 615.0M1075.6 615.0L1032.1 595.0M1032.1 595.0L992.8 576.8M992.8 576.8L957.0 560.2M957.0 560.2L924.2 545.1M924.2 545.1L894.2 531.2M894.2 531.2L866.5 518.4M866.5 518.4L841.0 506.6M841.0 506.6L817.3 495.7M817.3 495.7L795.4 485.5M795.4 485.5L774.9 476.1M1802.1 861.5L1678.2 811.1M1678.2 811.1L1572.0 767.9M1572.0 767.9L1480.1 730.6M1480.1 730.6L1399.6 697.9M1399.6 697.9L1328.7 669.0M1328.7 669.0L1265.6 643.4M1265.6 643.4L1209.2 620.5M1209.2 620.5L1158.5 599.8M1158.5 599.8L1112.6 581.2M1112.6 581.2L1070.9 564.2M1070.9 564.2L1032.8 548.8M1032.8 548.8L997.9 534.6M997.9 534.6L965.8 521.5M965.8 521.5L936.2 509.5M936.2 509.5L908.8 498.3M1890.4 823.3L1766.7 778.4M1766.7 778.4L1659.8 739.6M1659.8 739.6L1566.5 705.8M1566.5 705.8L1484.5 676.0M1484.5 676.0L1411.7 649.6M1411.7 649.6L1346.7 626.1M1346.7 626.1L1288.3 604.9M1288.3 604.9L1235.5 585.7M1235.5 585.7L1187.6 568.4M1187.6 568.4L1144.0 552.5M1144.0 552.5L1104.0 538.0M1846.1 749.1L1739.2 714.0M1739.2 714.0L1645.3 683.3M1645.3 683.3L1562.1 656.1M1562.1 656.1L1488.0 631.8M1488.0 631.8L1421.6 610.0M1421.6 610.0L1361.6 590.4M1361.6 590.4L1307.2 572.6M1307.2 572.6L1257.7 556.4M1811.3 690.8L1717.2 662.7M1717.2 662.7L1633.5 637.7M1633.5 637.7L1558.5 615.3M1558.5 615.3L1491.0 595.2M1877.2 669.5L1783.3 643.8M1783.3 643.8L1699.3 620.8M904.8 1196.0L1091.3 1119.5M1091.3 1119.5L1251.1 1053.9M1251.1 1053.9L1389.6 997.1M1389.6 997.1L1510.7 947.3M1510.7 947.3L1617.5 903.5M1617.5 903.5L1712.5 864.5M1712.5 864.5L1797.4 829.6M1797.4 829.6L1873.9 798.3M-202.7 1382.3L115.2 1276.0M115.2 1276.0L380.6 1187.3M380.6 1187.3L605.4 1112.1M605.4 1112.1L798.4 1047.6M798.4 1047.6L965.7 991.6M965.7 991.6L1112.3 942.6M1112.3 942.6L1241.7 899.3M1241.7 899.3L1356.8 860.8M1356.8 860.8L1459.8 826.4M1459.8 826.4L1552.6 795.4M1552.6 795.4L1636.6 767.3M1636.6 767.3L1713.0 741.7M1713.0 741.7L1782.7 718.4M1782.7 718.4L1846.7 697.0M-133.4 1178.7L128.3 1104.8M128.3 1104.8L353.2 1041.3M353.2 1041.3L548.5 986.2M548.5 986.2L719.7 937.9M719.7 937.9L871.0 895.2M871.0 895.2L1005.7 857.2M1005.7 857.2L1126.4 823.2M1126.4 823.2L1235.1 792.5M1235.1 792.5L1333.6 764.7M1333.6 764.7L1423.2 739.4M1423.2 739.4L1505.1 716.3M1505.1 716.3L1580.2 695.1M1580.2 695.1L1649.4 675.6M1649.4 675.6L1713.3 657.5M1713.3 657.5L1772.5 640.8M1772.5 640.8L1827.5 625.3M-84.5 1035.2L137.8 980.9M137.8 980.9L332.9 933.3M332.9 933.3L505.5 891.2M505.5 891.2L659.3 853.6M659.3 853.6L797.1 820.0M797.1 820.0L921.4 789.6M921.4 789.6L1034.0 762.1M1034.0 762.1L1136.6 737.1M1136.6 737.1L1230.3 714.2M1230.3 714.2L1316.4 693.2M1316.4 693.2L1395.6 673.8M1395.6 673.8L1468.9 656.0M1468.9 656.0L1536.8 639.4M1536.8 639.4L1599.8 624.0M1599.8 624.0L1658.6 609.6M1658.6 609.6L1713.5 596.2M1713.5 596.2L1764.9 583.7M1764.9 583.7L1813.2 571.9M-266.5 975.7L-48.2 928.8M-48.2 928.8L145.0 887.2M145.0 887.2L317.3 850.1M317.3 850.1L471.9 816.8M471.9 816.8L611.4 786.8M611.4 786.8L737.8 759.6M737.8 759.6L853.0 734.8M853.0 734.8L958.4 712.1M958.4 712.1L1055.1 691.3M1055.1 691.3L1144.3 672.1M1144.3 672.1L1226.7 654.4M1226.7 654.4L1303.1 637.9M1303.1 637.9L1374.1 622.7M1374.1 622.7L1440.3 608.4M1440.3 608.4L1502.2 595.1M1502.2 595.1L1560.1 582.6M1560.1 582.6L1614.5 570.9M1614.5 570.9L1665.6 559.9M1665.6 559.9L1713.7 549.6M1713.7 549.6L1759.1 539.8M1759.1 539.8L1802.1 530.5M-210.6 883.2L-20.2 846.6M-20.2 846.6L150.7 813.7M150.7 813.7L304.9 784.0M304.9 784.0L444.9 757.1M444.9 757.1L572.4 732.5M572.4 732.5L689.2 710.1M689.2 710.1L796.4 689.4M796.4 689.4L895.3 670.4M895.3 670.4L986.7 652.8M986.7 652.8L1071.4 636.5M1071.4 636.5L1150.3 621.3M1150.3 621.3L1223.8 607.2M1223.8 607.2L1292.5 594.0M1292.5 594.0L1356.8 581.6M1356.8 581.6L1417.2 570.0M1417.2 570.0L1474.0 559.0M1474.0 559.0L1527.6 548.7M1527.6 548.7L1578.1 539.0M1578.1 539.0L1625.8 529.8M1625.8 529.8L1671.0 521.1M-166.7 810.7L2.0 781.3M2.0 781.3L155.2 754.6M155.2 754.6L294.8 730.3M294.8 730.3L422.7 708.1M422.7 708.1L540.2 687.6M540.2 687.6L648.6 668.7M648.6 668.7L748.8 651.3M748.8 651.3L841.8 635.1M841.8 635.1L928.3 620.0M928.3 620.0L1009.0 606.0M1009.0 606.0L1084.4 592.9M1084.4 592.9L1155.1 580.6M1155.1 580.6L1221.5 569.0M1221.5 569.0L1283.9 558.1M1283.9 558.1L1342.7 547.9M-131.3 752.2L20.1 728.1M20.1 728.1L158.9 706.0M158.9 706.0L286.5 685.8M286.5 685.8L404.2 667.1M404.2 667.1L513.1 649.8M513.1 649.8L614.2 633.7M614.2 633.7L708.2 618.7M708.2 618.7L796.0 604.8M796.0 604.8L878.0 591.8M878.0 591.8L954.9 579.5M-102.3 704.1L35.2 684.0M35.2 684.0L162.0 665.4M162.0 665.4L279.4 648.2M279.4 648.2L388.4 632.3M388.4 632.3L489.9 617.5M-77.9 663.8L47.9 646.7" stroke="#2e2e2e" stroke-width="1.8" stroke-opacity="0.875" fill="none"/><path d="M-16.5 1309.3L8.6 1180.2M8.6 1180.2L28.4 1078.1M28.4 1078.1L44.4 995.5M44.4 995.5L57.6 927.2M321.4 1458.8L304.8 1291.9M304.8 1291.9L292.1 1164.4M292.1 1164.4L282.1 1063.7M282.1 1063.7L274.0 982.2M274.0 982.2L267.3 914.9M681.3 1440.0L616.4 1275.0M616.4 1275.0L566.9 1149.1M566.9 1149.1L527.8 1049.7M527.8 1049.7L496.2 969.4M1020.1 1405.9L910.9 1247.1M910.9 1247.1L827.3 1125.5M827.3 1125.5L761.2 1029.4M1421.5 1455.6L1253.1 1284.2M1253.1 1284.2L1125.5 1154.2M1070.3 1401.4L1270.7 1294.9M1270.7 1294.9L1438.3 1205.7M1438.3 1205.7L1580.6 1130.0M1580.6 1130.0L1703.0 1065.0M1703.0 1065.0L1809.3 1008.4M419.6 1395.2L684.3 1286.6M684.3 1286.6L904.8 1196.0" stroke="#2e2e2e" stroke-width="1.8" stroke-opacity="1.000" fill="none"/></g>
<line x1="203" y1="268" x2="302" y2="1240" stroke="url(#yax)" stroke-width="2.2"/>
<polygon points="1618,501 1729,523 1729,645 4,1123 4,783" fill="url(#fl)"/>
<polygon points="178.9,477.2 199.4,475.2 272.7,860.8 254.7,862.8" fill="#58ffb9" stroke="#58ffb9" stroke-width="4.5" stroke-linejoin="round"/><rect x="181.4" y="479.3" width="17.5" height="16.5" fill="#777777"/><rect x="185.0" y="497.7" width="17.5" height="16.3" fill="#777777"/><rect x="188.5" y="516.0" width="17.5" height="16.1" fill="#777777"/><rect x="192.0" y="534.1" width="17.5" height="16.0" fill="#777777"/><rect x="195.5" y="551.9" width="17.4" height="15.8" fill="#777777"/><rect x="198.9" y="569.6" width="17.4" height="15.6" fill="#777777"/><rect x="202.3" y="587.1" width="17.4" height="15.5" fill="#777777"/><rect x="205.6" y="604.5" width="17.4" height="15.3" fill="#777777"/><rect x="208.9" y="621.6" width="17.3" height="15.1" fill="#777777"/><rect x="212.2" y="638.6" width="17.3" height="15.0" fill="#777777"/><rect x="215.5" y="655.4" width="17.3" height="14.8" fill="#777777"/><rect x="218.7" y="672.0" width="17.3" height="14.7" fill="#777777"/><rect x="221.9" y="688.5" width="17.2" height="14.5" fill="#777777"/><rect x="225.0" y="704.8" width="17.2" height="14.4" fill="#777777"/><rect x="228.1" y="720.9" width="17.2" height="14.3" fill="#777777"/><rect x="231.2" y="736.9" width="17.2" height="14.1" fill="#777777"/><rect x="234.3" y="752.7" width="17.1" height="14.0" fill="#777777"/><rect x="237.3" y="768.4" width="17.1" height="13.8" fill="#777777"/><rect x="240.3" y="783.9" width="17.1" height="13.7" fill="#777777"/><rect x="243.3" y="799.2" width="17.1" height="13.6" fill="#777777"/><rect x="246.2" y="814.4" width="17.1" height="13.4" fill="#777777"/><rect x="249.1" y="829.5" width="17.0" height="13.3" fill="#777777"/><rect x="252.0" y="844.3" width="17.0" height="13.3" fill="#777777"/><g fill="#58ffb9" stroke="#000" stroke-width="1.7"><circle cx="191.4" cy="488.0" r="6.08"/><circle cx="195.0" cy="506.4" r="6.03"/><circle cx="198.5" cy="524.6" r="5.98"/><circle cx="201.9" cy="542.5" r="5.93"/><circle cx="205.4" cy="560.3" r="5.88"/><circle cx="208.8" cy="577.9" r="5.82"/><circle cx="212.2" cy="595.4" r="5.78"/><circle cx="215.5" cy="612.6" r="5.73"/><circle cx="218.8" cy="629.7" r="5.68"/><circle cx="222.1" cy="646.6" r="5.63"/><circle cx="225.3" cy="663.3" r="5.58"/><circle cx="228.5" cy="679.9" r="5.54"/><circle cx="231.7" cy="696.3" r="5.49"/><circle cx="234.8" cy="712.5" r="5.45"/><circle cx="237.9" cy="728.6" r="5.40"/><circle cx="241.0" cy="744.5" r="5.36"/><circle cx="244.0" cy="760.2" r="5.32"/><circle cx="247.1" cy="775.8" r="5.28"/><circle cx="250.0" cy="791.2" r="5.24"/><circle cx="253.0" cy="806.5" r="5.19"/><circle cx="255.9" cy="821.7" r="5.15"/><circle cx="258.8" cy="836.6" r="5.11"/><circle cx="261.7" cy="851.5" r="5.11"/></g><rect x="178.4" y="475.0" width="26" height="25" rx="3" fill="#7b5cd6"/><rect x="182.4" y="479.0" width="17" height="17" fill="#777777"/><circle cx="191.4" cy="488.0" r="5.9" fill="#8a6af0" stroke="#000" stroke-width="1.5"/><polygon points="220.5,473.6 240.8,471.6 309.5,854.2 291.7,856.2" fill="#58ffb9" stroke="#58ffb9" stroke-width="4.5" stroke-linejoin="round"/><rect x="222.9" y="475.7" width="17.4" height="16.3" fill="#777777"/><rect x="226.3" y="494.1" width="17.3" height="16.1" fill="#777777"/><rect x="229.6" y="512.2" width="17.3" height="16.0" fill="#777777"/><rect x="232.9" y="530.1" width="17.3" height="15.8" fill="#777777"/><rect x="236.1" y="547.8" width="17.2" height="15.6" fill="#777777"/><rect x="239.3" y="565.4" width="17.2" height="15.5" fill="#777777"/><rect x="242.5" y="582.7" width="17.2" height="15.3" fill="#777777"/><rect x="245.6" y="599.9" width="17.2" height="15.1" fill="#777777"/><rect x="248.7" y="616.9" width="17.1" height="15.0" fill="#777777"/><rect x="251.8" y="633.8" width="17.1" height="14.8" fill="#777777"/><rect x="254.8" y="650.4" width="17.1" height="14.7" fill="#777777"/><rect x="257.9" y="666.9" width="17.1" height="14.5" fill="#777777"/><rect x="260.8" y="683.2" width="17.0" height="14.4" fill="#777777"/><rect x="263.8" y="699.4" width="17.0" height="14.3" fill="#777777"/><rect x="266.7" y="715.4" width="17.0" height="14.1" fill="#777777"/><rect x="269.6" y="731.3" width="17.0" height="14.0" fill="#777777"/><rect x="272.5" y="746.9" width="17.0" height="13.8" fill="#777777"/><rect x="275.3" y="762.5" width="16.9" height="13.7" fill="#777777"/><rect x="278.1" y="777.8" width="16.9" height="13.6" fill="#777777"/><rect x="280.9" y="793.1" width="16.9" height="13.4" fill="#777777"/><rect x="283.7" y="808.2" width="16.9" height="13.3" fill="#777777"/><rect x="286.4" y="823.1" width="16.8" height="13.2" fill="#777777"/><rect x="289.1" y="837.8" width="16.8" height="13.2" fill="#777777"/><g fill="#58ffb9" stroke="#000" stroke-width="1.7"><circle cx="232.8" cy="484.4" r="6.03"/><circle cx="236.1" cy="502.6" r="5.98"/><circle cx="239.4" cy="520.7" r="5.93"/><circle cx="242.7" cy="538.5" r="5.88"/><circle cx="245.9" cy="556.1" r="5.83"/><circle cx="249.1" cy="573.6" r="5.78"/><circle cx="252.3" cy="590.9" r="5.73"/><circle cx="255.4" cy="608.0" r="5.68"/><circle cx="258.5" cy="624.9" r="5.63"/><circle cx="261.6" cy="641.7" r="5.58"/><circle cx="264.6" cy="658.3" r="5.54"/><circle cx="267.6" cy="674.7" r="5.49"/><circle cx="270.6" cy="690.9" r="5.45"/><circle cx="273.5" cy="707.0" r="5.40"/><circle cx="276.4" cy="723.0" r="5.36"/><circle cx="279.3" cy="738.7" r="5.32"/><circle cx="282.1" cy="754.4" r="5.28"/><circle cx="285.0" cy="769.8" r="5.23"/><circle cx="287.8" cy="785.1" r="5.19"/><circle cx="290.5" cy="800.3" r="5.15"/><circle cx="293.3" cy="815.3" r="5.11"/><circle cx="296.0" cy="830.2" r="5.07"/><circle cx="298.7" cy="844.9" r="5.07"/></g><polygon points="261.9,469.2 281.9,467.2 344.3,846.1 326.7,848.1" fill="#58ffb9" stroke="#58ffb9" stroke-width="4.5" stroke-linejoin="round"/><rect x="264.1" y="471.5" width="17.2" height="16.1" fill="#777777"/><rect x="267.2" y="489.6" width="17.1" height="15.9" fill="#777777"/><rect x="270.2" y="507.5" width="17.1" height="15.7" fill="#777777"/><rect x="273.2" y="525.2" width="17.1" height="15.6" fill="#777777"/><rect x="276.1" y="542.8" width="17.0" height="15.4" fill="#777777"/><rect x="279.0" y="560.1" width="17.0" height="15.3" fill="#777777"/><rect x="281.9" y="577.3" width="17.0" height="15.1" fill="#777777"/><rect x="284.8" y="594.3" width="17.0" height="14.9" fill="#777777"/><rect x="287.6" y="611.2" width="16.9" height="14.8" fill="#777777"/><rect x="290.4" y="627.8" width="16.9" height="14.6" fill="#777777"/><rect x="293.1" y="644.3" width="16.9" height="14.5" fill="#777777"/><rect x="295.9" y="660.6" width="16.9" height="14.4" fill="#777777"/><rect x="298.6" y="676.8" width="16.9" height="14.2" fill="#777777"/><rect x="301.3" y="692.8" width="16.8" height="14.1" fill="#777777"/><rect x="303.9" y="708.6" width="16.8" height="13.9" fill="#777777"/><rect x="306.6" y="724.3" width="16.8" height="13.8" fill="#777777"/><rect x="309.2" y="739.8" width="16.8" height="13.7" fill="#777777"/><rect x="311.8" y="755.1" width="16.7" height="13.5" fill="#777777"/><rect x="314.3" y="770.4" width="16.7" height="13.4" fill="#777777"/><rect x="316.8" y="785.4" width="16.7" height="13.3" fill="#777777"/><rect x="319.3" y="800.3" width="16.7" height="13.1" fill="#777777"/><rect x="321.8" y="815.1" width="16.7" height="13.0" fill="#777777"/><rect x="324.3" y="829.7" width="16.7" height="13.0" fill="#777777"/><g fill="#58ffb9" stroke="#000" stroke-width="1.7"><circle cx="273.9" cy="480.0" r="5.97"/><circle cx="276.9" cy="498.0" r="5.92"/><circle cx="279.9" cy="515.9" r="5.86"/><circle cx="282.9" cy="533.5" r="5.81"/><circle cx="285.8" cy="551.0" r="5.76"/><circle cx="288.7" cy="568.3" r="5.71"/><circle cx="291.6" cy="585.4" r="5.67"/><circle cx="294.4" cy="602.3" r="5.62"/><circle cx="297.3" cy="619.0" r="5.57"/><circle cx="300.0" cy="635.6" r="5.52"/><circle cx="302.8" cy="652.0" r="5.48"/><circle cx="305.5" cy="668.3" r="5.43"/><circle cx="308.2" cy="684.4" r="5.39"/><circle cx="310.9" cy="700.3" r="5.35"/><circle cx="313.5" cy="716.1" r="5.30"/><circle cx="316.2" cy="731.7" r="5.26"/><circle cx="318.8" cy="747.1" r="5.22"/><circle cx="321.3" cy="762.4" r="5.18"/><circle cx="323.9" cy="777.6" r="5.14"/><circle cx="326.4" cy="792.6" r="5.10"/><circle cx="328.9" cy="807.4" r="5.06"/><circle cx="331.4" cy="822.1" r="5.02"/><circle cx="333.8" cy="836.7" r="5.02"/></g><polygon points="302.9,466.1 322.7,464.1 379.2,838.7 361.8,840.7" fill="#58ffb9" stroke="#58ffb9" stroke-width="4.5" stroke-linejoin="round"/><rect x="304.9" y="468.6" width="16.9" height="15.9" fill="#777777"/><rect x="307.7" y="486.5" width="16.9" height="15.7" fill="#777777"/><rect x="310.4" y="504.2" width="16.9" height="15.5" fill="#777777"/><rect x="313.1" y="521.7" width="16.9" height="15.4" fill="#777777"/><rect x="315.8" y="539.0" width="16.8" height="15.2" fill="#777777"/><rect x="318.4" y="556.2" width="16.8" height="15.0" fill="#777777"/><rect x="321.0" y="573.1" width="16.8" height="14.9" fill="#777777"/><rect x="323.6" y="589.9" width="16.8" height="14.7" fill="#777777"/><rect x="326.2" y="606.5" width="16.7" height="14.6" fill="#777777"/><rect x="328.7" y="623.0" width="16.7" height="14.4" fill="#777777"/><rect x="331.2" y="639.3" width="16.7" height="14.3" fill="#777777"/><rect x="333.7" y="655.4" width="16.7" height="14.1" fill="#777777"/><rect x="336.2" y="671.3" width="16.7" height="14.0" fill="#777777"/><rect x="338.6" y="687.1" width="16.6" height="13.9" fill="#777777"/><rect x="341.0" y="702.8" width="16.6" height="13.7" fill="#777777"/><rect x="343.4" y="718.3" width="16.6" height="13.6" fill="#777777"/><rect x="345.8" y="733.6" width="16.6" height="13.5" fill="#777777"/><rect x="348.1" y="748.8" width="16.5" height="13.3" fill="#777777"/><rect x="350.4" y="763.8" width="16.5" height="13.2" fill="#777777"/><rect x="352.7" y="778.7" width="16.5" height="13.1" fill="#777777"/><rect x="355.0" y="793.4" width="16.5" height="12.9" fill="#777777"/><rect x="357.2" y="808.0" width="16.5" height="12.8" fill="#777777"/><rect x="359.5" y="822.4" width="16.5" height="12.8" fill="#777777"/><g fill="#58ffb9" stroke="#000" stroke-width="1.7"><circle cx="314.6" cy="477.0" r="5.90"/><circle cx="317.3" cy="494.8" r="5.85"/><circle cx="320.1" cy="512.4" r="5.79"/><circle cx="322.7" cy="529.9" r="5.74"/><circle cx="325.4" cy="547.1" r="5.69"/><circle cx="328.0" cy="564.2" r="5.65"/><circle cx="330.6" cy="581.1" r="5.60"/><circle cx="333.2" cy="597.8" r="5.55"/><circle cx="335.8" cy="614.3" r="5.51"/><circle cx="338.3" cy="630.7" r="5.46"/><circle cx="340.8" cy="646.9" r="5.41"/><circle cx="343.3" cy="663.0" r="5.37"/><circle cx="345.7" cy="678.8" r="5.33"/><circle cx="348.1" cy="694.6" r="5.28"/><circle cx="350.5" cy="710.1" r="5.24"/><circle cx="352.9" cy="725.6" r="5.20"/><circle cx="355.3" cy="740.8" r="5.16"/><circle cx="357.6" cy="755.9" r="5.12"/><circle cx="359.9" cy="770.9" r="5.08"/><circle cx="362.2" cy="785.7" r="5.04"/><circle cx="364.4" cy="800.4" r="5.00"/><circle cx="366.7" cy="814.9" r="4.96"/><circle cx="368.9" cy="829.3" r="4.96"/></g><polygon points="340.8,462.1 360.4,460.1 412.3,831.4 395.1,833.4" fill="#58ffb9" stroke="#58ffb9" stroke-width="4.5" stroke-linejoin="round"/><rect x="342.7" y="464.7" width="16.8" height="15.7" fill="#777777"/><rect x="345.3" y="482.4" width="16.7" height="15.5" fill="#777777"/><rect x="347.8" y="499.9" width="16.7" height="15.4" fill="#777777"/><rect x="350.2" y="517.3" width="16.7" height="15.2" fill="#777777"/><rect x="352.7" y="534.4" width="16.7" height="15.0" fill="#777777"/><rect x="355.1" y="551.4" width="16.6" height="14.9" fill="#777777"/><rect x="357.5" y="568.2" width="16.6" height="14.7" fill="#777777"/><rect x="359.9" y="584.9" width="16.6" height="14.6" fill="#777777"/><rect x="362.3" y="601.3" width="16.6" height="14.4" fill="#777777"/><rect x="364.6" y="617.6" width="16.5" height="14.3" fill="#777777"/><rect x="366.9" y="633.8" width="16.5" height="14.1" fill="#777777"/><rect x="369.2" y="649.7" width="16.5" height="14.0" fill="#777777"/><rect x="371.5" y="665.5" width="16.5" height="13.8" fill="#777777"/><rect x="373.7" y="681.2" width="16.4" height="13.7" fill="#777777"/><rect x="375.9" y="696.7" width="16.4" height="13.6" fill="#777777"/><rect x="378.1" y="712.0" width="16.4" height="13.4" fill="#777777"/><rect x="380.3" y="727.2" width="16.4" height="13.3" fill="#777777"/><rect x="382.4" y="742.2" width="16.4" height="13.2" fill="#777777"/><rect x="384.6" y="757.1" width="16.3" height="13.0" fill="#777777"/><rect x="386.7" y="771.8" width="16.3" height="12.9" fill="#777777"/><rect x="388.8" y="786.4" width="16.3" height="12.8" fill="#777777"/><rect x="390.8" y="800.9" width="16.3" height="12.7" fill="#777777"/><rect x="392.9" y="815.2" width="16.3" height="12.7" fill="#777777"/><g fill="#58ffb9" stroke="#000" stroke-width="1.7"><circle cx="352.3" cy="473.0" r="5.84"/><circle cx="354.8" cy="490.6" r="5.79"/><circle cx="357.3" cy="508.1" r="5.74"/><circle cx="359.8" cy="525.4" r="5.69"/><circle cx="362.2" cy="542.5" r="5.64"/><circle cx="364.6" cy="559.4" r="5.60"/><circle cx="367.0" cy="576.1" r="5.55"/><circle cx="369.4" cy="592.7" r="5.50"/><circle cx="371.8" cy="609.0" r="5.46"/><circle cx="374.1" cy="625.3" r="5.41"/><circle cx="376.4" cy="641.3" r="5.37"/><circle cx="378.6" cy="657.2" r="5.32"/><circle cx="380.9" cy="673.0" r="5.28"/><circle cx="383.1" cy="688.5" r="5.24"/><circle cx="385.3" cy="704.0" r="5.20"/><circle cx="387.5" cy="719.2" r="5.15"/><circle cx="389.7" cy="734.3" r="5.11"/><circle cx="391.8" cy="749.3" r="5.07"/><circle cx="393.9" cy="764.1" r="5.03"/><circle cx="396.0" cy="778.8" r="5.00"/><circle cx="398.1" cy="793.3" r="4.96"/><circle cx="400.2" cy="807.7" r="4.92"/><circle cx="402.2" cy="822.0" r="4.92"/></g><polygon points="378.8,458.7 398.1,456.7 445.3,823.9 428.4,825.9" fill="#58ffb9" stroke="#58ffb9" stroke-width="4.5" stroke-linejoin="round"/><rect x="380.5" y="461.4" width="16.6" height="15.5" fill="#777777"/><rect x="382.8" y="478.9" width="16.5" height="15.3" fill="#777777"/><rect x="385.1" y="496.2" width="16.5" height="15.1" fill="#777777"/><rect x="387.4" y="513.4" width="16.5" height="15.0" fill="#777777"/><rect x="389.6" y="530.3" width="16.5" height="14.8" fill="#777777"/><rect x="391.8" y="547.1" width="16.4" height="14.7" fill="#777777"/><rect x="394.0" y="563.7" width="16.4" height="14.5" fill="#777777"/><rect x="396.2" y="580.2" width="16.4" height="14.4" fill="#777777"/><rect x="398.4" y="596.4" width="16.4" height="14.2" fill="#777777"/><rect x="400.5" y="612.5" width="16.3" height="14.1" fill="#777777"/><rect x="402.6" y="628.5" width="16.3" height="13.9" fill="#777777"/><rect x="404.7" y="644.3" width="16.3" height="13.8" fill="#777777"/><rect x="406.7" y="659.9" width="16.3" height="13.7" fill="#777777"/><rect x="408.8" y="675.3" width="16.3" height="13.5" fill="#777777"/><rect x="410.8" y="690.6" width="16.2" height="13.4" fill="#777777"/><rect x="412.8" y="705.8" width="16.2" height="13.3" fill="#777777"/><rect x="414.8" y="720.8" width="16.2" height="13.1" fill="#777777"/><rect x="416.7" y="735.7" width="16.2" height="13.0" fill="#777777"/><rect x="418.7" y="750.4" width="16.2" height="12.9" fill="#777777"/><rect x="420.6" y="764.9" width="16.1" height="12.8" fill="#777777"/><rect x="422.5" y="779.4" width="16.1" height="12.6" fill="#777777"/><rect x="424.4" y="793.7" width="16.1" height="12.5" fill="#777777"/><rect x="426.3" y="807.7" width="16.1" height="12.5" fill="#777777"/><g fill="#58ffb9" stroke="#000" stroke-width="1.7"><circle cx="390.0" cy="469.6" r="5.78"/><circle cx="392.3" cy="487.0" r="5.73"/><circle cx="394.6" cy="504.3" r="5.68"/><circle cx="396.8" cy="521.3" r="5.63"/><circle cx="399.1" cy="538.2" r="5.58"/><circle cx="401.3" cy="554.9" r="5.54"/><circle cx="403.4" cy="571.5" r="5.49"/><circle cx="405.6" cy="587.9" r="5.44"/><circle cx="407.7" cy="604.0" r="5.40"/><circle cx="409.9" cy="620.1" r="5.35"/><circle cx="411.9" cy="635.9" r="5.31"/><circle cx="414.0" cy="651.7" r="5.27"/><circle cx="416.1" cy="667.2" r="5.22"/><circle cx="418.1" cy="682.6" r="5.18"/><circle cx="420.1" cy="697.8" r="5.14"/><circle cx="422.1" cy="712.9" r="5.10"/><circle cx="424.1" cy="727.9" r="5.06"/><circle cx="426.0" cy="742.7" r="5.02"/><circle cx="428.0" cy="757.3" r="4.98"/><circle cx="429.9" cy="771.8" r="4.94"/><circle cx="431.8" cy="786.2" r="4.91"/><circle cx="433.6" cy="800.4" r="4.87"/><circle cx="435.5" cy="814.5" r="4.87"/></g><polygon points="416.1,455.1 435.1,453.1 476.6,817.4 459.9,819.4" fill="#58ffb9" stroke="#58ffb9" stroke-width="4.5" stroke-linejoin="round"/><rect x="417.6" y="457.8" width="16.4" height="15.3" fill="#777777"/><rect x="419.7" y="475.2" width="16.3" height="15.2" fill="#777777"/><rect x="421.7" y="492.4" width="16.3" height="15.0" fill="#777777"/><rect x="423.7" y="509.4" width="16.3" height="14.8" fill="#777777"/><rect x="425.6" y="526.2" width="16.3" height="14.7" fill="#777777"/><rect x="427.6" y="542.9" width="16.2" height="14.5" fill="#777777"/><rect x="429.5" y="559.3" width="16.2" height="14.4" fill="#777777"/><rect x="431.4" y="575.6" width="16.2" height="14.2" fill="#777777"/><rect x="433.3" y="591.8" width="16.2" height="14.1" fill="#777777"/><rect x="435.2" y="607.7" width="16.2" height="13.9" fill="#777777"/><rect x="437.0" y="623.6" width="16.1" height="13.8" fill="#777777"/><rect x="438.9" y="639.2" width="16.1" height="13.7" fill="#777777"/><rect x="440.7" y="654.7" width="16.1" height="13.5" fill="#777777"/><rect x="442.5" y="670.0" width="16.1" height="13.4" fill="#777777"/><rect x="444.2" y="685.2" width="16.1" height="13.3" fill="#777777"/><rect x="446.0" y="700.2" width="16.0" height="13.1" fill="#777777"/><rect x="447.7" y="715.1" width="16.0" height="13.0" fill="#777777"/><rect x="449.5" y="729.8" width="16.0" height="12.9" fill="#777777"/><rect x="451.2" y="744.4" width="16.0" height="12.7" fill="#777777"/><rect x="452.9" y="758.9" width="16.0" height="12.6" fill="#777777"/><rect x="454.5" y="773.2" width="15.9" height="12.5" fill="#777777"/><rect x="456.2" y="787.3" width="15.9" height="12.4" fill="#777777"/><rect x="457.8" y="801.3" width="15.9" height="12.4" fill="#777777"/><g fill="#58ffb9" stroke="#000" stroke-width="1.7"><circle cx="427.0" cy="466.0" r="5.73"/><circle cx="429.0" cy="483.3" r="5.68"/><circle cx="431.0" cy="500.4" r="5.63"/><circle cx="433.0" cy="517.3" r="5.58"/><circle cx="435.0" cy="534.1" r="5.54"/><circle cx="436.9" cy="550.6" r="5.49"/><circle cx="438.8" cy="567.0" r="5.44"/><circle cx="440.7" cy="583.3" r="5.40"/><circle cx="442.6" cy="599.3" r="5.35"/><circle cx="444.5" cy="615.2" r="5.31"/><circle cx="446.3" cy="631.0" r="5.27"/><circle cx="448.1" cy="646.5" r="5.22"/><circle cx="449.9" cy="661.9" r="5.18"/><circle cx="451.7" cy="677.2" r="5.14"/><circle cx="453.5" cy="692.3" r="5.10"/><circle cx="455.2" cy="707.3" r="5.06"/><circle cx="457.0" cy="722.1" r="5.02"/><circle cx="458.7" cy="736.8" r="4.98"/><circle cx="460.4" cy="751.3" r="4.94"/><circle cx="462.0" cy="765.7" r="4.90"/><circle cx="463.7" cy="779.9" r="4.87"/><circle cx="465.4" cy="794.0" r="4.83"/><circle cx="467.0" cy="808.0" r="4.83"/></g><polygon points="451.8,452.1 470.6,450.1 509.4,811.0 492.9,813.0" fill="#58ffb9" stroke="#58ffb9" stroke-width="4.5" stroke-linejoin="round"/><rect x="453.2" y="454.9" width="16.1" height="15.2" fill="#777777"/><rect x="455.1" y="472.1" width="16.1" height="15.0" fill="#777777"/><rect x="457.0" y="489.1" width="16.1" height="14.8" fill="#777777"/><rect x="458.9" y="506.0" width="16.1" height="14.7" fill="#777777"/><rect x="460.7" y="522.6" width="16.0" height="14.5" fill="#777777"/><rect x="462.6" y="539.1" width="16.0" height="14.4" fill="#777777"/><rect x="464.4" y="555.4" width="16.0" height="14.2" fill="#777777"/><rect x="466.2" y="571.6" width="16.0" height="14.1" fill="#777777"/><rect x="467.9" y="587.5" width="15.9" height="13.9" fill="#777777"/><rect x="469.7" y="603.3" width="15.9" height="13.8" fill="#777777"/><rect x="471.4" y="619.0" width="15.9" height="13.7" fill="#777777"/><rect x="473.2" y="634.5" width="15.9" height="13.5" fill="#777777"/><rect x="474.9" y="649.8" width="15.9" height="13.4" fill="#777777"/><rect x="476.5" y="665.0" width="15.8" height="13.2" fill="#777777"/><rect x="478.2" y="680.0" width="15.8" height="13.1" fill="#777777"/><rect x="479.9" y="694.9" width="15.8" height="13.0" fill="#777777"/><rect x="481.5" y="709.6" width="15.8" height="12.9" fill="#777777"/><rect x="483.1" y="724.2" width="15.8" height="12.7" fill="#777777"/><rect x="484.7" y="738.7" width="15.7" height="12.6" fill="#777777"/><rect x="486.3" y="753.0" width="15.7" height="12.5" fill="#777777"/><rect x="487.9" y="767.1" width="15.7" height="12.4" fill="#777777"/><rect x="489.4" y="781.1" width="15.7" height="12.2" fill="#777777"/><rect x="491.0" y="795.0" width="15.7" height="12.2" fill="#777777"/><g fill="#58ffb9" stroke="#000" stroke-width="1.7"><circle cx="462.5" cy="463.0" r="5.68"/><circle cx="464.4" cy="480.1" r="5.63"/><circle cx="466.3" cy="497.0" r="5.58"/><circle cx="468.1" cy="513.8" r="5.54"/><circle cx="470.0" cy="530.4" r="5.49"/><circle cx="471.8" cy="546.8" r="5.44"/><circle cx="473.6" cy="563.0" r="5.40"/><circle cx="475.4" cy="579.1" r="5.35"/><circle cx="477.1" cy="595.0" r="5.31"/><circle cx="478.9" cy="610.7" r="5.26"/><circle cx="480.6" cy="626.3" r="5.22"/><circle cx="482.3" cy="641.7" r="5.18"/><circle cx="484.0" cy="657.0" r="5.14"/><circle cx="485.7" cy="672.1" r="5.10"/><circle cx="487.3" cy="687.1" r="5.06"/><circle cx="489.0" cy="701.9" r="5.02"/><circle cx="490.6" cy="716.6" r="4.98"/><circle cx="492.2" cy="731.1" r="4.94"/><circle cx="493.8" cy="745.5" r="4.90"/><circle cx="495.4" cy="759.7" r="4.86"/><circle cx="496.9" cy="773.8" r="4.82"/><circle cx="498.5" cy="787.8" r="4.79"/><circle cx="500.0" cy="801.6" r="4.79"/></g><polygon points="486.6,448.7 505.2,446.7 542.8,803.4 526.5,805.4" fill="#58ffb9" stroke="#58ffb9" stroke-width="4.5" stroke-linejoin="round"/><rect x="488.1" y="451.6" width="15.9" height="15.0" fill="#777777"/><rect x="489.9" y="468.6" width="15.8" height="14.8" fill="#777777"/><rect x="491.7" y="485.4" width="15.8" height="14.6" fill="#777777"/><rect x="493.6" y="502.0" width="15.8" height="14.5" fill="#777777"/><rect x="495.3" y="518.5" width="15.8" height="14.3" fill="#777777"/><rect x="497.1" y="534.8" width="15.7" height="14.2" fill="#777777"/><rect x="498.9" y="550.9" width="15.7" height="14.0" fill="#777777"/><rect x="500.6" y="566.8" width="15.7" height="13.9" fill="#777777"/><rect x="502.3" y="582.6" width="15.7" height="13.8" fill="#777777"/><rect x="504.0" y="598.2" width="15.7" height="13.6" fill="#777777"/><rect x="505.7" y="613.6" width="15.6" height="13.5" fill="#777777"/><rect x="507.4" y="628.9" width="15.6" height="13.3" fill="#777777"/><rect x="509.0" y="644.1" width="15.6" height="13.2" fill="#777777"/><rect x="510.6" y="659.1" width="15.6" height="13.1" fill="#777777"/><rect x="512.2" y="673.9" width="15.6" height="12.9" fill="#777777"/><rect x="513.8" y="688.6" width="15.5" height="12.8" fill="#777777"/><rect x="515.4" y="703.2" width="15.5" height="12.7" fill="#777777"/><rect x="517.0" y="717.6" width="15.5" height="12.6" fill="#777777"/><rect x="518.5" y="731.8" width="15.5" height="12.4" fill="#777777"/><rect x="520.1" y="746.0" width="15.5" height="12.3" fill="#777777"/><rect x="521.6" y="759.9" width="15.5" height="12.2" fill="#777777"/><rect x="523.1" y="773.8" width="15.4" height="12.1" fill="#777777"/><rect x="524.6" y="787.5" width="15.4" height="12.1" fill="#777777"/><g fill="#58ffb9" stroke="#000" stroke-width="1.7"><circle cx="497.2" cy="459.6" r="5.62"/><circle cx="499.0" cy="476.5" r="5.57"/><circle cx="500.9" cy="493.2" r="5.53"/><circle cx="502.6" cy="509.8" r="5.48"/><circle cx="504.4" cy="526.1" r="5.43"/><circle cx="506.2" cy="542.3" r="5.39"/><circle cx="507.9" cy="558.4" r="5.34"/><circle cx="509.6" cy="574.3" r="5.30"/><circle cx="511.4" cy="590.0" r="5.25"/><circle cx="513.0" cy="605.5" r="5.21"/><circle cx="514.7" cy="620.9" r="5.17"/><circle cx="516.4" cy="636.1" r="5.13"/><circle cx="518.0" cy="651.2" r="5.08"/><circle cx="519.6" cy="666.1" r="5.04"/><circle cx="521.2" cy="680.9" r="5.00"/><circle cx="522.8" cy="695.5" r="4.96"/><circle cx="524.4" cy="710.0" r="4.93"/><circle cx="525.9" cy="724.4" r="4.89"/><circle cx="527.5" cy="738.6" r="4.85"/><circle cx="529.0" cy="752.6" r="4.81"/><circle cx="530.5" cy="766.5" r="4.78"/><circle cx="532.0" cy="780.3" r="4.74"/><circle cx="533.5" cy="794.0" r="4.74"/></g><polygon points="521.3,446.1 539.6,444.1 572.0,797.5 556.0,799.5" fill="#58ffb9" stroke="#58ffb9" stroke-width="4.5" stroke-linejoin="round"/><rect x="522.6" y="449.1" width="15.6" height="14.8" fill="#777777"/><rect x="524.2" y="465.9" width="15.6" height="14.6" fill="#777777"/><rect x="525.8" y="482.5" width="15.5" height="14.5" fill="#777777"/><rect x="527.3" y="499.0" width="15.5" height="14.3" fill="#777777"/><rect x="528.9" y="515.3" width="15.5" height="14.2" fill="#777777"/><rect x="530.4" y="531.4" width="15.5" height="14.0" fill="#777777"/><rect x="531.9" y="547.3" width="15.5" height="13.9" fill="#777777"/><rect x="533.4" y="563.1" width="15.4" height="13.7" fill="#777777"/><rect x="534.9" y="578.7" width="15.4" height="13.6" fill="#777777"/><rect x="536.4" y="594.2" width="15.4" height="13.5" fill="#777777"/><rect x="537.9" y="609.5" width="15.4" height="13.3" fill="#777777"/><rect x="539.3" y="624.6" width="15.4" height="13.2" fill="#777777"/><rect x="540.7" y="639.6" width="15.3" height="13.1" fill="#777777"/><rect x="542.1" y="654.5" width="15.3" height="12.9" fill="#777777"/><rect x="543.5" y="669.1" width="15.3" height="12.8" fill="#777777"/><rect x="544.9" y="683.7" width="15.3" height="12.7" fill="#777777"/><rect x="546.3" y="698.1" width="15.3" height="12.5" fill="#777777"/><rect x="547.6" y="712.3" width="15.2" height="12.4" fill="#777777"/><rect x="549.0" y="726.5" width="15.2" height="12.3" fill="#777777"/><rect x="550.3" y="740.4" width="15.2" height="12.2" fill="#777777"/><rect x="551.6" y="754.3" width="15.2" height="12.1" fill="#777777"/><rect x="552.9" y="768.0" width="15.2" height="12.0" fill="#777777"/><rect x="554.2" y="781.5" width="15.2" height="12.0" fill="#777777"/><g fill="#58ffb9" stroke="#000" stroke-width="1.7"><circle cx="531.6" cy="457.0" r="5.57"/><circle cx="533.2" cy="473.7" r="5.52"/><circle cx="534.8" cy="490.3" r="5.47"/><circle cx="536.3" cy="506.7" r="5.43"/><circle cx="537.8" cy="522.9" r="5.38"/><circle cx="539.4" cy="538.9" r="5.34"/><circle cx="540.9" cy="554.8" r="5.29"/><circle cx="542.4" cy="570.5" r="5.25"/><circle cx="543.8" cy="586.0" r="5.20"/><circle cx="545.3" cy="601.4" r="5.16"/><circle cx="546.7" cy="616.6" r="5.12"/><circle cx="548.2" cy="631.7" r="5.08"/><circle cx="549.6" cy="646.6" r="5.04"/><circle cx="551.0" cy="661.4" r="5.00"/><circle cx="552.4" cy="676.0" r="4.96"/><circle cx="553.8" cy="690.5" r="4.92"/><circle cx="555.1" cy="704.9" r="4.88"/><circle cx="556.5" cy="719.1" r="4.84"/><circle cx="557.8" cy="733.1" r="4.81"/><circle cx="559.1" cy="747.0" r="4.77"/><circle cx="560.4" cy="760.8" r="4.73"/><circle cx="561.7" cy="774.5" r="4.70"/><circle cx="563.0" cy="788.0" r="4.70"/></g><polygon points="745.2,410.9 809.5,414.3 812.9,752.6 757.0,759.0" fill="#58ffb9" stroke="#58ffb9" stroke-width="3" stroke-linejoin="round"/><g fill="#777777"><polygon points="748.5,412.2 763.9,413.0 764.2,424.8 748.8,424.1"/><polygon points="765.2,413.1 806.3,415.3 806.4,426.8 765.5,424.9"/><polygon points="748.9,426.7 764.3,427.4 764.6,439.2 749.3,438.6"/><polygon points="765.5,427.5 806.5,429.4 806.6,441.0 765.9,439.3"/><polygon points="749.4,441.2 764.7,441.8 765.0,453.6 749.8,453.1"/><polygon points="765.9,441.9 806.6,443.5 806.7,455.1 766.2,453.6"/><polygon points="749.9,455.7 765.0,456.2 765.4,468.0 750.3,467.6"/><polygon points="766.3,456.2 806.8,457.6 806.9,469.2 766.6,468.0"/><polygon points="750.3,470.2 765.4,470.6 765.8,482.4 750.7,482.0"/><polygon points="766.7,470.6 806.9,471.7 807.1,483.3 767.0,482.4"/><polygon points="750.8,484.6 765.8,485.0 766.1,496.8 751.2,496.5"/><polygon points="767.1,485.0 807.1,485.8 807.2,497.4 767.4,496.8"/><polygon points="751.3,499.1 766.2,499.4 766.5,511.1 751.7,511.0"/><polygon points="767.5,499.4 807.3,500.0 807.4,511.5 767.8,511.2"/><polygon points="751.8,513.6 766.6,513.7 766.9,525.5 752.2,525.5"/><polygon points="767.8,513.7 807.4,514.1 807.5,525.6 768.2,525.5"/><polygon points="752.2,528.1 767.0,528.1 767.3,539.9 752.6,540.0"/><polygon points="768.2,528.1 807.6,528.2 807.7,539.8 768.5,539.9"/><polygon points="752.7,542.6 767.4,542.5 767.7,554.3 753.1,554.5"/><polygon points="768.6,542.5 807.7,542.3 807.9,553.9 768.9,554.3"/><polygon points="753.2,557.1 767.8,556.9 768.1,568.7 753.6,568.9"/><polygon points="769.0,556.9 807.9,556.4 808.0,568.0 769.3,568.7"/><polygon points="753.7,571.5 768.2,571.3 768.5,583.1 754.1,583.4"/><polygon points="769.4,571.3 808.0,570.5 808.2,582.1 769.7,583.0"/><polygon points="754.1,586.0 768.6,585.7 768.9,597.5 754.5,597.9"/><polygon points="769.8,585.6 808.2,584.7 808.3,596.2 770.1,597.4"/><polygon points="754.6,600.5 769.0,600.1 769.3,611.8 755.0,612.4"/><polygon points="770.1,600.0 808.4,598.8 808.5,610.3 770.5,611.8"/><polygon points="755.1,615.0 769.3,614.4 769.7,626.2 755.5,626.9"/><polygon points="770.5,614.4 808.5,612.9 808.7,624.5 770.8,626.2"/><polygon points="755.6,629.5 769.7,628.8 770.1,640.6 756.0,641.4"/><polygon points="770.9,628.8 808.7,627.0 808.8,638.6 771.2,640.6"/><polygon points="756.0,644.0 770.1,643.2 770.4,655.0 756.4,655.8"/><polygon points="771.3,643.1 808.8,641.1 809.0,652.7 771.6,654.9"/><polygon points="756.5,658.5 770.5,657.6 770.8,669.4 756.9,670.3"/><polygon points="771.7,657.5 809.0,655.2 809.1,666.8 772.0,669.3"/><polygon points="757.0,672.9 770.9,672.0 771.2,683.8 757.4,684.8"/><polygon points="772.1,671.9 809.2,669.4 809.3,680.9 772.4,683.7"/><polygon points="757.5,687.4 771.3,686.4 771.6,698.2 757.9,699.3"/><polygon points="772.4,686.3 809.3,683.5 809.5,695.0 772.8,698.1"/><polygon points="757.9,701.9 771.7,700.8 772.0,712.5 758.3,713.8"/><polygon points="772.8,700.7 809.5,697.6 809.6,709.2 773.1,712.4"/><polygon points="758.4,716.4 772.1,715.1 772.4,726.9 758.8,728.3"/><polygon points="773.2,715.0 809.6,711.7 809.8,723.3 773.5,726.8"/><polygon points="758.9,730.9 772.5,729.5 772.8,741.3 759.3,742.7"/><polygon points="773.6,729.4 809.8,725.8 809.9,737.4 773.9,741.2"/><polygon points="759.4,745.4 772.9,743.9 773.2,755.7 759.7,757.2"/><polygon points="774.0,743.8 810.0,739.9 810.1,751.5 774.3,755.6"/></g><g fill="#58ffb9" stroke="#000" stroke-width="1.6"><circle cx="771.2" cy="421.9" r="5.7"/><circle cx="784.1" cy="427.7" r="5.7"/><circle cx="763.3" cy="439.5" r="5.7"/><circle cx="792.6" cy="438.5" r="5.7"/><circle cx="771.8" cy="449.4" r="5.7"/><circle cx="784.6" cy="455.1" r="5.7"/><circle cx="764.1" cy="467.1" r="5.7"/><circle cx="793.0" cy="465.8" r="5.7"/><circle cx="772.5" cy="477.0" r="5.7"/><circle cx="785.2" cy="482.5" r="5.7"/><circle cx="764.8" cy="494.7" r="5.7"/><circle cx="793.5" cy="493.0" r="5.7"/><circle cx="773.2" cy="504.5" r="5.7"/><circle cx="785.7" cy="509.9" r="5.7"/><circle cx="765.6" cy="522.4" r="5.7"/><circle cx="793.9" cy="520.3" r="5.7"/><circle cx="773.9" cy="532.0" r="5.7"/><circle cx="786.2" cy="537.2" r="5.7"/><circle cx="766.4" cy="550.0" r="5.7"/><circle cx="794.4" cy="547.6" r="5.7"/><circle cx="774.5" cy="559.6" r="5.7"/><circle cx="786.8" cy="564.6" r="5.7"/><circle cx="767.1" cy="577.6" r="5.7"/><circle cx="794.8" cy="574.9" r="5.7"/><circle cx="775.2" cy="587.1" r="5.7"/><circle cx="787.3" cy="592.0" r="5.7"/><circle cx="767.9" cy="605.3" r="5.7"/><circle cx="795.3" cy="602.1" r="5.7"/><circle cx="775.9" cy="614.6" r="5.7"/><circle cx="787.9" cy="619.4" r="5.7"/><circle cx="768.7" cy="632.9" r="5.7"/><circle cx="795.7" cy="629.4" r="5.7"/><circle cx="776.6" cy="642.2" r="5.7"/><circle cx="788.4" cy="646.7" r="5.7"/><circle cx="769.4" cy="660.5" r="5.7"/><circle cx="796.2" cy="656.7" r="5.7"/><circle cx="777.2" cy="669.7" r="5.7"/><circle cx="788.9" cy="674.1" r="5.7"/><circle cx="770.2" cy="688.2" r="5.7"/><circle cx="796.6" cy="684.0" r="5.7"/><circle cx="777.9" cy="697.2" r="5.7"/><circle cx="789.5" cy="701.5" r="5.7"/><circle cx="770.9" cy="715.8" r="5.7"/><circle cx="797.1" cy="711.2" r="5.7"/><circle cx="778.6" cy="724.8" r="5.7"/><circle cx="790.0" cy="728.9" r="5.7"/><circle cx="771.7" cy="743.5" r="5.7"/><circle cx="797.5" cy="738.5" r="5.7"/></g><polygon points="814.6,404.0 877.0,405.8 875.5,739.0 821.0,746.0" fill="#58ffb9" stroke="#58ffb9" stroke-width="3" stroke-linejoin="round"/><g fill="#777777"><polygon points="817.7,405.2 832.7,405.7 832.9,417.3 817.9,416.9"/><polygon points="834.0,405.7 873.9,406.8 873.8,418.2 834.1,417.3"/><polygon points="818.0,419.5 832.9,419.8 833.0,431.4 818.2,431.1"/><polygon points="834.1,419.8 873.8,420.7 873.8,432.1 834.3,431.4"/><polygon points="818.2,433.7 833.1,433.9 833.2,445.5 818.4,445.4"/><polygon points="834.3,434.0 873.8,434.6 873.7,446.0 834.4,445.6"/><polygon points="818.5,447.9 833.2,448.1 833.4,459.7 818.7,459.6"/><polygon points="834.5,448.1 873.7,448.5 873.7,459.9 834.6,459.7"/><polygon points="818.7,462.2 833.4,462.2 833.5,473.8 818.9,473.8"/><polygon points="834.6,462.2 873.7,462.4 873.7,473.8 834.8,473.8"/><polygon points="819.0,476.4 833.6,476.4 833.7,488.0 819.2,488.1"/><polygon points="834.8,476.4 873.6,476.3 873.6,487.7 834.9,488.0"/><polygon points="819.2,490.6 833.7,490.5 833.9,502.1 819.4,502.3"/><polygon points="834.9,490.5 873.6,490.2 873.6,501.6 835.1,502.1"/><polygon points="819.5,504.9 833.9,504.7 834.0,516.3 819.7,516.5"/><polygon points="835.1,504.6 873.6,504.1 873.5,515.5 835.2,516.2"/><polygon points="819.7,519.1 834.1,518.8 834.2,530.4 819.9,530.8"/><polygon points="835.3,518.8 873.5,518.0 873.5,529.4 835.4,530.4"/><polygon points="820.0,533.3 834.3,532.9 834.4,544.5 820.2,545.0"/><polygon points="835.4,532.9 873.5,531.9 873.4,543.3 835.6,544.5"/><polygon points="820.2,547.5 834.4,547.1 834.6,558.7 820.4,559.2"/><polygon points="835.6,547.1 873.4,545.8 873.4,557.2 835.7,558.6"/><polygon points="820.5,561.8 834.6,561.2 834.7,572.8 820.7,573.4"/><polygon points="835.8,561.2 873.4,559.7 873.3,571.1 835.9,572.8"/><polygon points="820.7,576.0 834.8,575.4 834.9,587.0 820.9,587.7"/><polygon points="835.9,575.3 873.3,573.6 873.3,585.0 836.1,586.9"/><polygon points="821.0,590.2 834.9,589.5 835.1,601.1 821.2,601.9"/><polygon points="836.1,589.5 873.3,587.5 873.2,598.9 836.2,601.1"/><polygon points="821.2,604.5 835.1,603.7 835.2,615.3 821.4,616.1"/><polygon points="836.3,603.6 873.2,601.4 873.2,612.8 836.4,615.2"/><polygon points="821.5,618.7 835.3,617.8 835.4,629.4 821.7,630.4"/><polygon points="836.4,617.7 873.2,615.3 873.1,626.7 836.6,629.3"/><polygon points="821.7,632.9 835.4,632.0 835.6,643.5 821.9,644.6"/><polygon points="836.6,631.9 873.1,629.2 873.1,640.6 836.7,643.5"/><polygon points="822.0,647.2 835.6,646.1 835.8,657.7 822.2,658.8"/><polygon points="836.8,646.0 873.1,643.2 873.1,654.5 836.9,657.6"/><polygon points="822.2,661.4 835.8,660.2 835.9,671.8 822.4,673.1"/><polygon points="836.9,660.1 873.0,657.1 873.0,668.5 837.1,671.7"/><polygon points="822.5,675.6 836.0,674.4 836.1,686.0 822.7,687.3"/><polygon points="837.1,674.3 873.0,671.0 873.0,682.4 837.2,685.9"/><polygon points="822.7,689.9 836.1,688.5 836.3,700.1 822.9,701.5"/><polygon points="837.2,688.4 873.0,684.9 872.9,696.3 837.4,700.0"/><polygon points="823.0,704.1 836.3,702.7 836.4,714.3 823.2,715.8"/><polygon points="837.4,702.6 872.9,698.8 872.9,710.2 837.5,714.1"/><polygon points="823.2,718.3 836.5,716.8 836.6,728.4 823.4,730.0"/><polygon points="837.6,716.7 872.9,712.7 872.8,724.1 837.7,728.3"/><polygon points="823.5,732.6 836.6,731.0 836.8,742.6 823.7,744.2"/><polygon points="837.7,730.8 872.8,726.6 872.8,738.0 837.9,742.4"/></g><g fill="#58ffb9" stroke="#000" stroke-width="1.6"><circle cx="839.7" cy="414.2" r="5.6"/><circle cx="852.1" cy="419.6" r="5.6"/><circle cx="831.8" cy="431.7" r="5.6"/><circle cx="860.2" cy="430.0" r="5.6"/><circle cx="839.9" cy="441.3" r="5.6"/><circle cx="852.2" cy="446.6" r="5.6"/><circle cx="832.1" cy="458.8" r="5.6"/><circle cx="860.2" cy="456.9" r="5.6"/><circle cx="840.2" cy="468.4" r="5.6"/><circle cx="852.4" cy="473.5" r="5.6"/><circle cx="832.5" cy="486.0" r="5.6"/><circle cx="860.3" cy="483.7" r="5.6"/><circle cx="840.4" cy="495.4" r="5.6"/><circle cx="852.5" cy="500.4" r="5.6"/><circle cx="832.8" cy="513.2" r="5.6"/><circle cx="860.4" cy="510.6" r="5.6"/><circle cx="840.7" cy="522.5" r="5.6"/><circle cx="852.6" cy="527.4" r="5.6"/><circle cx="833.2" cy="540.3" r="5.6"/><circle cx="860.4" cy="537.4" r="5.6"/><circle cx="840.9" cy="549.6" r="5.6"/><circle cx="852.8" cy="554.3" r="5.6"/><circle cx="833.5" cy="567.5" r="5.6"/><circle cx="860.5" cy="564.2" r="5.6"/><circle cx="841.2" cy="576.7" r="5.6"/><circle cx="852.9" cy="581.3" r="5.6"/><circle cx="833.8" cy="594.7" r="5.6"/><circle cx="860.5" cy="591.1" r="5.6"/><circle cx="841.5" cy="603.7" r="5.6"/><circle cx="853.0" cy="608.2" r="5.6"/><circle cx="834.2" cy="621.8" r="5.6"/><circle cx="860.6" cy="617.9" r="5.6"/><circle cx="841.7" cy="630.8" r="5.6"/><circle cx="853.2" cy="635.1" r="5.6"/><circle cx="834.5" cy="649.0" r="5.6"/><circle cx="860.6" cy="644.8" r="5.6"/><circle cx="842.0" cy="657.9" r="5.6"/><circle cx="853.3" cy="662.1" r="5.6"/><circle cx="834.9" cy="676.2" r="5.6"/><circle cx="860.7" cy="671.6" r="5.6"/><circle cx="842.2" cy="685.0" r="5.6"/><circle cx="853.4" cy="689.0" r="5.6"/><circle cx="835.2" cy="703.4" r="5.6"/><circle cx="860.7" cy="698.5" r="5.6"/><circle cx="842.5" cy="712.1" r="5.6"/><circle cx="853.6" cy="715.9" r="5.6"/><circle cx="835.5" cy="730.5" r="5.6"/><circle cx="860.8" cy="725.3" r="5.6"/></g><polygon points="878.8,399.0 938.0,400.7 934.7,725.5 880.5,732.3" fill="#58ffb9" stroke="#58ffb9" stroke-width="3" stroke-linejoin="round"/><g fill="#777777"><polygon points="881.8,400.2 896.0,400.6 896.0,411.9 881.8,411.6"/><polygon points="897.2,400.6 935.0,401.7 934.9,412.8 897.2,411.9"/><polygon points="881.8,414.1 896.0,414.4 896.0,425.7 881.9,425.4"/><polygon points="897.2,414.4 934.9,415.3 934.8,426.4 897.2,425.7"/><polygon points="881.9,427.9 896.0,428.2 896.0,439.5 881.9,439.3"/><polygon points="897.2,428.2 934.8,428.8 934.7,439.9 897.2,439.5"/><polygon points="881.9,441.8 896.0,442.0 896.0,453.3 882.0,453.2"/><polygon points="897.2,442.0 934.6,442.4 934.5,453.5 897.2,453.3"/><polygon points="882.0,455.7 896.0,455.7 896.0,467.0 882.1,467.0"/><polygon points="897.2,455.7 934.5,455.9 934.4,467.0 897.2,467.0"/><polygon points="882.1,469.5 896.0,469.5 896.0,480.8 882.1,480.9"/><polygon points="897.2,469.5 934.4,469.5 934.3,480.6 897.2,480.8"/><polygon points="882.1,483.4 896.0,483.3 896.0,494.6 882.2,494.8"/><polygon points="897.2,483.3 934.3,483.0 934.2,494.1 897.2,494.6"/><polygon points="882.2,497.3 896.0,497.1 896.1,508.4 882.2,508.7"/><polygon points="897.2,497.1 934.1,496.6 934.0,507.7 897.2,508.4"/><polygon points="882.2,511.2 896.1,510.9 896.1,522.2 882.3,522.5"/><polygon points="897.2,510.9 934.0,510.1 933.9,521.2 897.2,522.1"/><polygon points="882.3,525.0 896.1,524.7 896.1,536.0 882.4,536.4"/><polygon points="897.2,524.6 933.9,523.7 933.8,534.8 897.2,535.9"/><polygon points="882.4,538.9 896.1,538.4 896.1,549.7 882.4,550.3"/><polygon points="897.2,538.4 933.8,537.2 933.7,548.3 897.2,549.7"/><polygon points="882.4,552.8 896.1,552.2 896.1,563.5 882.5,564.1"/><polygon points="897.2,552.2 933.6,550.8 933.5,561.9 897.2,563.5"/><polygon points="882.5,566.6 896.1,566.0 896.1,577.3 882.5,578.0"/><polygon points="897.2,566.0 933.5,564.3 933.4,575.4 897.2,577.3"/><polygon points="882.6,580.5 896.1,579.8 896.1,591.1 882.6,591.9"/><polygon points="897.2,579.7 933.4,577.9 933.3,589.0 897.2,591.0"/><polygon points="882.6,594.4 896.1,593.6 896.1,604.9 882.7,605.7"/><polygon points="897.2,593.5 933.3,591.4 933.1,602.5 897.2,604.8"/><polygon points="882.7,608.2 896.1,607.4 896.1,618.7 882.7,619.6"/><polygon points="897.2,607.3 933.1,605.0 933.0,616.1 897.3,618.6"/><polygon points="882.7,622.1 896.1,621.2 896.1,632.5 882.8,633.5"/><polygon points="897.3,621.1 933.0,618.5 932.9,629.6 897.3,632.4"/><polygon points="882.8,636.0 896.1,634.9 896.2,646.2 882.8,647.4"/><polygon points="897.3,634.9 932.9,632.1 932.8,643.2 897.3,646.1"/><polygon points="882.9,649.9 896.2,648.7 896.2,660.0 882.9,661.2"/><polygon points="897.3,648.6 932.7,645.6 932.6,656.7 897.3,659.9"/><polygon points="882.9,663.7 896.2,662.5 896.2,673.8 883.0,675.1"/><polygon points="897.3,662.4 932.6,659.2 932.5,670.3 897.3,673.7"/><polygon points="883.0,677.6 896.2,676.3 896.2,687.6 883.0,689.0"/><polygon points="897.3,676.2 932.5,672.7 932.4,683.8 897.3,687.5"/><polygon points="883.0,691.5 896.2,690.1 896.2,701.4 883.1,702.8"/><polygon points="897.3,690.0 932.4,686.3 932.3,697.4 897.3,701.3"/><polygon points="883.1,705.3 896.2,703.9 896.2,715.2 883.1,716.7"/><polygon points="897.3,703.7 932.2,699.8 932.1,710.9 897.3,715.0"/><polygon points="883.2,719.2 896.2,717.6 896.2,728.9 883.2,730.6"/><polygon points="897.3,717.5 932.1,713.4 932.0,724.5 897.3,728.8"/></g><g fill="#58ffb9" stroke="#000" stroke-width="1.6"><circle cx="902.5" cy="408.9" r="5.5"/><circle cx="914.3" cy="414.2" r="5.5"/><circle cx="894.8" cy="425.9" r="5.5"/><circle cx="921.9" cy="424.3" r="5.5"/><circle cx="902.4" cy="435.3" r="5.5"/><circle cx="914.2" cy="440.5" r="5.5"/><circle cx="894.8" cy="452.4" r="5.5"/><circle cx="921.7" cy="450.5" r="5.5"/><circle cx="902.4" cy="461.7" r="5.5"/><circle cx="914.1" cy="466.7" r="5.5"/><circle cx="894.9" cy="478.9" r="5.5"/><circle cx="921.6" cy="476.7" r="5.5"/><circle cx="902.4" cy="488.1" r="5.5"/><circle cx="914.0" cy="493.0" r="5.5"/><circle cx="894.9" cy="505.4" r="5.5"/><circle cx="921.4" cy="502.8" r="5.5"/><circle cx="902.4" cy="514.5" r="5.5"/><circle cx="913.8" cy="519.2" r="5.5"/><circle cx="894.9" cy="531.9" r="5.5"/><circle cx="921.2" cy="529.0" r="5.5"/><circle cx="902.4" cy="540.9" r="5.5"/><circle cx="913.7" cy="545.5" r="5.5"/><circle cx="895.0" cy="558.3" r="5.5"/><circle cx="921.1" cy="555.2" r="5.5"/><circle cx="902.3" cy="567.3" r="5.5"/><circle cx="913.6" cy="571.7" r="5.5"/><circle cx="895.0" cy="584.8" r="5.5"/><circle cx="920.9" cy="581.3" r="5.5"/><circle cx="902.3" cy="593.7" r="5.5"/><circle cx="913.5" cy="598.0" r="5.5"/><circle cx="895.0" cy="611.3" r="5.5"/><circle cx="920.8" cy="607.5" r="5.5"/><circle cx="902.3" cy="620.1" r="5.5"/><circle cx="913.4" cy="624.2" r="5.5"/><circle cx="895.0" cy="637.8" r="5.5"/><circle cx="920.6" cy="633.7" r="5.5"/><circle cx="902.3" cy="646.4" r="5.5"/><circle cx="913.3" cy="650.5" r="5.5"/><circle cx="895.1" cy="664.3" r="5.5"/><circle cx="920.5" cy="659.8" r="5.5"/><circle cx="902.2" cy="672.8" r="5.5"/><circle cx="913.2" cy="676.8" r="5.5"/><circle cx="895.1" cy="690.7" r="5.5"/><circle cx="920.3" cy="686.0" r="5.5"/><circle cx="902.2" cy="699.2" r="5.5"/><circle cx="913.1" cy="703.0" r="5.5"/><circle cx="895.1" cy="717.2" r="5.5"/><circle cx="920.2" cy="712.2" r="5.5"/></g><polygon points="941.4,394.0 999.0,394.0 990.5,708.6 938.0,718.7" fill="#58ffb9" stroke="#58ffb9" stroke-width="3" stroke-linejoin="round"/><g fill="#777777"><polygon points="944.3,395.1 958.1,395.1 957.9,406.1 944.1,406.2"/><polygon points="959.2,395.1 996.1,395.1 995.8,405.8 959.1,406.1"/><polygon points="944.1,408.6 957.9,408.5 957.7,419.5 944.0,419.7"/><polygon points="959.0,408.5 995.7,408.2 995.5,418.9 958.9,419.5"/><polygon points="944.0,422.1 957.7,421.9 957.5,432.9 943.8,433.2"/><polygon points="958.8,421.9 995.4,421.3 995.1,432.1 958.7,432.9"/><polygon points="943.8,435.6 957.5,435.3 957.3,446.3 943.7,446.7"/><polygon points="958.6,435.3 995.1,434.4 994.8,445.2 958.4,446.3"/><polygon points="943.7,449.1 957.3,448.7 957.1,459.7 943.5,460.2"/><polygon points="958.4,448.7 994.7,447.6 994.4,458.3 958.2,459.7"/><polygon points="943.5,462.6 957.1,462.1 956.9,473.1 943.4,473.7"/><polygon points="958.2,462.1 994.4,460.7 994.1,471.5 958.0,473.1"/><polygon points="943.4,476.1 956.9,475.5 956.7,486.5 943.2,487.2"/><polygon points="958.0,475.5 994.0,473.8 993.7,484.6 957.8,486.5"/><polygon points="943.2,489.6 956.7,488.9 956.5,499.9 943.1,500.7"/><polygon points="957.8,488.9 993.7,487.0 993.4,497.7 957.6,499.8"/><polygon points="943.0,503.1 956.5,502.3 956.3,513.3 942.9,514.2"/><polygon points="957.6,502.3 993.3,500.1 993.1,510.9 957.4,513.2"/><polygon points="942.9,516.7 956.3,515.7 956.1,526.7 942.8,527.7"/><polygon points="957.4,515.7 993.0,513.2 992.7,524.0 957.2,526.6"/><polygon points="942.7,530.2 956.1,529.1 955.9,540.1 942.6,541.2"/><polygon points="957.2,529.1 992.7,526.3 992.4,537.1 957.0,540.0"/><polygon points="942.6,543.7 955.9,542.6 955.7,553.5 942.5,554.7"/><polygon points="957.0,542.5 992.3,539.5 992.0,550.2 956.8,553.4"/><polygon points="942.4,557.2 955.6,556.0 955.5,567.0 942.3,568.3"/><polygon points="956.7,555.9 992.0,552.6 991.7,563.4 956.6,566.8"/><polygon points="942.3,570.7 955.4,569.4 955.3,580.4 942.2,581.8"/><polygon points="956.5,569.3 991.6,565.7 991.3,576.5 956.4,580.2"/><polygon points="942.1,584.2 955.2,582.8 955.1,593.8 942.0,595.3"/><polygon points="956.3,582.7 991.3,578.9 991.0,589.6 956.2,593.6"/><polygon points="942.0,597.7 955.0,596.2 954.9,607.2 941.9,608.8"/><polygon points="956.1,596.1 990.9,592.0 990.7,602.8 956.0,607.0"/><polygon points="941.8,611.2 954.8,609.6 954.7,620.6 941.7,622.3"/><polygon points="955.9,609.5 990.6,605.1 990.3,615.9 955.7,620.4"/><polygon points="941.7,624.7 954.6,623.0 954.5,634.0 941.6,635.8"/><polygon points="955.7,622.8 990.3,618.2 990.0,629.0 955.5,633.8"/><polygon points="941.5,638.2 954.4,636.4 954.3,647.4 941.4,649.3"/><polygon points="955.5,636.2 989.9,631.4 989.6,642.1 955.3,647.2"/><polygon points="941.4,651.7 954.2,649.8 954.1,660.8 941.2,662.8"/><polygon points="955.3,649.6 989.6,644.5 989.3,655.3 955.1,660.6"/><polygon points="941.2,665.2 954.0,663.2 953.9,674.2 941.1,676.3"/><polygon points="955.1,663.0 989.2,657.6 988.9,668.4 954.9,674.0"/><polygon points="941.1,678.8 953.8,676.6 953.7,687.6 940.9,689.8"/><polygon points="954.9,676.4 988.9,670.8 988.6,681.5 954.7,687.4"/><polygon points="940.9,692.3 953.6,690.0 953.4,701.0 940.8,703.3"/><polygon points="954.7,689.8 988.5,683.9 988.3,694.7 954.5,700.8"/><polygon points="940.8,705.8 953.4,703.4 953.2,714.4 940.6,716.8"/><polygon points="954.5,703.2 988.2,697.0 987.9,707.8 954.3,714.2"/></g><g fill="#58ffb9" stroke="#000" stroke-width="1.6"><circle cx="964.3" cy="403.0" r="5.5"/><circle cx="975.7" cy="407.8" r="5.5"/><circle cx="956.6" cy="419.8" r="5.5"/><circle cx="982.9" cy="417.4" r="5.5"/><circle cx="963.9" cy="428.6" r="5.5"/><circle cx="975.2" cy="433.3" r="5.5"/><circle cx="956.2" cy="445.5" r="5.5"/><circle cx="982.4" cy="442.7" r="5.5"/><circle cx="963.4" cy="454.3" r="5.5"/><circle cx="974.6" cy="458.7" r="5.5"/><circle cx="955.8" cy="471.3" r="5.5"/><circle cx="981.8" cy="468.1" r="5.5"/><circle cx="963.0" cy="479.9" r="5.5"/><circle cx="974.1" cy="484.2" r="5.5"/><circle cx="955.4" cy="497.0" r="5.5"/><circle cx="981.2" cy="493.5" r="5.5"/><circle cx="962.5" cy="505.6" r="5.5"/><circle cx="973.6" cy="509.7" r="5.5"/><circle cx="955.0" cy="522.8" r="5.5"/><circle cx="980.6" cy="518.9" r="5.5"/><circle cx="962.1" cy="531.2" r="5.5"/><circle cx="973.1" cy="535.2" r="5.5"/><circle cx="954.7" cy="548.5" r="5.5"/><circle cx="980.1" cy="544.3" r="5.5"/><circle cx="961.7" cy="556.9" r="5.5"/><circle cx="972.6" cy="560.7" r="5.5"/><circle cx="954.3" cy="574.3" r="5.5"/><circle cx="979.5" cy="569.7" r="5.5"/><circle cx="961.2" cy="582.5" r="5.5"/><circle cx="972.1" cy="586.2" r="5.5"/><circle cx="953.9" cy="600.1" r="5.5"/><circle cx="978.9" cy="595.1" r="5.5"/><circle cx="960.8" cy="608.2" r="5.5"/><circle cx="971.5" cy="611.7" r="5.5"/><circle cx="953.5" cy="625.8" r="5.5"/><circle cx="978.4" cy="620.4" r="5.5"/><circle cx="960.4" cy="633.9" r="5.5"/><circle cx="971.0" cy="637.2" r="5.5"/><circle cx="953.1" cy="651.6" r="5.5"/><circle cx="977.8" cy="645.8" r="5.5"/><circle cx="959.9" cy="659.5" r="5.5"/><circle cx="970.5" cy="662.7" r="5.5"/><circle cx="952.7" cy="677.3" r="5.5"/><circle cx="977.2" cy="671.2" r="5.5"/><circle cx="959.5" cy="685.2" r="5.5"/><circle cx="970.0" cy="688.2" r="5.5"/><circle cx="952.4" cy="703.1" r="5.5"/><circle cx="976.7" cy="696.6" r="5.5"/></g><polygon points="1000.6,389.0 1056.5,386.4 1050.0,696.5 993.9,707.0" fill="#58ffb9" stroke="#58ffb9" stroke-width="3" stroke-linejoin="round"/><g fill="#777777"><polygon points="1003.4,389.9 1016.8,389.3 1016.6,400.1 1003.1,400.8"/><polygon points="1017.9,389.2 1053.7,387.6 1053.5,398.2 1017.7,400.0"/><polygon points="1003.1,403.2 1016.5,402.5 1016.3,413.2 1002.9,414.0"/><polygon points="1017.6,402.4 1053.4,400.5 1053.2,411.1 1017.4,413.2"/><polygon points="1002.8,416.4 1016.2,415.6 1016.0,426.4 1002.6,427.2"/><polygon points="1017.4,415.5 1053.1,413.4 1052.9,424.0 1017.1,426.3"/><polygon points="1002.5,429.6 1016.0,428.8 1015.7,439.5 1002.3,440.5"/><polygon points="1017.1,428.7 1052.9,426.4 1052.6,437.0 1016.9,439.5"/><polygon points="1002.3,442.9 1015.7,441.9 1015.5,452.7 1002.0,453.7"/><polygon points="1016.8,441.8 1052.6,439.3 1052.4,449.9 1016.6,452.6"/><polygon points="1002.0,456.1 1015.4,455.1 1015.2,465.9 1001.8,466.9"/><polygon points="1016.5,455.0 1052.3,452.3 1052.1,462.9 1016.3,465.8"/><polygon points="1001.7,469.3 1015.1,468.2 1014.9,479.0 1001.5,480.2"/><polygon points="1016.2,468.1 1052.1,465.2 1051.8,475.8 1016.0,478.9"/><polygon points="1001.4,482.6 1014.9,481.4 1014.6,492.2 1001.2,493.4"/><polygon points="1016.0,481.3 1051.8,478.1 1051.6,488.7 1015.7,492.1"/><polygon points="1001.1,495.8 1014.6,494.5 1014.3,505.3 1000.9,506.6"/><polygon points="1015.7,494.4 1051.5,491.1 1051.3,501.7 1015.5,505.2"/><polygon points="1000.9,509.0 1014.3,507.7 1014.1,518.5 1000.6,519.9"/><polygon points="1015.4,507.6 1051.2,504.0 1051.0,514.6 1015.2,518.4"/><polygon points="1000.6,522.3 1014.0,520.8 1013.8,531.6 1000.4,533.1"/><polygon points="1015.1,520.7 1051.0,516.9 1050.7,527.5 1014.9,531.5"/><polygon points="1000.3,535.5 1013.7,534.0 1013.5,544.8 1000.1,546.3"/><polygon points="1014.9,533.9 1050.7,529.9 1050.5,540.5 1014.6,544.7"/><polygon points="1000.0,548.7 1013.5,547.2 1013.2,557.9 999.8,559.6"/><polygon points="1014.6,547.0 1050.4,542.8 1050.2,553.4 1014.4,557.8"/><polygon points="999.7,562.0 1013.2,560.3 1013.0,571.1 999.5,572.8"/><polygon points="1014.3,560.2 1050.2,555.7 1049.9,566.4 1014.1,571.0"/><polygon points="999.5,575.2 1012.9,573.5 1012.7,584.2 999.2,586.0"/><polygon points="1014.0,573.3 1049.9,568.7 1049.7,579.3 1013.8,584.1"/><polygon points="999.2,588.4 1012.6,586.6 1012.4,597.4 999.0,599.3"/><polygon points="1013.8,586.5 1049.6,581.6 1049.4,592.2 1013.5,597.2"/><polygon points="998.9,601.7 1012.4,599.8 1012.1,610.6 998.7,612.5"/><polygon points="1013.5,599.6 1049.3,594.6 1049.1,605.2 1013.3,610.4"/><polygon points="998.6,614.9 1012.1,612.9 1011.9,623.7 998.4,625.8"/><polygon points="1013.2,612.8 1049.1,607.5 1048.8,618.1 1013.0,623.5"/><polygon points="998.4,628.1 1011.8,626.1 1011.6,636.9 998.1,639.0"/><polygon points="1012.9,625.9 1048.8,620.4 1048.6,631.0 1012.7,636.7"/><polygon points="998.1,641.4 1011.5,639.2 1011.3,650.0 997.8,652.2"/><polygon points="1012.7,639.1 1048.5,633.4 1048.3,644.0 1012.4,649.8"/><polygon points="997.8,654.6 1011.3,652.4 1011.0,663.2 997.6,665.5"/><polygon points="1012.4,652.2 1048.3,646.3 1048.0,656.9 1012.1,663.0"/><polygon points="997.5,667.8 1011.0,665.5 1010.8,676.3 997.3,678.7"/><polygon points="1012.1,665.4 1048.0,659.2 1047.8,669.9 1011.9,676.1"/><polygon points="997.2,681.1 1010.7,678.7 1010.5,689.5 997.0,691.9"/><polygon points="1011.8,678.5 1047.7,672.2 1047.5,682.8 1011.6,689.3"/><polygon points="997.0,694.3 1010.4,691.9 1010.2,702.6 996.7,705.2"/><polygon points="1011.5,691.6 1047.4,685.1 1047.2,695.7 1011.3,702.4"/></g><g fill="#58ffb9" stroke="#000" stroke-width="1.6"><circle cx="1022.8" cy="396.8" r="5.4"/><circle cx="1033.9" cy="401.0" r="5.4"/><circle cx="1015.2" cy="413.6" r="5.4"/><circle cx="1040.9" cy="410.1" r="5.4"/><circle cx="1022.2" cy="422.0" r="5.4"/><circle cx="1033.3" cy="426.0" r="5.4"/><circle cx="1014.6" cy="438.8" r="5.4"/><circle cx="1040.4" cy="435.1" r="5.4"/><circle cx="1021.7" cy="447.1" r="5.4"/><circle cx="1032.8" cy="451.1" r="5.4"/><circle cx="1014.1" cy="464.1" r="5.4"/><circle cx="1039.9" cy="460.0" r="5.4"/><circle cx="1021.2" cy="472.3" r="5.4"/><circle cx="1032.3" cy="476.2" r="5.4"/><circle cx="1013.6" cy="489.4" r="5.4"/><circle cx="1039.4" cy="485.0" r="5.4"/><circle cx="1020.7" cy="497.5" r="5.4"/><circle cx="1031.8" cy="501.2" r="5.4"/><circle cx="1013.0" cy="514.6" r="5.4"/><circle cx="1038.8" cy="510.0" r="5.4"/><circle cx="1020.1" cy="522.7" r="5.4"/><circle cx="1031.2" cy="526.3" r="5.4"/><circle cx="1012.5" cy="539.9" r="5.4"/><circle cx="1038.3" cy="535.0" r="5.4"/><circle cx="1019.6" cy="547.9" r="5.4"/><circle cx="1030.7" cy="551.3" r="5.4"/><circle cx="1012.0" cy="565.2" r="5.4"/><circle cx="1037.8" cy="560.0" r="5.4"/><circle cx="1019.1" cy="573.1" r="5.4"/><circle cx="1030.2" cy="576.4" r="5.4"/><circle cx="1011.4" cy="590.5" r="5.4"/><circle cx="1037.3" cy="584.9" r="5.4"/><circle cx="1018.5" cy="598.3" r="5.4"/><circle cx="1029.6" cy="601.5" r="5.4"/><circle cx="1010.9" cy="615.7" r="5.4"/><circle cx="1036.7" cy="609.9" r="5.4"/><circle cx="1018.0" cy="623.5" r="5.4"/><circle cx="1029.1" cy="626.5" r="5.4"/><circle cx="1010.4" cy="641.0" r="5.4"/><circle cx="1036.2" cy="634.9" r="5.4"/><circle cx="1017.5" cy="648.6" r="5.4"/><circle cx="1028.6" cy="651.6" r="5.4"/><circle cx="1009.8" cy="666.3" r="5.4"/><circle cx="1035.7" cy="659.9" r="5.4"/><circle cx="1016.9" cy="673.8" r="5.4"/><circle cx="1028.1" cy="676.6" r="5.4"/><circle cx="1009.3" cy="691.5" r="5.4"/><circle cx="1035.2" cy="684.8" r="5.4"/></g><polygon points="1055.8,386.4 1109.7,382.0 1097.0,687.8 1050.0,696.5" fill="#58ffb9" stroke="#58ffb9" stroke-width="3" stroke-linejoin="round"/><g fill="#777777"><polygon points="1058.5,387.2 1071.4,386.2 1071.1,396.7 1058.3,397.8"/><polygon points="1072.5,386.1 1107.0,383.2 1106.5,393.7 1072.2,396.6"/><polygon points="1058.2,400.1 1071.1,399.0 1070.8,409.6 1058.0,410.7"/><polygon points="1072.2,398.9 1106.4,396.0 1106.0,406.4 1071.9,409.5"/><polygon points="1058.0,413.0 1070.8,411.9 1070.5,422.4 1057.8,423.6"/><polygon points="1071.8,411.8 1105.9,408.7 1105.5,419.2 1071.5,422.3"/><polygon points="1057.7,425.9 1070.4,424.8 1070.2,435.3 1057.5,436.5"/><polygon points="1071.5,424.7 1105.4,421.5 1105.0,431.9 1071.2,435.2"/><polygon points="1057.5,438.9 1070.1,437.6 1069.8,448.2 1057.2,449.4"/><polygon points="1071.2,437.5 1104.9,434.2 1104.5,444.7 1070.9,448.1"/><polygon points="1057.2,451.8 1069.8,450.5 1069.5,461.1 1057.0,462.4"/><polygon points="1070.8,450.4 1104.4,447.0 1104.0,457.4 1070.6,460.9"/><polygon points="1056.9,464.7 1069.5,463.4 1069.2,473.9 1056.7,475.3"/><polygon points="1070.5,463.3 1103.9,459.7 1103.5,470.2 1070.2,473.8"/><polygon points="1056.7,477.6 1069.1,476.2 1068.9,486.8 1056.5,488.2"/><polygon points="1070.2,476.1 1103.4,472.5 1102.9,482.9 1069.9,486.7"/><polygon points="1056.4,490.5 1068.8,489.1 1068.5,499.7 1056.2,501.1"/><polygon points="1069.8,489.0 1102.8,485.2 1102.4,495.7 1069.6,499.5"/><polygon points="1056.2,503.4 1068.5,502.0 1068.2,512.5 1056.0,514.0"/><polygon points="1069.5,501.9 1102.3,498.0 1101.9,508.5 1069.2,512.4"/><polygon points="1055.9,516.3 1068.2,514.8 1067.9,525.4 1055.7,526.9"/><polygon points="1069.2,514.7 1101.8,510.7 1101.4,521.2 1068.9,525.3"/><polygon points="1055.7,529.2 1067.8,527.7 1067.6,538.3 1055.4,539.8"/><polygon points="1068.8,527.6 1101.3,523.5 1100.9,534.0 1068.6,538.1"/><polygon points="1055.4,542.2 1067.5,540.6 1067.2,551.1 1055.2,552.7"/><polygon points="1068.5,540.4 1100.8,536.2 1100.4,546.7 1068.2,551.0"/><polygon points="1055.1,555.1 1067.2,553.4 1066.9,564.0 1054.9,565.7"/><polygon points="1068.2,553.3 1100.3,549.0 1099.8,559.5 1067.9,563.9"/><polygon points="1054.9,568.0 1066.9,566.3 1066.6,576.9 1054.7,578.6"/><polygon points="1067.9,566.2 1099.8,561.7 1099.3,572.2 1067.6,576.7"/><polygon points="1054.6,580.9 1066.5,579.2 1066.3,589.7 1054.4,591.5"/><polygon points="1067.5,579.0 1099.2,574.5 1098.8,585.0 1067.2,589.6"/><polygon points="1054.4,593.8 1066.2,592.1 1065.9,602.6 1054.2,604.4"/><polygon points="1067.2,591.9 1098.7,587.3 1098.3,597.7 1066.9,602.5"/><polygon points="1054.1,606.7 1065.9,604.9 1065.6,615.5 1053.9,617.3"/><polygon points="1066.9,604.8 1098.2,600.0 1097.8,610.5 1066.6,615.3"/><polygon points="1053.9,619.6 1065.6,617.8 1065.3,628.3 1053.7,630.2"/><polygon points="1066.5,617.6 1097.7,612.8 1097.3,623.2 1066.3,628.2"/><polygon points="1053.6,632.5 1065.2,630.7 1065.0,641.2 1053.4,643.1"/><polygon points="1066.2,630.5 1097.2,625.5 1096.8,636.0 1065.9,641.1"/><polygon points="1053.4,645.5 1064.9,643.5 1064.6,654.1 1053.1,656.0"/><polygon points="1065.9,643.4 1096.7,638.3 1096.2,648.7 1065.6,653.9"/><polygon points="1053.1,658.4 1064.6,656.4 1064.3,667.0 1052.9,669.0"/><polygon points="1065.5,656.2 1096.2,651.0 1095.7,661.5 1065.3,666.8"/><polygon points="1052.8,671.3 1064.3,669.3 1064.0,679.8 1052.6,681.9"/><polygon points="1065.2,669.1 1095.6,663.8 1095.2,674.2 1064.9,679.7"/><polygon points="1052.6,684.2 1063.9,682.1 1063.7,692.7 1052.4,694.8"/><polygon points="1064.9,682.0 1095.1,676.5 1094.7,687.0 1064.6,692.5"/></g><g fill="#58ffb9" stroke="#000" stroke-width="1.6"><circle cx="1077.1" cy="393.3" r="5.3"/><circle cx="1087.7" cy="397.0" r="5.3"/><circle cx="1069.7" cy="409.9" r="5.3"/><circle cx="1094.3" cy="405.8" r="5.3"/><circle cx="1076.4" cy="417.9" r="5.3"/><circle cx="1086.9" cy="421.6" r="5.3"/><circle cx="1069.1" cy="434.6" r="5.3"/><circle cx="1093.5" cy="430.3" r="5.3"/><circle cx="1075.8" cy="442.6" r="5.3"/><circle cx="1086.1" cy="446.2" r="5.3"/><circle cx="1068.5" cy="459.4" r="5.3"/><circle cx="1092.6" cy="454.9" r="5.3"/><circle cx="1075.1" cy="467.3" r="5.3"/><circle cx="1085.3" cy="470.8" r="5.3"/><circle cx="1067.9" cy="484.1" r="5.3"/><circle cx="1091.7" cy="479.5" r="5.3"/><circle cx="1074.4" cy="492.0" r="5.3"/><circle cx="1084.5" cy="495.5" r="5.3"/><circle cx="1067.3" cy="508.8" r="5.3"/><circle cx="1090.9" cy="504.0" r="5.3"/><circle cx="1073.7" cy="516.6" r="5.3"/><circle cx="1083.7" cy="520.1" r="5.3"/><circle cx="1066.7" cy="533.5" r="5.3"/><circle cx="1090.0" cy="528.6" r="5.3"/><circle cx="1073.0" cy="541.3" r="5.3"/><circle cx="1082.9" cy="544.7" r="5.3"/><circle cx="1066.1" cy="558.2" r="5.3"/><circle cx="1089.1" cy="553.1" r="5.3"/><circle cx="1072.3" cy="566.0" r="5.3"/><circle cx="1082.1" cy="569.3" r="5.3"/><circle cx="1065.4" cy="582.9" r="5.3"/><circle cx="1088.3" cy="577.7" r="5.3"/><circle cx="1071.6" cy="590.6" r="5.3"/><circle cx="1081.3" cy="593.9" r="5.3"/><circle cx="1064.8" cy="607.6" r="5.3"/><circle cx="1087.4" cy="602.2" r="5.3"/><circle cx="1071.0" cy="615.3" r="5.3"/><circle cx="1080.6" cy="618.5" r="5.3"/><circle cx="1064.2" cy="632.4" r="5.3"/><circle cx="1086.5" cy="626.8" r="5.3"/><circle cx="1070.3" cy="640.0" r="5.3"/><circle cx="1079.8" cy="643.1" r="5.3"/><circle cx="1063.6" cy="657.1" r="5.3"/><circle cx="1085.7" cy="651.3" r="5.3"/><circle cx="1069.6" cy="664.6" r="5.3"/><circle cx="1079.0" cy="667.7" r="5.3"/><circle cx="1063.0" cy="681.8" r="5.3"/><circle cx="1084.8" cy="675.9" r="5.3"/></g><polygon points="1109.7,382.0 1162.0,377.7 1146.0,676.0 1098.0,687.8" fill="#58ffb9" stroke="#58ffb9" stroke-width="3" stroke-linejoin="round"/><g fill="#777777"><polygon points="1112.3,382.8 1124.8,381.8 1124.4,392.1 1111.9,393.2"/><polygon points="1125.9,381.7 1159.3,378.9 1158.8,389.1 1125.4,392.0"/><polygon points="1111.8,395.5 1124.3,394.4 1123.8,404.8 1111.4,406.0"/><polygon points="1125.3,394.3 1158.7,391.4 1158.1,401.6 1124.9,404.7"/><polygon points="1111.3,408.3 1123.7,407.1 1123.3,417.4 1110.9,418.7"/><polygon points="1124.8,407.0 1158.0,403.8 1157.5,414.0 1124.3,417.3"/><polygon points="1110.8,421.0 1123.2,419.7 1122.8,430.1 1110.4,431.4"/><polygon points="1124.2,419.6 1157.4,416.2 1156.8,426.4 1123.8,430.0"/><polygon points="1110.3,433.7 1122.7,432.4 1122.2,442.7 1109.9,444.1"/><polygon points="1123.7,432.3 1156.7,428.7 1156.2,438.9 1123.3,442.6"/><polygon points="1109.8,446.4 1122.1,445.0 1121.7,455.4 1109.4,456.9"/><polygon points="1123.2,444.9 1156.0,441.1 1155.5,451.3 1122.7,455.3"/><polygon points="1109.3,459.2 1121.6,457.7 1121.1,468.0 1108.9,469.6"/><polygon points="1122.6,457.5 1155.4,453.6 1154.8,463.8 1122.2,467.9"/><polygon points="1108.8,471.9 1121.0,470.3 1120.6,480.7 1108.4,482.3"/><polygon points="1122.1,470.2 1154.7,466.0 1154.2,476.2 1121.6,480.6"/><polygon points="1108.3,484.6 1120.5,483.0 1120.1,493.3 1107.9,495.0"/><polygon points="1121.5,482.8 1154.1,478.5 1153.5,488.7 1121.1,493.2"/><polygon points="1107.8,497.3 1120.0,495.6 1119.5,506.0 1107.4,507.8"/><polygon points="1121.0,495.5 1153.4,490.9 1152.9,501.1 1120.5,505.9"/><polygon points="1107.3,510.1 1119.4,508.3 1119.0,518.6 1106.9,520.5"/><polygon points="1120.4,508.1 1152.8,503.4 1152.2,513.6 1120.0,518.5"/><polygon points="1106.8,522.8 1118.9,520.9 1118.4,531.3 1106.4,533.2"/><polygon points="1119.9,520.8 1152.1,515.8 1151.6,526.0 1119.5,531.1"/><polygon points="1106.3,535.5 1118.4,533.6 1117.9,544.0 1105.9,546.0"/><polygon points="1119.4,533.4 1151.4,528.2 1150.9,538.5 1118.9,543.8"/><polygon points="1105.8,548.2 1117.8,546.2 1117.4,556.6 1105.4,558.7"/><polygon points="1118.8,546.1 1150.8,540.7 1150.2,550.9 1118.4,556.4"/><polygon points="1105.3,561.0 1117.3,558.9 1116.8,569.3 1104.9,571.4"/><polygon points="1118.3,558.7 1150.1,553.1 1149.6,563.3 1117.8,569.1"/><polygon points="1104.8,573.7 1116.7,571.5 1116.3,581.9 1104.4,584.1"/><polygon points="1117.7,571.4 1149.5,565.6 1148.9,575.8 1117.3,581.7"/><polygon points="1104.3,586.4 1116.2,584.2 1115.8,594.6 1103.9,596.9"/><polygon points="1117.2,584.0 1148.8,578.0 1148.3,588.2 1116.7,594.4"/><polygon points="1103.8,599.1 1115.7,596.8 1115.2,607.2 1103.4,609.6"/><polygon points="1116.6,596.6 1148.2,590.5 1147.6,600.7 1116.2,607.0"/><polygon points="1103.3,611.9 1115.1,609.5 1114.7,619.9 1102.9,622.3"/><polygon points="1116.1,609.3 1147.5,602.9 1147.0,613.1 1115.6,619.7"/><polygon points="1102.8,624.6 1114.6,622.1 1114.1,632.5 1102.4,635.0"/><polygon points="1115.6,621.9 1146.8,615.4 1146.3,625.6 1115.1,632.3"/><polygon points="1102.3,637.3 1114.0,634.8 1113.6,645.2 1101.9,647.8"/><polygon points="1115.0,634.6 1146.2,627.8 1145.6,638.0 1114.6,644.9"/><polygon points="1101.8,650.0 1113.5,647.4 1113.1,657.8 1101.4,660.5"/><polygon points="1114.5,647.2 1145.5,640.3 1145.0,650.5 1114.0,657.6"/><polygon points="1101.4,662.8 1113.0,660.1 1112.5,670.5 1100.9,673.2"/><polygon points="1113.9,659.9 1144.9,652.7 1144.3,662.9 1113.5,670.2"/><polygon points="1100.9,675.5 1112.4,672.7 1112.0,683.1 1100.4,685.9"/><polygon points="1113.4,672.5 1144.2,665.1 1143.7,675.3 1112.9,682.9"/></g><g fill="#58ffb9" stroke="#000" stroke-width="1.6"><circle cx="1130.2" cy="388.8" r="5.2"/><circle cx="1140.5" cy="392.4" r="5.2"/><circle cx="1122.8" cy="405.1" r="5.2"/><circle cx="1146.8" cy="401.0" r="5.2"/><circle cx="1129.2" cy="413.0" r="5.2"/><circle cx="1139.3" cy="416.5" r="5.2"/><circle cx="1121.8" cy="429.4" r="5.2"/><circle cx="1145.6" cy="425.0" r="5.2"/><circle cx="1128.1" cy="437.2" r="5.2"/><circle cx="1138.2" cy="440.6" r="5.2"/><circle cx="1120.7" cy="453.7" r="5.2"/><circle cx="1144.4" cy="449.0" r="5.2"/><circle cx="1127.0" cy="461.4" r="5.2"/><circle cx="1137.0" cy="464.7" r="5.2"/><circle cx="1119.7" cy="478.0" r="5.2"/><circle cx="1143.2" cy="473.0" r="5.2"/><circle cx="1125.9" cy="485.7" r="5.2"/><circle cx="1135.9" cy="488.9" r="5.2"/><circle cx="1118.7" cy="502.3" r="5.2"/><circle cx="1142.0" cy="497.1" r="5.2"/><circle cx="1124.9" cy="509.9" r="5.2"/><circle cx="1134.8" cy="513.0" r="5.2"/><circle cx="1117.6" cy="526.7" r="5.2"/><circle cx="1140.9" cy="521.1" r="5.2"/><circle cx="1123.8" cy="534.1" r="5.2"/><circle cx="1133.6" cy="537.1" r="5.2"/><circle cx="1116.6" cy="551.0" r="5.2"/><circle cx="1139.7" cy="545.1" r="5.2"/><circle cx="1122.7" cy="558.3" r="5.2"/><circle cx="1132.5" cy="561.2" r="5.2"/><circle cx="1115.6" cy="575.3" r="5.2"/><circle cx="1138.5" cy="569.1" r="5.2"/><circle cx="1121.7" cy="582.6" r="5.2"/><circle cx="1131.3" cy="585.3" r="5.2"/><circle cx="1114.6" cy="599.6" r="5.2"/><circle cx="1137.3" cy="593.2" r="5.2"/><circle cx="1120.6" cy="606.8" r="5.2"/><circle cx="1130.2" cy="609.4" r="5.2"/><circle cx="1113.5" cy="623.9" r="5.2"/><circle cx="1136.1" cy="617.2" r="5.2"/><circle cx="1119.5" cy="631.0" r="5.2"/><circle cx="1129.0" cy="633.5" r="5.2"/><circle cx="1112.5" cy="648.2" r="5.2"/><circle cx="1134.9" cy="641.2" r="5.2"/><circle cx="1118.4" cy="655.2" r="5.2"/><circle cx="1127.9" cy="657.6" r="5.2"/><circle cx="1111.5" cy="672.5" r="5.2"/><circle cx="1133.7" cy="665.3" r="5.2"/></g><polygon points="1162.0,377.7 1214.5,373.0 1194.0,666.0 1146.0,676.0" fill="#58ffb9" stroke="#58ffb9" stroke-width="3" stroke-linejoin="round"/><g fill="#777777"><polygon points="1164.6,378.5 1177.2,377.3 1176.6,387.5 1164.0,388.6"/><polygon points="1178.2,377.2 1211.8,374.2 1211.1,384.2 1177.6,387.4"/><polygon points="1163.9,390.9 1176.4,389.7 1175.9,399.8 1163.3,401.1"/><polygon points="1177.5,389.6 1211.0,386.4 1210.3,396.5 1176.9,399.7"/><polygon points="1163.2,403.3 1175.7,402.1 1175.1,412.2 1162.7,413.5"/><polygon points="1176.8,402.0 1210.1,398.7 1209.4,408.7 1176.2,412.1"/><polygon points="1162.5,415.7 1175.0,414.4 1174.4,424.6 1162.0,425.9"/><polygon points="1176.0,414.3 1209.3,410.9 1208.6,420.9 1175.4,424.4"/><polygon points="1161.9,428.1 1174.3,426.8 1173.7,436.9 1161.3,438.3"/><polygon points="1175.3,426.7 1208.4,423.1 1207.7,433.1 1174.7,436.8"/><polygon points="1161.2,440.5 1173.6,439.2 1173.0,449.3 1160.6,450.7"/><polygon points="1174.6,439.0 1207.6,435.3 1206.9,445.3 1174.0,449.2"/><polygon points="1160.5,453.0 1172.8,451.5 1172.2,461.7 1160.0,463.2"/><polygon points="1173.9,451.4 1206.7,447.5 1206.0,457.5 1173.3,461.5"/><polygon points="1159.8,465.4 1172.1,463.9 1171.5,474.0 1159.3,475.6"/><polygon points="1173.1,463.8 1205.9,459.7 1205.2,469.8 1172.5,473.9"/><polygon points="1159.2,477.8 1171.4,476.2 1170.8,486.4 1158.6,488.0"/><polygon points="1172.4,476.1 1205.0,472.0 1204.4,482.0 1171.8,486.3"/><polygon points="1158.5,490.2 1170.7,488.6 1170.1,498.8 1157.9,500.4"/><polygon points="1171.7,488.5 1204.2,484.2 1203.5,494.2 1171.1,498.6"/><polygon points="1157.8,502.6 1170.0,501.0 1169.4,511.1 1157.3,512.8"/><polygon points="1171.0,500.8 1203.4,496.4 1202.7,506.4 1170.4,511.0"/><polygon points="1157.1,515.1 1169.2,513.3 1168.6,523.5 1156.6,525.2"/><polygon points="1170.2,513.2 1202.5,508.6 1201.8,518.6 1169.6,523.3"/><polygon points="1156.5,527.5 1168.5,525.7 1167.9,535.8 1155.9,537.7"/><polygon points="1169.5,525.6 1201.7,520.8 1201.0,530.9 1168.9,535.7"/><polygon points="1155.8,539.9 1167.8,538.1 1167.2,548.2 1155.2,550.1"/><polygon points="1168.8,537.9 1200.8,533.1 1200.1,543.1 1168.2,548.1"/><polygon points="1155.1,552.3 1167.1,550.4 1166.5,560.6 1154.6,562.5"/><polygon points="1168.1,550.3 1200.0,545.3 1199.3,555.3 1167.5,560.4"/><polygon points="1154.4,564.7 1166.4,562.8 1165.8,572.9 1153.9,574.9"/><polygon points="1167.3,562.6 1199.1,557.5 1198.4,567.5 1166.8,572.8"/><polygon points="1153.8,577.1 1165.6,575.2 1165.0,585.3 1153.2,587.3"/><polygon points="1166.6,575.0 1198.3,569.7 1197.6,579.7 1166.0,585.1"/><polygon points="1153.1,589.6 1164.9,587.5 1164.3,597.7 1152.5,599.7"/><polygon points="1165.9,587.4 1197.4,581.9 1196.8,592.0 1165.3,597.5"/><polygon points="1152.4,602.0 1164.2,599.9 1163.6,610.0 1151.8,612.2"/><polygon points="1165.2,599.7 1196.6,594.2 1195.9,604.2 1164.6,609.9"/><polygon points="1151.7,614.4 1163.5,612.3 1162.9,622.4 1151.2,624.6"/><polygon points="1164.4,612.1 1195.8,606.4 1195.1,616.4 1163.9,622.2"/><polygon points="1151.1,626.8 1162.7,624.6 1162.2,634.8 1150.5,637.0"/><polygon points="1163.7,624.4 1194.9,618.6 1194.2,628.6 1163.1,634.6"/><polygon points="1150.4,639.2 1162.0,637.0 1161.4,647.1 1149.8,649.4"/><polygon points="1163.0,636.8 1194.1,630.8 1193.4,640.8 1162.4,646.9"/><polygon points="1149.7,651.7 1161.3,649.4 1160.7,659.5 1149.1,661.8"/><polygon points="1162.3,649.2 1193.2,643.0 1192.5,653.1 1161.7,659.3"/><polygon points="1149.0,664.1 1160.6,661.7 1160.0,671.9 1148.5,674.3"/><polygon points="1161.5,661.5 1192.4,655.3 1191.7,665.3 1161.0,671.7"/></g><g fill="#58ffb9" stroke="#000" stroke-width="1.6"><circle cx="1182.5" cy="384.1" r="5.3"/><circle cx="1192.7" cy="387.6" r="5.3"/><circle cx="1174.8" cy="400.2" r="5.3"/><circle cx="1198.9" cy="395.9" r="5.3"/><circle cx="1181.1" cy="407.8" r="5.3"/><circle cx="1191.2" cy="411.2" r="5.3"/><circle cx="1173.4" cy="423.9" r="5.3"/><circle cx="1197.4" cy="419.5" r="5.3"/><circle cx="1179.7" cy="431.5" r="5.3"/><circle cx="1189.7" cy="434.8" r="5.3"/><circle cx="1172.0" cy="447.7" r="5.3"/><circle cx="1195.8" cy="443.0" r="5.3"/><circle cx="1178.2" cy="455.2" r="5.3"/><circle cx="1188.2" cy="458.5" r="5.3"/><circle cx="1170.7" cy="471.4" r="5.3"/><circle cx="1194.3" cy="466.6" r="5.3"/><circle cx="1176.8" cy="478.9" r="5.3"/><circle cx="1186.7" cy="482.1" r="5.3"/><circle cx="1169.3" cy="495.2" r="5.3"/><circle cx="1192.7" cy="490.2" r="5.3"/><circle cx="1175.4" cy="502.6" r="5.3"/><circle cx="1185.2" cy="505.7" r="5.3"/><circle cx="1167.9" cy="518.9" r="5.3"/><circle cx="1191.2" cy="513.7" r="5.3"/><circle cx="1174.0" cy="526.3" r="5.3"/><circle cx="1183.7" cy="529.3" r="5.3"/><circle cx="1166.5" cy="542.7" r="5.3"/><circle cx="1189.6" cy="537.3" r="5.3"/><circle cx="1172.5" cy="550.0" r="5.3"/><circle cx="1182.2" cy="552.9" r="5.3"/><circle cx="1165.2" cy="566.4" r="5.3"/><circle cx="1188.1" cy="560.8" r="5.3"/><circle cx="1171.1" cy="573.7" r="5.3"/><circle cx="1180.7" cy="576.5" r="5.3"/><circle cx="1163.8" cy="590.2" r="5.3"/><circle cx="1186.6" cy="584.4" r="5.3"/><circle cx="1169.7" cy="597.4" r="5.3"/><circle cx="1179.2" cy="600.1" r="5.3"/><circle cx="1162.4" cy="613.9" r="5.3"/><circle cx="1185.0" cy="607.9" r="5.3"/><circle cx="1168.3" cy="621.1" r="5.3"/><circle cx="1177.7" cy="623.7" r="5.3"/><circle cx="1161.0" cy="637.7" r="5.3"/><circle cx="1183.5" cy="631.5" r="5.3"/><circle cx="1166.8" cy="644.8" r="5.3"/><circle cx="1176.2" cy="647.3" r="5.3"/><circle cx="1159.6" cy="661.4" r="5.3"/><circle cx="1181.9" cy="655.0" r="5.3"/></g><polygon points="1214.5,373.0 1262.6,370.0 1236.4,657.0 1194.0,666.0" fill="#58ffb9" stroke="#58ffb9" stroke-width="3" stroke-linejoin="round"/><g fill="#777777"><polygon points="1216.8,373.8 1228.4,373.1 1227.6,383.1 1216.1,383.8"/><polygon points="1229.3,373.0 1260.1,371.1 1259.2,380.9 1228.6,383.0"/><polygon points="1216.0,386.0 1227.5,385.2 1226.7,395.2 1215.3,396.0"/><polygon points="1228.4,385.2 1259.0,383.1 1258.1,392.9 1227.6,395.1"/><polygon points="1215.1,398.2 1226.5,397.4 1225.8,407.3 1214.4,408.2"/><polygon points="1227.5,397.3 1257.9,395.0 1257.1,404.9 1226.7,407.2"/><polygon points="1214.2,410.4 1225.6,409.5 1224.8,419.5 1213.5,420.4"/><polygon points="1226.6,409.4 1256.9,407.0 1256.0,416.8 1225.8,419.4"/><polygon points="1213.4,422.6 1224.7,421.6 1223.9,431.6 1212.7,432.6"/><polygon points="1225.6,421.6 1255.8,419.0 1254.9,428.8 1224.9,431.5"/><polygon points="1212.5,434.8 1223.8,433.8 1223.0,443.7 1211.8,444.8"/><polygon points="1224.7,433.7 1254.7,431.0 1253.8,440.8 1223.9,443.6"/><polygon points="1211.6,447.0 1222.8,445.9 1222.1,455.9 1210.9,457.0"/><polygon points="1223.8,445.8 1253.6,442.9 1252.7,452.7 1223.0,455.8"/><polygon points="1210.8,459.2 1221.9,458.1 1221.2,468.0 1210.1,469.2"/><polygon points="1222.8,458.0 1252.6,454.9 1251.7,464.7 1222.1,467.9"/><polygon points="1209.9,471.4 1221.0,470.2 1220.2,480.1 1209.2,481.4"/><polygon points="1221.9,470.1 1251.5,466.9 1250.6,476.7 1221.2,480.0"/><polygon points="1209.0,483.6 1220.1,482.3 1219.3,492.3 1208.3,493.6"/><polygon points="1221.0,482.2 1250.4,478.8 1249.5,488.7 1220.2,492.2"/><polygon points="1208.2,495.8 1219.1,494.5 1218.4,504.4 1207.5,505.8"/><polygon points="1220.1,494.3 1249.3,490.8 1248.4,500.6 1219.3,504.3"/><polygon points="1207.3,508.0 1218.2,506.6 1217.5,516.5 1206.6,518.0"/><polygon points="1219.1,506.5 1248.2,502.8 1247.3,512.6 1218.4,516.4"/><polygon points="1206.4,520.2 1217.3,518.7 1216.5,528.7 1205.7,530.2"/><polygon points="1218.2,518.6 1247.2,514.8 1246.3,524.6 1217.4,528.6"/><polygon points="1205.6,532.4 1216.4,530.9 1215.6,540.8 1204.9,542.4"/><polygon points="1217.3,530.7 1246.1,526.7 1245.2,536.5 1216.5,540.7"/><polygon points="1204.7,544.6 1215.5,543.0 1214.7,553.0 1204.0,554.6"/><polygon points="1216.3,542.9 1245.0,538.7 1244.1,548.5 1215.6,552.8"/><polygon points="1203.8,556.8 1214.5,555.1 1213.8,565.1 1203.1,566.8"/><polygon points="1215.4,555.0 1243.9,550.7 1243.0,560.5 1214.7,565.0"/><polygon points="1203.0,569.0 1213.6,567.3 1212.8,577.2 1202.3,579.0"/><polygon points="1214.5,567.1 1242.8,562.6 1241.9,572.5 1213.7,577.1"/><polygon points="1202.1,581.2 1212.7,579.4 1211.9,589.4 1201.4,591.2"/><polygon points="1213.6,579.3 1241.8,574.6 1240.9,584.4 1212.8,589.2"/><polygon points="1201.2,593.4 1211.8,591.5 1211.0,601.5 1200.5,603.4"/><polygon points="1212.6,591.4 1240.7,586.6 1239.8,596.4 1211.9,601.3"/><polygon points="1200.4,605.5 1210.8,603.7 1210.1,613.6 1199.7,615.5"/><polygon points="1211.7,603.5 1239.6,598.6 1238.7,608.4 1210.9,613.5"/><polygon points="1199.5,617.7 1209.9,615.8 1209.2,625.8 1198.8,627.7"/><polygon points="1210.8,615.7 1238.5,610.5 1237.6,620.3 1210.0,625.6"/><polygon points="1198.6,629.9 1209.0,628.0 1208.2,637.9 1197.9,639.9"/><polygon points="1209.9,627.8 1237.4,622.5 1236.5,632.3 1209.1,637.7"/><polygon points="1197.8,642.1 1208.1,640.1 1207.3,650.0 1197.1,652.1"/><polygon points="1208.9,639.9 1236.4,634.5 1235.5,644.3 1208.2,649.9"/><polygon points="1196.9,654.3 1207.1,652.2 1206.4,662.2 1196.2,664.3"/><polygon points="1208.0,652.0 1235.3,646.4 1234.4,656.3 1207.2,662.0"/></g><g fill="#58ffb9" stroke="#000" stroke-width="1.6"><circle cx="1233.1" cy="379.9" r="5.1"/><circle cx="1242.3" cy="383.7" r="5.1"/><circle cx="1225.7" cy="395.5" r="5.1"/><circle cx="1247.8" cy="392.1" r="5.1"/><circle cx="1231.3" cy="403.2" r="5.1"/><circle cx="1240.4" cy="406.9" r="5.1"/><circle cx="1224.0" cy="418.8" r="5.1"/><circle cx="1245.8" cy="415.1" r="5.1"/><circle cx="1229.5" cy="426.4" r="5.1"/><circle cx="1238.5" cy="430.0" r="5.1"/><circle cx="1222.2" cy="442.1" r="5.1"/><circle cx="1243.9" cy="438.2" r="5.1"/><circle cx="1227.6" cy="449.7" r="5.1"/><circle cx="1236.6" cy="453.2" r="5.1"/><circle cx="1220.4" cy="465.4" r="5.1"/><circle cx="1241.9" cy="461.3" r="5.1"/><circle cx="1225.8" cy="472.9" r="5.1"/><circle cx="1234.7" cy="476.3" r="5.1"/><circle cx="1218.7" cy="488.7" r="5.1"/><circle cx="1239.9" cy="484.4" r="5.1"/><circle cx="1224.0" cy="496.2" r="5.1"/><circle cx="1232.8" cy="499.5" r="5.1"/><circle cx="1216.9" cy="512.1" r="5.1"/><circle cx="1237.9" cy="507.5" r="5.1"/><circle cx="1222.2" cy="519.4" r="5.1"/><circle cx="1230.8" cy="522.6" r="5.1"/><circle cx="1215.1" cy="535.4" r="5.1"/><circle cx="1236.0" cy="530.6" r="5.1"/><circle cx="1220.3" cy="542.7" r="5.1"/><circle cx="1228.9" cy="545.8" r="5.1"/><circle cx="1213.4" cy="558.7" r="5.1"/><circle cx="1234.0" cy="553.7" r="5.1"/><circle cx="1218.5" cy="565.9" r="5.1"/><circle cx="1227.0" cy="568.9" r="5.1"/><circle cx="1211.6" cy="582.0" r="5.1"/><circle cx="1232.0" cy="576.8" r="5.1"/><circle cx="1216.7" cy="589.2" r="5.1"/><circle cx="1225.1" cy="592.1" r="5.1"/><circle cx="1209.9" cy="605.3" r="5.1"/><circle cx="1230.0" cy="599.9" r="5.1"/><circle cx="1214.9" cy="612.4" r="5.1"/><circle cx="1223.2" cy="615.2" r="5.1"/><circle cx="1208.1" cy="628.6" r="5.1"/><circle cx="1228.1" cy="622.9" r="5.1"/><circle cx="1213.1" cy="635.7" r="5.1"/><circle cx="1221.3" cy="638.4" r="5.1"/><circle cx="1206.3" cy="651.9" r="5.1"/><circle cx="1226.1" cy="646.0" r="5.1"/></g><polygon points="1264.0,369.8 1307.7,367.5 1280.0,647.0 1236.0,655.8" fill="#58ffb9" stroke="#58ffb9" stroke-width="3" stroke-linejoin="round"/><g fill="#777777"><polygon points="1266.1,370.6 1276.6,370.1 1275.6,379.8 1265.1,380.4"/><polygon points="1277.5,370.0 1305.4,368.5 1304.5,378.1 1276.5,379.7"/><polygon points="1264.9,382.5 1275.4,381.9 1274.5,391.6 1264.0,392.3"/><polygon points="1276.3,381.9 1304.3,380.2 1303.3,389.8 1275.3,391.6"/><polygon points="1263.8,394.4 1274.3,393.8 1273.3,403.5 1262.8,404.2"/><polygon points="1275.1,393.7 1303.1,391.9 1302.2,401.4 1274.2,403.4"/><polygon points="1262.6,406.3 1273.1,405.6 1272.1,415.3 1261.6,416.1"/><polygon points="1274.0,405.5 1302.0,403.5 1301.0,413.1 1273.0,415.2"/><polygon points="1261.4,418.2 1271.9,417.4 1271.0,427.1 1260.5,428.0"/><polygon points="1272.8,417.4 1300.8,415.2 1299.9,424.7 1271.8,427.1"/><polygon points="1260.3,430.2 1270.8,429.3 1269.8,439.0 1259.3,439.9"/><polygon points="1271.6,429.2 1299.6,426.8 1298.7,436.4 1270.7,438.9"/><polygon points="1259.1,442.1 1269.6,441.1 1268.6,450.8 1258.1,451.8"/><polygon points="1270.5,441.0 1298.5,438.5 1297.5,448.1 1269.5,450.7"/><polygon points="1257.9,454.0 1268.4,452.9 1267.5,462.7 1257.0,463.7"/><polygon points="1269.3,452.9 1297.3,450.2 1296.4,459.7 1268.4,462.6"/><polygon points="1256.8,465.9 1267.3,464.8 1266.3,474.5 1255.8,475.6"/><polygon points="1268.2,464.7 1296.2,461.8 1295.2,471.4 1267.2,474.4"/><polygon points="1255.6,477.8 1266.1,476.6 1265.2,486.3 1254.6,487.5"/><polygon points="1267.0,476.5 1295.0,473.5 1294.1,483.0 1266.0,486.2"/><polygon points="1254.4,489.7 1264.9,488.5 1264.0,498.2 1253.5,499.4"/><polygon points="1265.8,488.4 1293.9,485.1 1292.9,494.7 1264.9,498.1"/><polygon points="1253.3,501.6 1263.8,500.3 1262.8,510.0 1252.3,511.3"/><polygon points="1264.7,500.2 1292.7,496.8 1291.8,506.4 1263.7,509.9"/><polygon points="1252.1,513.5 1262.6,512.1 1261.7,521.8 1251.1,523.2"/><polygon points="1263.5,512.0 1291.6,508.5 1290.6,518.0 1262.5,521.7"/><polygon points="1250.9,525.4 1261.5,524.0 1260.5,533.7 1250.0,535.1"/><polygon points="1262.3,523.9 1290.4,520.1 1289.5,529.7 1261.4,533.6"/><polygon points="1249.8,537.3 1260.3,535.8 1259.3,545.5 1248.8,547.0"/><polygon points="1261.2,535.7 1289.3,531.8 1288.3,541.3 1260.2,545.4"/><polygon points="1248.6,549.2 1259.1,547.7 1258.2,557.4 1247.6,558.9"/><polygon points="1260.0,547.5 1288.1,543.4 1287.2,553.0 1259.1,557.2"/><polygon points="1247.4,561.1 1258.0,559.5 1257.0,569.2 1246.5,570.8"/><polygon points="1258.8,559.4 1286.9,555.1 1286.0,564.7 1257.9,569.1"/><polygon points="1246.3,573.0 1256.8,571.3 1255.9,581.0 1245.3,582.8"/><polygon points="1257.7,571.2 1285.8,566.8 1284.8,576.3 1256.7,580.9"/><polygon points="1245.1,584.9 1255.6,583.2 1254.7,592.9 1244.1,594.7"/><polygon points="1256.5,583.0 1284.6,578.4 1283.7,588.0 1255.6,592.7"/><polygon points="1243.9,596.8 1254.5,595.0 1253.5,604.7 1243.0,606.6"/><polygon points="1255.4,594.9 1283.5,590.1 1282.5,599.6 1254.4,604.6"/><polygon points="1242.8,608.7 1253.3,606.8 1252.4,616.5 1241.8,618.5"/><polygon points="1254.2,606.7 1282.3,601.7 1281.4,611.3 1253.2,616.4"/><polygon points="1241.6,620.6 1252.2,618.7 1251.2,628.4 1240.6,630.4"/><polygon points="1253.0,618.5 1281.2,613.4 1280.2,623.0 1252.1,628.2"/><polygon points="1240.4,632.5 1251.0,630.5 1250.0,640.2 1239.5,642.3"/><polygon points="1251.9,630.4 1280.0,625.1 1279.1,634.6 1250.9,640.1"/><polygon points="1239.3,644.4 1249.8,642.4 1248.9,652.1 1238.3,654.2"/><polygon points="1250.7,642.2 1278.9,636.7 1277.9,646.3 1249.8,651.9"/></g><g fill="#58ffb9" stroke="#000" stroke-width="1.6"><circle cx="1280.7" cy="376.8" r="4.9"/><circle cx="1289.0" cy="380.6" r="4.9"/><circle cx="1273.6" cy="391.9" r="4.9"/><circle cx="1293.9" cy="388.8" r="4.9"/><circle cx="1278.5" cy="399.5" r="4.9"/><circle cx="1286.8" cy="403.2" r="4.9"/><circle cx="1271.3" cy="414.7" r="4.9"/><circle cx="1291.6" cy="411.3" r="4.9"/><circle cx="1276.2" cy="422.2" r="4.9"/><circle cx="1284.6" cy="425.7" r="4.9"/><circle cx="1269.1" cy="437.4" r="4.9"/><circle cx="1289.4" cy="433.8" r="4.9"/><circle cx="1274.0" cy="444.8" r="4.9"/><circle cx="1282.3" cy="448.3" r="4.9"/><circle cx="1266.9" cy="460.1" r="4.9"/><circle cx="1287.2" cy="456.3" r="4.9"/><circle cx="1271.8" cy="467.5" r="4.9"/><circle cx="1280.1" cy="470.9" r="4.9"/><circle cx="1264.6" cy="482.9" r="4.9"/><circle cx="1285.0" cy="478.8" r="4.9"/><circle cx="1269.5" cy="490.2" r="4.9"/><circle cx="1277.9" cy="493.4" r="4.9"/><circle cx="1262.4" cy="505.6" r="4.9"/><circle cx="1282.7" cy="501.3" r="4.9"/><circle cx="1267.3" cy="512.8" r="4.9"/><circle cx="1275.7" cy="516.0" r="4.9"/><circle cx="1260.2" cy="528.4" r="4.9"/><circle cx="1280.5" cy="523.8" r="4.9"/><circle cx="1265.1" cy="535.5" r="4.9"/><circle cx="1273.4" cy="538.6" r="4.9"/><circle cx="1257.9" cy="551.1" r="4.9"/><circle cx="1278.3" cy="546.3" r="4.9"/><circle cx="1262.9" cy="558.2" r="4.9"/><circle cx="1271.2" cy="561.2" r="4.9"/><circle cx="1255.7" cy="573.8" r="4.9"/><circle cx="1276.1" cy="568.8" r="4.9"/><circle cx="1260.6" cy="580.9" r="4.9"/><circle cx="1269.0" cy="583.7" r="4.9"/><circle cx="1253.5" cy="596.6" r="4.9"/><circle cx="1273.9" cy="591.3" r="4.9"/><circle cx="1258.4" cy="603.5" r="4.9"/><circle cx="1266.8" cy="606.3" r="4.9"/><circle cx="1251.2" cy="619.3" r="4.9"/><circle cx="1271.6" cy="613.8" r="4.9"/><circle cx="1256.2" cy="626.2" r="4.9"/><circle cx="1264.5" cy="628.9" r="4.9"/><circle cx="1249.0" cy="642.1" r="4.9"/><circle cx="1269.4" cy="636.3" r="4.9"/></g><polygon points="1307.7,366.0 1354.3,368.0 1319.4,639.7 1280.0,645.6" fill="#58ffb9" stroke="#58ffb9" stroke-width="3" stroke-linejoin="round"/><g fill="#777777"><polygon points="1309.9,367.0 1321.1,367.5 1320.1,377.0 1309.0,376.6"/><polygon points="1322.0,367.5 1351.9,368.8 1350.7,378.1 1321.0,377.0"/><polygon points="1308.8,378.7 1319.9,379.1 1318.9,388.5 1307.8,388.2"/><polygon points="1320.8,379.1 1350.4,380.1 1349.2,389.4 1319.8,388.6"/><polygon points="1307.6,390.3 1318.6,390.6 1317.6,400.1 1306.6,399.8"/><polygon points="1319.6,390.6 1349.0,391.5 1347.8,400.8 1318.5,400.1"/><polygon points="1306.4,401.9 1317.4,402.2 1316.4,411.6 1305.5,411.5"/><polygon points="1318.3,402.2 1347.5,402.8 1346.4,412.1 1317.3,411.7"/><polygon points="1305.3,413.6 1316.2,413.7 1315.1,423.2 1304.3,423.1"/><polygon points="1317.1,413.7 1346.1,414.2 1344.9,423.5 1316.0,423.2"/><polygon points="1304.1,425.2 1314.9,425.3 1313.9,434.8 1303.1,434.7"/><polygon points="1315.8,425.3 1344.7,425.5 1343.5,434.8 1314.8,434.8"/><polygon points="1302.9,436.8 1313.7,436.8 1312.6,446.3 1302.0,446.4"/><polygon points="1314.6,436.8 1343.2,436.8 1342.0,446.1 1313.5,446.3"/><polygon points="1301.8,448.5 1312.4,448.4 1311.4,457.9 1300.8,458.0"/><polygon points="1313.3,448.4 1341.8,448.2 1340.6,457.5 1312.3,457.8"/><polygon points="1300.6,460.1 1311.2,459.9 1310.2,469.4 1299.6,469.6"/><polygon points="1312.1,459.9 1340.3,459.5 1339.2,468.8 1311.0,469.4"/><polygon points="1299.4,471.7 1309.9,471.5 1308.9,481.0 1298.5,481.3"/><polygon points="1310.8,471.5 1338.9,470.8 1337.7,480.1 1309.8,480.9"/><polygon points="1298.2,483.4 1308.7,483.0 1307.7,492.5 1297.3,492.9"/><polygon points="1309.6,483.0 1337.5,482.2 1336.3,491.5 1308.6,492.5"/><polygon points="1297.1,495.0 1307.5,494.6 1306.4,504.1 1296.1,504.5"/><polygon points="1308.3,494.6 1336.0,493.5 1334.8,502.8 1307.3,504.0"/><polygon points="1295.9,506.6 1306.2,506.2 1305.2,515.6 1294.9,516.2"/><polygon points="1307.1,506.1 1334.6,504.9 1333.4,514.2 1306.1,515.6"/><polygon points="1294.7,518.3 1305.0,517.7 1304.0,527.2 1293.8,527.8"/><polygon points="1305.8,517.7 1333.1,516.2 1332.0,525.5 1304.8,527.1"/><polygon points="1293.6,529.9 1303.7,529.3 1302.7,538.7 1292.6,539.4"/><polygon points="1304.6,529.2 1331.7,527.5 1330.5,536.8 1303.6,538.7"/><polygon points="1292.4,541.5 1302.5,540.8 1301.5,550.3 1291.4,551.1"/><polygon points="1303.3,540.8 1330.3,538.9 1329.1,548.2 1302.3,550.2"/><polygon points="1291.2,553.2 1301.3,552.4 1300.2,561.9 1290.3,562.7"/><polygon points="1302.1,552.3 1328.8,550.2 1327.6,559.5 1301.1,561.8"/><polygon points="1290.1,564.8 1300.0,563.9 1299.0,573.4 1289.1,574.3"/><polygon points="1300.8,563.9 1327.4,561.5 1326.2,570.8 1299.8,573.3"/><polygon points="1288.9,576.4 1298.8,575.5 1297.8,585.0 1287.9,586.0"/><polygon points="1299.6,575.4 1325.9,572.9 1324.8,582.2 1298.6,584.9"/><polygon points="1287.7,588.1 1297.5,587.0 1296.5,596.5 1286.8,597.6"/><polygon points="1298.4,587.0 1324.5,584.2 1323.3,593.5 1297.3,596.4"/><polygon points="1286.6,599.7 1296.3,598.6 1295.3,608.1 1285.6,609.2"/><polygon points="1297.1,598.5 1323.1,595.6 1321.9,604.8 1296.1,608.0"/><polygon points="1285.4,611.3 1295.1,610.1 1294.0,619.6 1284.4,620.9"/><polygon points="1295.9,610.1 1321.6,606.9 1320.5,616.2 1294.8,619.5"/><polygon points="1284.2,623.0 1293.8,621.7 1292.8,631.2 1283.3,632.5"/><polygon points="1294.6,621.6 1320.2,618.2 1319.0,627.5 1293.6,631.1"/><polygon points="1283.0,634.6 1292.6,633.3 1291.6,642.7 1282.1,644.1"/><polygon points="1293.4,633.1 1318.8,629.6 1317.6,638.9 1292.3,642.6"/></g><g fill="#58ffb9" stroke="#000" stroke-width="1.6"><circle cx="1325.5" cy="374.5" r="5.0"/><circle cx="1334.3" cy="379.1" r="5.0"/><circle cx="1317.9" cy="388.7" r="5.0"/><circle cx="1339.3" cy="387.6" r="5.0"/><circle cx="1323.0" cy="396.7" r="5.0"/><circle cx="1331.7" cy="401.1" r="5.0"/><circle cx="1315.5" cy="410.9" r="5.0"/><circle cx="1336.7" cy="409.5" r="5.0"/><circle cx="1320.6" cy="418.8" r="5.0"/><circle cx="1329.2" cy="423.1" r="5.0"/><circle cx="1313.2" cy="433.1" r="5.0"/><circle cx="1334.0" cy="431.4" r="5.0"/><circle cx="1318.1" cy="440.9" r="5.0"/><circle cx="1326.6" cy="445.0" r="5.0"/><circle cx="1310.8" cy="455.3" r="5.0"/><circle cx="1331.4" cy="453.3" r="5.0"/><circle cx="1315.7" cy="463.0" r="5.0"/><circle cx="1324.0" cy="467.0" r="5.0"/><circle cx="1308.4" cy="477.5" r="5.0"/><circle cx="1328.7" cy="475.2" r="5.0"/><circle cx="1313.3" cy="485.1" r="5.0"/><circle cx="1321.5" cy="489.0" r="5.0"/><circle cx="1306.1" cy="499.7" r="5.0"/><circle cx="1326.1" cy="497.1" r="5.0"/><circle cx="1310.8" cy="507.2" r="5.0"/><circle cx="1318.9" cy="511.0" r="5.0"/><circle cx="1303.7" cy="521.9" r="5.0"/><circle cx="1323.5" cy="519.1" r="5.0"/><circle cx="1308.4" cy="529.3" r="5.0"/><circle cx="1316.3" cy="533.0" r="5.0"/><circle cx="1301.3" cy="544.1" r="5.0"/><circle cx="1320.8" cy="541.0" r="5.0"/><circle cx="1305.9" cy="551.5" r="5.0"/><circle cx="1313.8" cy="555.0" r="5.0"/><circle cx="1298.9" cy="566.3" r="5.0"/><circle cx="1318.2" cy="562.9" r="5.0"/><circle cx="1303.5" cy="573.6" r="5.0"/><circle cx="1311.2" cy="577.0" r="5.0"/><circle cx="1296.6" cy="588.5" r="5.0"/><circle cx="1315.6" cy="584.8" r="5.0"/><circle cx="1301.0" cy="595.7" r="5.0"/><circle cx="1308.7" cy="599.0" r="5.0"/><circle cx="1294.2" cy="610.7" r="5.0"/><circle cx="1312.9" cy="606.7" r="5.0"/><circle cx="1298.6" cy="617.8" r="5.0"/><circle cx="1306.1" cy="621.0" r="5.0"/><circle cx="1291.8" cy="632.9" r="5.0"/><circle cx="1310.3" cy="628.6" r="5.0"/></g>
<g>
<line x1="234" y1="868" x2="292" y2="853" stroke="#000" stroke-width="1.5"/>
<line x1="258" y1="840" x2="268" y2="885" stroke="#000" stroke-width="1.5"/>
<circle cx="263" cy="860" r="13" fill="none" stroke="#fff" stroke-width="2.5" stroke-dasharray="6 5"/>
<circle cx="263" cy="860" r="13" fill="none" stroke="#e02020" stroke-width="2.5" stroke-dasharray="5 6" stroke-dashoffset="5.5"/>
</g>

</g>
</svg><!-- VIEWPORT HEADER ROW 1 -->
<svg class="ic" style="left:10px;top:52px" width="10" height="22"><g fill="#555"><circle cx="2" cy="3" r="1.2"/><circle cx="7" cy="3" r="1.2"/><circle cx="2" cy="9" r="1.2"/><circle cx="7" cy="9" r="1.2"/><circle cx="2" cy="15" r="1.2"/><circle cx="7" cy="15" r="1.2"/><circle cx="2" cy="21" r="1.2"/><circle cx="7" cy="21" r="1.2"/></g></svg>
<div class="pill" style="left:28px;top:46px;width:48px;height:31px"></div>
<svg class="ic" style="left:34px;top:50px" width="40" height="24"><g stroke="#ddd" stroke-width="1.8" fill="none"><path d="M2 17h18M5 12h7M7 11L4 23M16 14l2 9"/><path d="M27 9l5 5 5-5"/></g><circle cx="16.5" cy="7.5" r="5.5" fill="#e8e8e8"/></svg>
<div class="pill" style="left:84px;top:46px;width:137px;height:31px"></div>
<svg class="ic" style="left:91px;top:51px" width="24" height="22"><g stroke="#bbb" stroke-width="1.5" fill="none"><path d="M1 6V1h5M17 1h5v5M22 16v5h-5M6 21H1v-5"/></g><rect x="6" y="5" width="11" height="12" fill="#eee"/></svg>
<div class="t" style="left:123px;top:51px;color:#e6e6e6"><span class="k">物体模式</span></div>
<svg class="ic" style="left:203px;top:57px" width="12" height="8"><path d="M1 1l5 5 5-5" stroke="#ddd" stroke-width="1.8" fill="none"/></svg>
<div class="btn" style="left:230px;top:48px;width:54px;height:27px"></div><div class="t" style="left:240px;top:51px;color:#e6e6e6"><span class="k">视图</span></div>
<div class="btn" style="left:288px;top:48px;width:54px;height:27px"></div><div class="t" style="left:298px;top:51px;color:#e6e6e6"><span class="k">选择</span></div>
<div class="btn" style="left:346px;top:48px;width:54px;height:27px"></div><div class="t" style="left:356px;top:51px;color:#e6e6e6"><span class="k">添加</span></div>
<div class="btn" style="left:404px;top:48px;width:54px;height:27px"></div><div class="t" style="left:414px;top:51px;color:#e6e6e6"><span class="k">物体</span></div>
<!-- transform orientation etc -->
<div class="pill" style="left:687px;top:46px;width:97px;height:31px"></div>
<svg class="ic" style="left:693px;top:50px" width="24" height="24"><g stroke="#ddd" stroke-width="1.8" fill="none"><path d="M4 2v18h18M4 20L14 10M1 5l3-3 3 3M19 17l3 3-3 3"/></g></svg>
<div class="t" style="left:726px;top:51px;color:#e6e6e6"><span class="k">全局</span></div>
<svg class="ic" style="left:766px;top:57px" width="12" height="8"><path d="M1 1l5 5 5-5" stroke="#ddd" stroke-width="1.8" fill="none"/></svg>
<div class="pill" style="left:791px;top:46px;width:48px;height:31px"></div>
<svg class="ic" style="left:796px;top:51px" width="40" height="22"><g stroke="#ddd" stroke-width="2" fill="none"><circle cx="8" cy="14" r="5.5"/><circle cx="15" cy="8" r="5.5"/><path d="M29 7l5 5 5-5" transform="translate(-3,0)"/></g></svg>
<div class="pill" style="left:848px;top:46px;width:76px;height:31px"></div>
<div class="a" style="left:848px;top:48px;width:26px;height:27px;background:#262626;border-radius:5px 0 0 5px"></div>
<svg class="ic" style="left:850px;top:51px" width="70" height="22"><g stroke="#9a9a9a" stroke-width="2" fill="none"><path d="M6 18C2 14 3 4 10 4s8 7 4 10l-2 2"/></g><g stroke="#ddd" stroke-width="2" fill="none"><path d="M28 12v7M34 12v7M40 12v7M28 16h13"/></g><rect x="40" y="3" width="5" height="5" fill="#eee"/><path d="M55 7l5 5 5-5" stroke="#ddd" stroke-width="1.8" fill="none"/></svg>
<div class="pill" style="left:934px;top:46px;width:76px;height:31px"></div>
<svg class="ic" style="left:936px;top:50px" width="70" height="24"><circle cx="12" cy="12" r="9" stroke="#777" stroke-width="2" fill="none"/><circle cx="12" cy="12" r="3.3" fill="#aaa"/><path d="M35 21c3-2 4-17 8-17s5 15 8 17" stroke="#666" stroke-width="1.8" fill="none"/><path d="M59 9l5 5 5-5" stroke="#555" stroke-width="1.6" fill="none"/></svg>
<!-- right header -->
<div class="pill" style="left:1336px;top:46px;width:50px;height:31px"></div>
<svg class="ic" style="left:1338px;top:50px" width="46" height="24"><path d="M3 9c3-5 10-5 13 0-3 5-10 5-13 0z" stroke="#ddd" stroke-width="1.8" fill="none"/><circle cx="9.5" cy="9" r="2.5" fill="#ddd"/><path d="M2 12l6 11 2-5 5-1z" fill="#ddd"/><path d="M30 9l5 5 5-5" stroke="#ddd" stroke-width="1.8" fill="none"/></svg>
<div class="pill" style="left:1390px;top:46px;width:60px;height:31px"></div>
<div class="a" style="left:1392px;top:47px;width:29px;height:29px;background:#6c4fbf;border-radius:5px 0 0 5px"></div>
<svg class="ic" style="left:1395px;top:50px" width="52" height="24"><g stroke="#eee" stroke-width="1.8" fill="none"><path d="M3 20C5 12 10 8 18 6M12 4l6 2-3 6"/><circle cx="5" cy="19" r="2.5"/></g><path d="M37 9l5 5 5-5" stroke="#ddd" stroke-width="1.8" fill="none"/></svg>
<div class="pill" style="left:1459px;top:46px;width:60px;height:31px"></div>
<div class="a" style="left:1461px;top:47px;width:29px;height:29px;background:#6c4fbf;border-radius:5px 0 0 5px"></div>
<svg class="ic" style="left:1463px;top:50px" width="52" height="24"><g stroke="#eee" stroke-width="2" fill="none"><circle cx="9" cy="14" r="6"/><circle cx="15" cy="9" r="6"/></g><path d="M12 3a6 6 0 0 1 6 9" fill="#eee"/><path d="M37 9l5 5 5-5" stroke="#ddd" stroke-width="1.8" fill="none"/></svg>
<div class="pill" style="left:1528px;top:46px;width:34px;height:31px"></div>
<svg class="ic" style="left:1533px;top:51px" width="24" height="22"><g stroke="#ddd" stroke-width="1.8" fill="none"><rect x="2" y="7" width="14" height="13"/><path d="M7 7V2h14v13h-5"/></g></svg>
<div class="pill" style="left:1566px;top:46px;width:120px;height:31px;border-radius:6px"></div>
<div class="a" style="left:1597px;top:47px;width:29px;height:29px;background:#7d5ddc"></div>
<svg class="ic" style="left:1568px;top:50px" width="120" height="24"><g stroke="#ddd" stroke-width="1.6" fill="none"><circle cx="14" cy="12" r="9"/><ellipse cx="14" cy="12" rx="4" ry="9"/><path d="M5 12h18"/></g><circle cx="43" cy="12" r="9" fill="#eee" stroke="#fff"/><circle cx="72" cy="12" r="9" stroke="#ddd" stroke-width="1.6" fill="none"/><path d="M72 3a9 9 0 0 0 0 18z" fill="#ddd"/><circle cx="101" cy="12" r="9" stroke="#ddd" stroke-width="1.6" fill="none"/><path d="M95 15a7 7 0 0 0 10 3" stroke="#ddd" stroke-width="1.6" fill="none"/></svg>
<svg class="ic" style="left:1693px;top:57px" width="12" height="8"><path d="M1 1l5 5 5-5" stroke="#ddd" stroke-width="1.8" fill="none"/></svg>

<!-- HEADER ROW 2 -->
<div class="a" style="left:27px;top:87px;width:147px;height:31px;background:#2d2d2d;border-radius:7px"></div>
<div class="a" style="left:29px;top:89px;width:27px;height:27px;background:#7d5ddc;border-radius:5px 0 0 5px"></div>
<svg class="ic" style="left:29px;top:89px" width="145" height="27"><rect x="5" y="5" width="17" height="17" stroke="#fff" stroke-width="2" stroke-dasharray="3 2.5" fill="none"/><path d="M35 12h6V6h13v13h-6v6H35z" fill="#c3c3c3"/><path d="M62 12h6" stroke="#c3c3c3"/><path d="M68 6h13v13h-6v-7h-7z" fill="#c3c3c3"/><rect x="62" y="12" width="13" height="13" stroke="#c3c3c3" stroke-width="1.8" stroke-dasharray="3 2.5" fill="none"/><path fill-rule="evenodd" d="M94 12h6V6h13v13h-6v6H94zM100 12h7v7h-7z" fill="#c3c3c3"/><rect x="119" y="5" width="17" height="17" stroke="#c3c3c3" stroke-width="1.8" stroke-dasharray="3 2.5" fill="none"/><rect x="123" y="9" width="9" height="9" fill="#c3c3c3"/></svg>
<svg class="ic" style="left:427px;top:97px" width="14" height="9"><path d="M1 1l6 6 6-6" stroke="#ddd" stroke-width="1.8" fill="none"/></svg>
<svg class="ic" style="left:447px;top:89px" width="24" height="27"><defs><linearGradient id="hx" x1="0" y1="0" x2="1" y2="1"><stop offset="0" stop-color="#19b4ff"/><stop offset="0.45" stop-color="#2fd36a"/><stop offset="1" stop-color="#ff3a2a"/></linearGradient></defs><path d="M11 2l10 6v11l-10 6-10-6V8z" fill="url(#hx)"/></svg>
<div class="a" style="left:478px;top:87px;width:204px;height:31px;background:#2d2d2d;border-radius:7px"></div>
<div class="a" style="left:480px;top:89px;width:27px;height:27px;background:#7d5ddc;border-radius:5px 0 0 5px"></div>
<svg class="ic" style="left:480px;top:89px" width="200" height="27"><g stroke="#fff" stroke-width="1.6" fill="none"><path d="M4 9V4h5M18 4h5v5M23 18v5h-5M9 23H4v-5"/></g><rect x="8" y="8" width="11" height="11" fill="#fff"/>
<g stroke="#c3c3c3" stroke-width="1.8" fill="none"><circle cx="41" cy="13.5" r="9"/></g><path d="M41 4.5v9h9a9 9 0 0 0-9-9zM41 13.5v9a9 9 0 0 1-9-9z" fill="#c3c3c3"/>
<path d="M66 4.5l-5.5 13a2.5 2.5 0 0 0 2 3l8 1.5 1.5-6z" fill="#c3c3c3"/><circle cx="75.6" cy="18.5" r="5.6" stroke="#2d2d2d" stroke-width="2" fill="#2d2d2d"/><circle cx="75.6" cy="18.5" r="4.8" stroke="#c3c3c3" stroke-width="1.6" fill="none"/><circle cx="78.7" cy="6.5" r="2.9" fill="#c3c3c3"/>
<circle cx="100" cy="13.5" r="9" stroke="#c3c3c3" stroke-width="1.8" fill="none"/><path d="M94 9c2-2 5-3 7-2l-2 4 1 3-3 1zM100 15l5 1 1 4-3 3-2-3z" fill="#c3c3c3"/><path d="M90.2 24.2L110 3.9" stroke="#c3c3c3" stroke-width="1.8"/>
<g transform="translate(-10,0)"><path d="M138 13V3.5a2.6 2.6 0 0 1 5.2 0V13" stroke="#c3c3c3" stroke-width="1.7" fill="none"/><path d="M131 14h19v3h-19zM131 17v6h5l1-3 2 3h11v-6" stroke="#c3c3c3" stroke-width="1.7" fill="none" stroke-linejoin="round"/>
<rect x="160.5" y="2" width="11" height="8" rx="2.5" stroke="#c3c3c3" stroke-width="1.6" fill="#c3c3c3"/><rect x="157.5" y="14" width="11.5" height="8.5" rx="2.5" stroke="#c3c3c3" stroke-width="1.6" fill="#c3c3c3"/><path d="M161 7.5h9M159 19.5h9" stroke="#2d2d2d" stroke-width="1.2"/><path d="M174 4c3 0 3.5 2 3.5 5v3c0 3-0.5 5-3.5 5" stroke="#c3c3c3" stroke-width="1.5" fill="none"/>
</g><path d="M177 4h12M181 4v5M185 4v5M178 10h8a4 4 0 0 1 0 8h-6a3 3 0 0 0 0 6h10" stroke="#c3c3c3" stroke-width="1.8" fill="none"/></svg>
<div class="a" style="left:684px;top:87px;width:400px;height:31px;background:#1d1d1d;border-radius:0 7px 7px 0"></div>
<svg class="ic" style="left:690px;top:92px" width="22" height="22"><circle cx="8.5" cy="8.5" r="6.5" stroke="#ddd" stroke-width="1.8" fill="none"/><path d="M13 13l7 7" stroke="#ddd" stroke-width="2"/></svg>
<div class="t" style="left:722px;top:92px;color:#8a8a8a"><span class="k">搜索</span></div>
<div class="a" style="left:1087px;top:87px;width:28px;height:31px;background:#262626;border-radius:7px 0 0 7px"></div>
<svg class="ic" style="left:1090px;top:92px" width="180" height="24"><path d="M3 11c4 6 12 6 16 0" stroke="#ccc" stroke-width="1.6" fill="none"/><path d="M34 2h10v19l-5-5-5 5z" fill="#c8c8c8"/><path d="M62 4v14h9M62 10h7" stroke="#ddd" stroke-width="1.8" fill="none"/><rect x="62" y="2" width="7" height="4" fill="#ddd"/><rect x="68" y="7" width="8" height="5" fill="#ddd"/><rect x="68" y="14" width="8" height="5" fill="#ddd"/><path d="M83 9l4 4 4-4" stroke="#ddd" stroke-width="1.6" fill="none"/><path d="M109 3h20l-7 9v9l-4 2v-11z" fill="#cfcfcf"/><path d="M139 9l4 4 4-4" stroke="#ddd" stroke-width="1.6" fill="none"/><path d="M159 3c3 2 6 2 9 0 3 2 6 2 9 0v8c0 6-5 10-9 12-4-2-9-6-9-12z" fill="#cfcfcf"/><path d="M162 12l4 4 7-7" stroke="#1d1d1d" stroke-width="2.4" fill="none"/></svg>
<div class="pill" style="left:1644px;top:87px;width:72px;height:31px"></div>
<div class="t" style="left:1655px;top:92px;color:#e6e6e6"><span class="k">选项</span></div>
<svg class="ic" style="left:1700px;top:98px" width="12" height="8"><path d="M1 1l5 5 5-5" stroke="#ddd" stroke-width="1.8" fill="none"/></svg>

<!-- VIEW TEXT -->
<div class="t" style="left:101px;top:137px;color:#f0f0f0"><span class="k">用户透视</span></div>
<div class="t" style="left:101px;top:165px;color:#f0f0f0">(1) Collection</div><div class="a" style="left:210px;top:164px;width:1.6px;height:22px;background:#e0e0e0"></div><div class="t" style="left:219px;top:165px;color:#f0f0f0"><span class="k">立方体</span>.018</div>

<!-- TOOLBAR -->
<div class="a" style="left:15px;top:134px;width:59px;height:108px;background:#2a2a2a;border-radius:7px"></div>
<div class="a" style="left:17px;top:135px;width:55px;height:51px;background:#7d5ddc;border-radius:6px 6px 0 0"></div>
<svg class="ic" style="left:17px;top:135px" width="56" height="108"><rect x="12" y="12" width="32" height="29" stroke="#f5a623" stroke-width="2.2" stroke-dasharray="4.5 3.5" fill="none"/><path d="M23 18v16l4-4 3 6 2-1-3-6h6z" fill="#ddd"/><path d="M49 46l4-4v4z" fill="#bbb"/>
<circle cx="28" cy="79" r="15" stroke="#fff" stroke-width="2.5" fill="none"/><circle cx="28" cy="79" r="15" stroke="#b33" stroke-width="2.6" stroke-dasharray="8 5.7" fill="none"/><path d="M28 70v5M28 83v5M19 79h5M32 79h5" stroke="#ddd" stroke-width="1.6"/></svg>
<div class="a" style="left:15px;top:249px;width:59px;height:216px;background:#2a2a2a;border-radius:7px"></div>
<svg class="ic" style="left:15px;top:249px" width="59" height="216"><g stroke="#232323" stroke-width="1.2"><path d="M2 52.5h55M2 106.5h55M2 160h55"/></g>
<g fill="#e0e0e0"><path d="M29.9 9l5 7.3h-10zM29.9 45.5l5-7.3h-10zM12.2 27.2l7.2-5v10zM47.6 27.2l-7.2-5v10z"/></g><path d="M29.9 18.5v4M29.9 32v4M21 27.2h4M35 27.2h4" stroke="#e0e0e0" stroke-width="2.2"/>
<path d="M29.9 74.2l5.4 5.4-5.4 5.4-5.4-5.4z" fill="#aaa"/><path d="M19.5 72.5a13.6 13.6 0 0 1 23-2.5M40.3 86.7a13.6 13.6 0 0 1-23 2.5" stroke="#e0e0e0" stroke-width="1.8" fill="none"/><path d="M12.5 76.5h9l-4.5 8zM38.3 82.7h9l-4.5-8z" fill="#e0e0e0"/>
<rect x="17.6" y="121.2" width="24.8" height="24.4" stroke="#aaa" stroke-width="2" fill="none"/><rect x="16.3" y="133.9" width="14" height="13" fill="#e0e0e0"/><path d="M31.2 133l7-7.3" stroke="#e0e0e0" stroke-width="2"/><path d="M40 123.5l-1 7.5-6.5-6.5z" fill="#e0e0e0"/><path d="M51 158l4.5-4.5v4.5z" fill="#555"/>
<rect x="24" y="182.1" width="11.8" height="11.8" fill="#e0e0e0"/><path d="M20.5 176a15.4 15.4 0 0 1 18.8 0M45.3 178.6a15.4 15.4 0 0 1 0 18.8M39.3 200a15.4 15.4 0 0 1-18.8 0M14.5 197.4a15.4 15.4 0 0 1 0-18.8" stroke="#e0e0e0" stroke-width="1.8" fill="none"/><path d="M29.9 171.8l4.3 6h-8.6zM29.9 204.2l4.3-6h-8.6zM13.7 188l6-4.3v8.6zM46.1 188l-6-4.3v8.6z" fill="#e0e0e0"/></svg>
<div class="a" style="left:15px;top:472px;width:59px;height:107px;background:#2a2a2a;border-radius:7px"></div>
<svg class="ic" style="left:15px;top:472px" width="59" height="107"><path d="M16.5 33.5l17.5-19 4.5 4.2-17.5 19z" fill="#e0e0e0"/><path d="M14 38.5l2.3-5.3 4.3 4z" fill="#e0e0e0"/><path d="M35.3 13l2.2-2.3 4.5 4.2-2.2 2.3z" fill="#e0e0e0"/><path d="M16.2 39c4 2.5 8 2 12-2s9-4.5 13.5 0.5" stroke="#8fe0b8" stroke-width="2" fill="none"/><path d="M51 48l4.5-4.5v4.5z" fill="#555"/>
<path d="M24.6 91.5V74.5a17 17 0 0 1 17 17z" fill="#8fe0b8"/><path d="M24.6 72a19.5 19.5 0 0 1 19.5 19.5" stroke="#e0e0e0" stroke-width="1.5" fill="none"/><rect x="16.5" y="63" width="6.5" height="33" fill="#e0e0e0"/><rect x="16.5" y="91.5" width="31" height="5" fill="#e0e0e0"/><path d="M19.5 66h3.5M20 69h3M19.5 72h3.5M20 75h3M19.5 78h3.5M20 81h3M19.5 84h3.5M20 87h3M26 92v3M29 92v2.5M32 92v3M35 92v2.5M38 92v3M41 92v2.5M44 92v3" stroke="#2a2a2a" stroke-width="1"/></svg>
<div class="a" style="left:15px;top:587px;width:59px;height:107px;background:#2a2a2a;border-radius:7px"></div>
<svg class="ic" style="left:15px;top:587px" width="59" height="107"><path d="M16.5 13.7h11M22 8.2v11" stroke="#8fe0b8" stroke-width="3"/><path d="M19.5 42.5V23h20v19.5zM19.5 23l8-7h20l-8 7M47.5 16v19.5l-8 7" stroke="#8fe0b8" stroke-width="1.7" fill="none" stroke-linejoin="round"/><path d="M51 48l4.5-4.5v4.5z" fill="#555"/>
<path d="M19 95.9h21.3l7.3-7.5V67.5l-7.3 6M40.3 95.9V87.6" stroke="#8fe0b8" stroke-width="1.6" fill="none" stroke-linejoin="round"/><path d="M34 62.7h6.3v24.9H15.5v-9" stroke="#e0807a" stroke-width="2.6" fill="none"/><circle cx="16.2" cy="72" r="3.5" stroke="#eee" stroke-width="2" fill="#2a2a2a"/><circle cx="22.5" cy="65" r="3.5" stroke="#eee" stroke-width="2" fill="#2a2a2a"/><path d="M19.5 71.5l16.5 2.5M24 68.5l1.5 15" stroke="#eee" stroke-width="1.8"/><path d="M51 100l4.5-4.5v4.5z" fill="#555"/></svg>

<!-- NAV GIZMO -->
<svg class="ic" style="left:1590px;top:130px" width="130" height="130"><g>
<circle cx="40.5" cy="52.7" r="10.5" fill="#2a2440" stroke="#5a3fa8" stroke-width="2.5"/>
<circle cx="20" cy="74" r="11" fill="#1f3a33" stroke="#3fbf94" stroke-width="2.5"/>
<circle cx="63" cy="112" r="10.5" fill="#1b3440" stroke="#2a8ab0" stroke-width="2.5"/>
<path d="M63 66V22" stroke="#2aa8d8" stroke-width="3.5"/>
<path d="M63 66L105 59.5" stroke="#3fa88a" stroke-width="3.5"/>
<path d="M63 66L85.4 81.4" stroke="#7b4ed8" stroke-width="3.5"/>
<circle cx="63" cy="22" r="12" fill="#2aa8d8"/><text x="63" y="27.5" font-size="15" font-weight="bold" text-anchor="middle" fill="#133">Z</text>
<circle cx="105" cy="59.5" r="12" fill="#3fa88a"/><text x="105" y="65" font-size="15" font-weight="bold" text-anchor="middle" fill="#133">Y</text>
<circle cx="85.4" cy="81.4" r="12.5" fill="#8a55f0"/><text x="85.4" y="87" font-size="15" font-weight="bold" text-anchor="middle" fill="#223">X</text>
</g></svg>
<svg class="ic" style="left:1714px;top:162px" width="12" height="16"><path d="M9 2L3 8l6 6" stroke="#aaa" stroke-width="1.8" fill="none"/></svg>
<svg class="ic" style="left:1670px;top:254px" width="50" height="184"><g fill="#151515"><circle cx="24" cy="24" r="20"/><circle cx="24" cy="69" r="20"/><circle cx="24" cy="114" r="20"/><circle cx="24" cy="159" r="20"/></g>
<circle cx="21" cy="21" r="9.5" fill="#d6d6d6"/><path d="M28 28l6 6" stroke="#d6d6d6" stroke-width="3.5" stroke-linecap="round"/><path d="M21 16.5v9M16.5 21h9" stroke="#222" stroke-width="1.6"/>
<g stroke="#d6d6d6" stroke-width="3.2" stroke-linecap="round"><path d="M19.5 70l-1-11M23.5 69V56.5M27.5 69l1-11M31 71l2-9M17 75l-5-4"/></g><ellipse cx="24.5" cy="74" rx="8" ry="7" fill="#d6d6d6"/>
<path d="M14 108a5 5 0 0 1 9-4a6 6 0 0 1 11 2a5 5 0 0 1-5 5h-10a5 5 0 0 1-5-3z" stroke="#d6d6d6" stroke-width="1.8" fill="none"/><circle cx="18.5" cy="107" r="1.6" fill="#d6d6d6"/><circle cx="29" cy="105.5" r="1.6" fill="#d6d6d6"/><rect x="18" y="113.5" width="11" height="8" stroke="#d6d6d6" stroke-width="1.8" fill="none"/><path d="M31 117.5l6-4v8z M14 115.5v4M14 117.5h4" stroke="#d6d6d6" stroke-width="1.6" fill="none" stroke-linejoin="round"/>
<path d="M18 152h14l5 19H13zM15.5 158h19M14 165h22M22.5 152l-1.5 19M27.5 152l1.5 19" stroke="#d6d6d6" stroke-width="1.8" fill="none"/></svg>

<div class="a vborder"></div>
<!-- TOP BAR -->
<div id="top" class="a">
<div class="t" style="left:50px;top:9px;font-size:18px;color:#e6e6e6"><span class="k">文件</span></div>
<div class="t" style="left:107px;top:9px;font-size:18px;color:#e6e6e6"><span class="k">编辑</span></div>
<div class="t" style="left:165px;top:9px;font-size:18px;color:#e6e6e6"><span class="k">渲染</span></div>
<div class="t" style="left:223px;top:9px;font-size:18px;color:#e6e6e6"><span class="k">窗口</span></div>
<div class="t" style="left:281px;top:9px;font-size:18px;color:#e6e6e6"><span class="k">帮助</span></div>
<div class="a" style="left:337px;top:5px;width:2px;height:30px;background:#333"></div>
<div class="tab" style="left:350px;width:63px"><span class="k">布局</span></div>
<div class="tab on" style="left:417px;width:61px"><span class="k">建模</span></div>
<div class="tab" style="left:481px;width:62px"><span class="k">雕刻</span></div>
<div class="tab" style="left:546px;width:86px">UV<span class="k">编辑</span></div>
<div class="tab" style="left:634px;width:97px"><span class="k">纹理绘制</span></div>
<div class="tab" style="left:734px;width:62px"><span class="k">着色</span></div>
<div class="tab" style="left:798px;width:63px"><span class="k">动画</span></div>
<div class="tab" style="left:863px;width:63px"><span class="k">渲染</span></div>
<div class="tab" style="left:928px;width:63px"><span class="k">合成</span></div>
<div class="tab" style="left:993px;width:97px"><span class="k">几何节点</span></div>
<div class="tab" style="left:1092px;width:63px"><span class="k">脚本</span></div>
<div class="tab" style="left:1157px;width:30px;font-size:24px">+</div>
<svg class="ic" style="left:8px;top:9px" width="30" height="24"><path d="M2 16l9-7H7l8-6 9 8" stroke="#e6e6e6" stroke-width="3.2" fill="none" stroke-linecap="round" stroke-linejoin="round"/><circle cx="17" cy="15" r="7.5" fill="#e6e6e6"/><ellipse cx="17.5" cy="15" rx="3.3" ry="2.8" fill="#1e1e1e"/></svg>
<div class="a" style="left:1595px;top:5px;width:48px;height:30px;background:#1b1b1b;border-radius:15px 0 0 15px"></div>
<svg class="ic" style="left:1601px;top:9px" width="44" height="24"><path d="M7 4l-5 11a4.5 4.5 0 0 0 9 1z" fill="#e0e0e0"/><circle cx="12.5" cy="17" r="5" stroke="#e0e0e0" stroke-width="1.8" fill="#1b1b1b"/><circle cx="16" cy="5" r="3" fill="#e0e0e0"/><path d="M29 9l5 5 5-5" stroke="#ddd" stroke-width="1.8" fill="none"/></svg>
<div class="a" style="left:1643px;top:5px;width:154px;height:30px;background:#1b1b1b"></div>
<div class="t" style="left:1654px;top:10px;font-size:18px;color:#e6e6e6">Scene</div>
<svg class="ic" style="left:1768px;top:9px" width="24" height="24"><path d="M14 2l8 8-2 1-5 5 1 3-2 2-9-9 2-2 3 1 5-5z" stroke="#999" stroke-width="1.6" fill="none"/><path d="M8 16l-6 6" stroke="#999" stroke-width="1.6"/></svg>
<div class="a" style="left:1797px;top:5px;width:34px;height:30px;background:#262626"></div>
<svg class="ic" style="left:1801px;top:9px" width="24" height="24"><path d="M7 6H3v15h13v-3" stroke="#ddd" stroke-width="1.8" fill="none"/><path d="M7 2h9l5 5v11H7z" stroke="#ddd" stroke-width="1.8" fill="none"/><path d="M16 2v5h5" fill="#ddd"/></svg>
<div class="a" style="left:1831px;top:5px;width:30px;height:30px;background:#1d1d1d;border-radius:0 15px 15px 0"></div>
<svg class="ic" style="left:1838px;top:12px" width="16" height="16"><path d="M2 2l12 12M14 2L2 14" stroke="#555" stroke-width="1.6"/></svg>
<div class="a" style="left:1870px;top:5px;width:45px;height:30px;background:#1b1b1b;border-radius:15px 0 0 15px"></div>
<svg class="ic" style="left:1874px;top:9px" width="44" height="24"><path d="M6 6v15h15M3 9v15h15" stroke="#ddd" stroke-width="1.4" fill="none" transform="translate(1,-2)"/><rect x="9" y="2" width="15" height="15" fill="none" stroke="#ddd" stroke-width="1.6"/><path d="M10 16l5-8 4 5 3-3v6z" fill="#ddd"/><circle cx="19.5" cy="6" r="1.5" fill="#ddd"/><path d="M31 9l5 5 5-5" stroke="#ddd" stroke-width="1.8" fill="none"/></svg>
<div class="a" style="left:1915px;top:5px;width:124px;height:30px;background:#1b1b1b"></div>
<div class="t" style="left:1927px;top:10px;font-size:18px;color:#e6e6e6">ViewLayer</div>
<div class="a" style="left:2039px;top:5px;width:33px;height:30px;background:#262626"></div>
<svg class="ic" style="left:2044px;top:9px" width="24" height="24"><path d="M7 6H3v15h13v-3" stroke="#ddd" stroke-width="1.8" fill="none"/><path d="M7 2h9l5 5v11H7z" stroke="#ddd" stroke-width="1.8" fill="none"/></svg>
<svg class="ic" style="left:2081px;top:12px" width="16" height="16"><path d="M2 2l12 12M14 2L2 14" stroke="#555" stroke-width="1.6"/></svg>
<div class="a" style="left:2090px;top:-8px;width:30px;height:33px;background:#6a3fc0;border-radius:8px"></div>
<div class="a" style="left:2093px;top:-8px;width:30px;height:32px;background:#1a8cff;border-radius:8px"></div>
<svg class="ic" style="left:2096px;top:0px" width="12" height="18"><path d="M12 3a6 6 0 1 0 0 10" stroke="#fff" stroke-width="3" fill="none"/></svg>
</div>

<!-- OUTLINER -->
<div id="ol" class="a">
<svg class="ic" style="left:9px;top:12px" width="10" height="22"><g fill="#555"><circle cx="2" cy="3" r="1.2"/><circle cx="7" cy="3" r="1.2"/><circle cx="2" cy="9" r="1.2"/><circle cx="7" cy="9" r="1.2"/><circle cx="2" cy="15" r="1.2"/><circle cx="7" cy="15" r="1.2"/><circle cx="2" cy="21" r="1.2"/><circle cx="7" cy="21" r="1.2"/></g></svg>
<div class="pill" style="left:26px;top:5px;width:48px;height:31px"></div>
<svg class="ic" style="left:32px;top:11px" width="40" height="22"><g fill="#ddd"><rect x="3" y="1" width="8" height="5" rx="1"/><rect x="10" y="9" width="11" height="5" rx="1"/><rect x="10" y="16" width="11" height="5" rx="1"/></g><path d="M5 6v13h5M5 11h5" stroke="#ddd" stroke-width="1.4" fill="none"/><path d="M26 8l5 5 5-5" stroke="#ddd" stroke-width="1.8" fill="none"/></svg>
<div class="pill" style="left:80px;top:5px;width:48px;height:31px"></div>
<svg class="ic" style="left:86px;top:10px" width="40" height="24"><path d="M6 6v14h14M3 9v14h14" stroke="#ddd" stroke-width="1.4" fill="none"/><rect x="9" y="1" width="14" height="15" fill="none" stroke="#ddd" stroke-width="1.6"/><path d="M10 15l5-8 4 5 3-3v6z" fill="#ddd"/><circle cx="19" cy="5" r="1.5" fill="#ddd"/><path d="M27 9l5 5 5-5" stroke="#ddd" stroke-width="1.8" fill="none"/></svg>
<div class="pill" style="left:152px;top:5px;width:180px;height:31px;background:#1c1c1c"></div>
<svg class="ic" style="left:163px;top:11px" width="22" height="22"><circle cx="8.5" cy="8.5" r="6.5" stroke="#ddd" stroke-width="1.8" fill="none"/><path d="M13 13l7 7" stroke="#ddd" stroke-width="2"/></svg>
<div class="t" style="left:193px;top:11px;color:#8a8a8a"><span class="k">搜索</span></div>
<div class="pill" style="left:358px;top:5px;width:30px;height:31px"></div>
<svg class="ic" style="left:1734px" width="0" height="0"></svg>
<div class="row" style="top:41px;height:10px;border-radius:0 0 5px 5px"></div>
<div class="row" style="top:54px"></div>
<div class="row" style="top:85px"></div>
<div class="row" style="top:116px"></div>
<div class="row" style="top:147px"></div>
<div class="row" style="top:178px"></div>
<div class="row" style="top:209px;height:11px;border-radius:5px 5px 0 0"></div>
<div class="a" style="left:44px;top:41px;width:2px;height:179px;background:#5e5e5e"></div>
<div class="a" style="left:25px;top:211px;width:318px;height:3px;background:#4b3f86"></div>
<div class="a" style="left:362px;top:45px;width:4px;height:40px;background:#4b3f86;border-radius:2px"></div>
<div class="a" style="left:0;top:41px;width:374px;height:179px;overflow:hidden"><div class="a" style="left:0;top:-41px;width:374px;height:260px">
<svg class="ic" style="left:72px;top:60px" width="12" height="16"><path d="M3 2l6 6-6 6" stroke="#d0d0d0" stroke-width="1.6" fill="none"/></svg><svg class="ic" style="left:96px;top:57px" width="24" height="22"><path d="M2 2h20L12 21z" fill="#47c79c"/><path d="M8 6.5h8L12 14z" fill="#474747"/></svg><div class="t" style="left:131px;top:59px;font-size:18px;color:#cfcfcf"><span class="k">立方体</span>.007</div><svg class="ic" style="left:250px;top:56px" width="12" height="20"><rect x="2" y="1" width="5" height="5" fill="none" stroke="#3fc7a8" stroke-width="1.6"/><path d="M4 6l5 10" stroke="#3fc7a8" stroke-width="1.6"/></svg><svg class="ic" style="left:297px;top:60px" width="22" height="16"><path d="M1 8c5-8 15-8 20 0-5 8-15 8-20 0z" fill="#d6d6d6"/><circle cx="11" cy="8" r="3.6" fill="#474747"/><circle cx="11" cy="8" r="1.8" fill="#d6d6d6"/></svg><svg class="ic" style="left:328px;top:58px" width="22" height="20"><path d="M1 5h5l2-3h6l2 3h5v14H1z" fill="#d6d6d6"/><circle cx="11" cy="11" r="5" fill="#474747"/><circle cx="11" cy="11" r="3" fill="#d6d6d6"/></svg><svg class="ic" style="left:72px;top:91px" width="12" height="16"><path d="M3 2l6 6-6 6" stroke="#d0d0d0" stroke-width="1.6" fill="none"/></svg><svg class="ic" style="left:96px;top:88px" width="24" height="22"><path d="M2 2h20L12 21z" fill="#47c79c"/><path d="M8 6.5h8L12 14z" fill="#474747"/></svg><div class="t" style="left:131px;top:90px;font-size:18px;color:#cfcfcf"><span class="k">立方体</span>.008</div><svg class="ic" style="left:250px;top:87px" width="12" height="20"><rect x="2" y="1" width="5" height="5" fill="none" stroke="#3fc7a8" stroke-width="1.6"/><path d="M4 6l5 10" stroke="#3fc7a8" stroke-width="1.6"/></svg><svg class="ic" style="left:297px;top:91px" width="22" height="16"><path d="M1 8c5-8 15-8 20 0-5 8-15 8-20 0z" fill="#d6d6d6"/><circle cx="11" cy="8" r="3.6" fill="#474747"/><circle cx="11" cy="8" r="1.8" fill="#d6d6d6"/></svg><svg class="ic" style="left:328px;top:89px" width="22" height="20"><path d="M1 5h5l2-3h6l2 3h5v14H1z" fill="#d6d6d6"/><circle cx="11" cy="11" r="5" fill="#474747"/><circle cx="11" cy="11" r="3" fill="#d6d6d6"/></svg><svg class="ic" style="left:72px;top:122px" width="12" height="16"><path d="M3 2l6 6-6 6" stroke="#d0d0d0" stroke-width="1.6" fill="none"/></svg><svg class="ic" style="left:96px;top:119px" width="24" height="22"><path d="M2 2h20L12 21z" fill="#47c79c"/><path d="M8 6.5h8L12 14z" fill="#474747"/></svg><div class="t" style="left:131px;top:121px;font-size:18px;color:#cfcfcf"><span class="k">立方体</span>.009</div><svg class="ic" style="left:250px;top:118px" width="12" height="20"><rect x="2" y="1" width="5" height="5" fill="none" stroke="#3fc7a8" stroke-width="1.6"/><path d="M4 6l5 10" stroke="#3fc7a8" stroke-width="1.6"/></svg><svg class="ic" style="left:297px;top:122px" width="22" height="16"><path d="M1 8c5-8 15-8 20 0-5 8-15 8-20 0z" fill="#d6d6d6"/><circle cx="11" cy="8" r="3.6" fill="#474747"/><circle cx="11" cy="8" r="1.8" fill="#d6d6d6"/></svg><svg class="ic" style="left:328px;top:120px" width="22" height="20"><path d="M1 5h5l2-3h6l2 3h5v14H1z" fill="#d6d6d6"/><circle cx="11" cy="11" r="5" fill="#474747"/><circle cx="11" cy="11" r="3" fill="#d6d6d6"/></svg><svg class="ic" style="left:72px;top:153px" width="12" height="16"><path d="M3 2l6 6-6 6" stroke="#d0d0d0" stroke-width="1.6" fill="none"/></svg><svg class="ic" style="left:96px;top:150px" width="24" height="22"><path d="M2 2h20L12 21z" fill="#47c79c"/><path d="M8 6.5h8L12 14z" fill="#474747"/></svg><div class="t" style="left:131px;top:152px;font-size:18px;color:#cfcfcf"><span class="k">立方体</span>.010</div><svg class="ic" style="left:250px;top:149px" width="12" height="20"><rect x="2" y="1" width="5" height="5" fill="none" stroke="#3fc7a8" stroke-width="1.6"/><path d="M4 6l5 10" stroke="#3fc7a8" stroke-width="1.6"/></svg><svg class="ic" style="left:297px;top:153px" width="22" height="16"><path d="M1 8c5-8 15-8 20 0-5 8-15 8-20 0z" fill="#d6d6d6"/><circle cx="11" cy="8" r="3.6" fill="#474747"/><circle cx="11" cy="8" r="1.8" fill="#d6d6d6"/></svg><svg class="ic" style="left:328px;top:151px" width="22" height="20"><path d="M1 5h5l2-3h6l2 3h5v14H1z" fill="#d6d6d6"/><circle cx="11" cy="11" r="5" fill="#474747"/><circle cx="11" cy="11" r="3" fill="#d6d6d6"/></svg><svg class="ic" style="left:72px;top:184px" width="12" height="16"><path d="M3 2l6 6-6 6" stroke="#d0d0d0" stroke-width="1.6" fill="none"/></svg><svg class="ic" style="left:96px;top:181px" width="24" height="22"><path d="M2 2h20L12 21z" fill="#47c79c"/><path d="M8 6.5h8L12 14z" fill="#474747"/></svg><div class="t" style="left:131px;top:183px;font-size:18px;color:#cfcfcf"><span class="k">立方体</span>.011</div><svg class="ic" style="left:250px;top:180px" width="12" height="20"><rect x="2" y="1" width="5" height="5" fill="none" stroke="#3fc7a8" stroke-width="1.6"/><path d="M4 6l5 10" stroke="#3fc7a8" stroke-width="1.6"/></svg><svg class="ic" style="left:297px;top:184px" width="22" height="16"><path d="M1 8c5-8 15-8 20 0-5 8-15 8-20 0z" fill="#d6d6d6"/><circle cx="11" cy="8" r="3.6" fill="#474747"/><circle cx="11" cy="8" r="1.8" fill="#d6d6d6"/></svg><svg class="ic" style="left:328px;top:182px" width="22" height="20"><path d="M1 5h5l2-3h6l2 3h5v14H1z" fill="#d6d6d6"/><circle cx="11" cy="11" r="5" fill="#474747"/><circle cx="11" cy="11" r="3" fill="#d6d6d6"/></svg><svg class="ic" style="left:72px;top:29px" width="12" height="16"><path d="M3 2l6 6-6 6" stroke="#d0d0d0" stroke-width="1.6" fill="none"/></svg><svg class="ic" style="left:96px;top:26px" width="24" height="22"><path d="M2 2h20L12 21z" fill="#47c79c"/><path d="M8 6.5h8L12 14z" fill="#474747"/></svg><div class="t" style="left:131px;top:28px;font-size:18px;color:#cfcfcf"><span class="k">立方体</span>.006</div><svg class="ic" style="left:250px;top:25px" width="12" height="20"><rect x="2" y="1" width="5" height="5" fill="none" stroke="#3fc7a8" stroke-width="1.6"/><path d="M4 6l5 10" stroke="#3fc7a8" stroke-width="1.6"/></svg><svg class="ic" style="left:297px;top:29px" width="22" height="16"><path d="M1 8c5-8 15-8 20 0-5 8-15 8-20 0z" fill="#d6d6d6"/><circle cx="11" cy="8" r="3.6" fill="#474747"/><circle cx="11" cy="8" r="1.8" fill="#d6d6d6"/></svg><svg class="ic" style="left:328px;top:27px" width="22" height="20"><path d="M1 5h5l2-3h6l2 3h5v14H1z" fill="#d6d6d6"/><circle cx="11" cy="11" r="5" fill="#474747"/><circle cx="11" cy="11" r="3" fill="#d6d6d6"/></svg><svg class="ic" style="left:72px;top:215px" width="12" height="16"><path d="M3 2l6 6-6 6" stroke="#d0d0d0" stroke-width="1.6" fill="none"/></svg><svg class="ic" style="left:96px;top:212px" width="24" height="22"><path d="M2 2h20L12 21z" fill="#47c79c"/><path d="M8 6.5h8L12 14z" fill="#474747"/></svg><div class="t" style="left:131px;top:214px;font-size:18px;color:#cfcfcf"><span class="k">立方体</span>.012</div><svg class="ic" style="left:250px;top:211px" width="12" height="20"><rect x="2" y="1" width="5" height="5" fill="none" stroke="#3fc7a8" stroke-width="1.6"/><path d="M4 6l5 10" stroke="#3fc7a8" stroke-width="1.6"/></svg><svg class="ic" style="left:297px;top:215px" width="22" height="16"><path d="M1 8c5-8 15-8 20 0-5 8-15 8-20 0z" fill="#d6d6d6"/><circle cx="11" cy="8" r="3.6" fill="#474747"/><circle cx="11" cy="8" r="1.8" fill="#d6d6d6"/></svg><svg class="ic" style="left:328px;top:213px" width="22" height="20"><path d="M1 5h5l2-3h6l2 3h5v14H1z" fill="#d6d6d6"/><circle cx="11" cy="11" r="5" fill="#474747"/><circle cx="11" cy="11" r="3" fill="#d6d6d6"/></svg>
</div></div>
</div>
<!-- PROPERTIES -->
<div id="pr" class="a"></div>
<div class="a" style="left:1734px;top:305px;width:44px;height:931px;background:#1a1a1a"></div>
<svg class="ic" style="left:1743px;top:273px" width="10" height="22"><g fill="#555"><circle cx="2" cy="3" r="1.2"/><circle cx="7" cy="3" r="1.2"/><circle cx="2" cy="9" r="1.2"/><circle cx="7" cy="9" r="1.2"/><circle cx="2" cy="15" r="1.2"/><circle cx="7" cy="15" r="1.2"/><circle cx="2" cy="21" r="1.2"/><circle cx="7" cy="21" r="1.2"/></g></svg>
<div class="pill" style="left:1760px;top:269px;width:48px;height:31px"></div>
<svg class="ic" style="left:1765px;top:273px" width="40" height="24"><rect x="2" y="2" width="20" height="9" rx="4.5" fill="#e6e6e6"/><rect x="2" y="14" width="20" height="9" rx="4.5" fill="#e6e6e6"/><circle cx="17.5" cy="6.5" r="3" fill="#222"/><circle cx="17.5" cy="18.5" r="3" fill="#222"/><path d="M26 9l5 5 5-5" stroke="#ddd" stroke-width="1.8" fill="none"/></svg>
<div class="pill" style="left:1847px;top:269px;width:177px;height:31px;background:#1c1c1c"></div>
<svg class="ic" style="left:1853px;top:274px" width="22" height="22"><circle cx="8.5" cy="8.5" r="6.5" stroke="#ddd" stroke-width="1.8" fill="none"/><path d="M13 13l7 7" stroke="#ddd" stroke-width="2"/></svg>
<div class="t" style="left:1885px;top:274px;color:#8a8a8a"><span class="k">搜索</span></div>
<div class="pill" style="left:2062px;top:269px;width:30px;height:31px"></div>
<svg class="ic" style="left:2071px;top:281px" width="12" height="8"><path d="M1 1l5 5 5-5" stroke="#ddd" stroke-width="1.8" fill="none"/></svg>
<!-- tabs -->
<div class="a" style="left:1737px;top:317px;width:41px;height:42px;background:#262626;border-radius:7px 0 0 7px"></div>
<div class="a" style="left:1737px;top:372px;width:41px;height:171px;background:#262626;border-radius:7px 0 0 7px"></div>
<div class="a" style="left:1737px;top:545px;width:41px;height:42px;background:#262626;border-radius:7px 0 0 7px"></div>
<div class="a" style="left:1737px;top:599px;width:41px;height:42px;background:#262626;border-radius:7px 0 0 7px"></div>
<div class="a" style="left:1737px;top:654px;width:41px;height:302px;background:#262626;border-radius:7px 0 0 7px"></div>
<div class="a" style="left:1737px;top:413px;width:41px;height:2px;background:#1e1e1e"></div>
<div class="a" style="left:1737px;top:456px;width:41px;height:2px;background:#1e1e1e"></div>
<div class="a" style="left:1737px;top:500px;width:41px;height:2px;background:#1e1e1e"></div>
<div class="a" style="left:1737px;top:696px;width:41px;height:2px;background:#1e1e1e"></div>
<div class="a" style="left:1737px;top:739px;width:41px;height:2px;background:#1e1e1e"></div>
<div class="a" style="left:1737px;top:782px;width:41px;height:2px;background:#1e1e1e"></div>
<div class="a" style="left:1737px;top:826px;width:41px;height:2px;background:#1e1e1e"></div>
<div class="a" style="left:1737px;top:869px;width:41px;height:2px;background:#1e1e1e"></div>
<div class="a" style="left:1737px;top:912px;width:41px;height:2px;background:#1e1e1e"></div>
<div class="a" style="left:1739px;top:699px;width:39px;height:39px;background:#7f5fe0;border-radius:6px 0 0 6px"></div>
<svg class="ic" style="left:1737px;top:317px" width="42" height="680">
<g fill="#dcd0dc"><rect x="15" y="9" width="2.5" height="13"/><ellipse cx="16" cy="25" rx="4" ry="5"/><path d="M26 9c-3 2-3 6 0 8v14a2 2 0 0 0 4 0V17c3-2 3-6 0-8v5h-4z"/></g>
<g fill="#dcd0dc"><path d="M11 84h22v-14h-6l-2-3h-9l-2 3h-3z"/><rect x="29" y="64" width="4" height="2"/></g><g stroke="#262626" stroke-width="2"><path d="M15 73h10M15 77h10M15 81h10"/></g><circle cx="29" cy="74" r="1.5" fill="#262626"/><circle cx="29" cy="80" r="1.5" fill="#262626"/>
<path d="M11 112h22v12h-4v-6H15v6h-4z" fill="#dcd0dc"/><rect x="14" y="118" width="16" height="15" fill="#dcd0dc"/><path d="M16 131l6-9 6 9z" fill="#262626"/>
<path d="M10 160v15h15M13 157v15h15" stroke="#dcd0dc" stroke-width="1.4" fill="none"/><rect x="16" y="148" width="16" height="17" fill="#dcd0dc"/><path d="M18 163l5-8 4 5 3-3v6z" fill="#262626"/>
<path d="M16 196l-6 13a5 5 0 0 0 10 2z" fill="#dcd0dc"/><circle cx="24" cy="208" r="6" stroke="#dcd0dc" stroke-width="2" fill="#262626"/><circle cx="28" cy="196" r="3.3" fill="#dcd0dc"/>
<circle cx="21" cy="249" r="11" fill="#a58ae8"/><path d="M13 244c3-2 6-1 7 2s-2 4 0 6 3 4 1 7M24 239c1 3 4 4 7 3M27 252c2 1 3 3 2 5" stroke="#262626" stroke-width="2.6" fill="none"/><path d="M8 262c3-3 5-4 7-4M34 236c-2 3-3 5-3 7" stroke="#a58ae8" stroke-width="1.8" fill="none"/>
<rect x="12" y="294" width="19" height="5" stroke="#dcd0dc" stroke-width="1.8" fill="none"/><path d="M13 299v11h17v-11M19 303h5" stroke="#dcd0dc" stroke-width="2" fill="none"/>
<rect x="15" y="351" width="13" height="13" fill="#4cc79c"/><path d="M11 350v-4h4M28 346h4v4M32 361v4h-4M15 365h-4v-4" stroke="#4cc79c" stroke-width="1.6" fill="none"/>
<path d="M12 410l11-11" stroke="#8fd0f5" stroke-width="5" stroke-linecap="round"/><path d="M21 393a7 7 0 0 0 9 9l-3-3 1-4 4-1 3 3a7 7 0 0 0-9-9z" fill="#8fd0f5" transform="translate(-2,1)"/>
<circle cx="13" cy="437" r="4" fill="#6aaed8"/><circle cx="29" cy="437" r="2.5" fill="#6aaed8"/><circle cx="13" cy="453" r="2.5" fill="#6aaed8"/><circle cx="29" cy="453" r="3.5" fill="#6aaed8"/><path d="M17 437h10M13 441v10M16 440l11 11" stroke="#6aaed8" stroke-width="1.6"/>
<circle cx="20" cy="490" r="9" stroke="#6aaed8" stroke-width="2" fill="none"/><circle cx="20" cy="490" r="4" fill="#6aaed8"/><circle cx="28" cy="481" r="3.5" fill="#6aaed8"/><path d="M22 480l4-1" stroke="#1e1e1e" stroke-width="2"/>
<path d="M10 533c0-8 8-13 20-18-5 12-10 20-18 20z" stroke="#6aaed8" stroke-width="2" fill="none"/><circle cx="19" cy="527" r="4" stroke="#6aaed8" stroke-width="2" fill="none"/>
<path d="M13 559h16l-8 14z" stroke="#4cc79c" stroke-width="2" fill="none"/><g fill="#262626" stroke="#4cc79c" stroke-width="1.6"><rect x="10" y="556" width="5" height="5"/><rect x="27" y="556" width="5" height="5"/><rect x="18" y="571" width="5" height="5"/></g>
<circle cx="21" cy="617" r="10" stroke="#dcd0dc" stroke-width="2" fill="#dcd0dc"/><path d="M21 607v10h10a10 10 0 0 0-10-10zM21 617v10a10 10 0 0 1-10-10z" fill="#9b82e6"/>
</svg>
<svg class="ic" style="left:1750px;top:980px" width="16" height="10"><path d="M2 2l6 6 6-6" stroke="#555" stroke-width="1.6" fill="none"/></svg>
<!-- breadcrumb -->
<svg class="ic" style="left:1794px;top:322px" width="24" height="24"><g stroke="#bbb" stroke-width="1.5" fill="none"><path d="M1 6V1h5M17 1h5v5M22 17v5h-5M6 22H1v-5"/></g><rect x="5" y="5" width="13" height="13" fill="#eee"/></svg>
<div class="t" style="left:1829px;top:322px;font-size:18px;color:#e6e6e6"><span class="k">立方体</span>.018</div>
<svg class="ic" style="left:1933px;top:324px" width="14" height="18"><path d="M4 2l7 7-7 7" stroke="#ddd" stroke-width="1.8" fill="none"/></svg>
<svg class="ic" style="left:1959px;top:320px" width="26" height="26"><path d="M3 8V3h5" stroke="#ddd" stroke-width="1.6" fill="none"/><path d="M4 23V13L14 3h9v20z" stroke="#ddd" stroke-width="1.8" fill="none" stroke-linejoin="round"/></svg>
<div class="t" style="left:1995px;top:322px;font-size:18px;color:#e6e6e6"><span class="k">倒角</span></div>
<svg class="ic" style="left:2064px;top:320px" width="26" height="26"><path d="M15 2l9 9-3 1-5 5 1 4-2 1-10-10 1-2 4 1 5-5z" stroke="#888" stroke-width="1.6" fill="none"/><path d="M9 17l-7 7" stroke="#888" stroke-width="1.6"/></svg>
<div class="btn" style="left:1790px;top:372px;width:302px;height:31px;background:#2a2a2a;border-radius:7px"></div>
<svg class="ic" style="left:1800px;top:379px" width="16" height="16"><path d="M8 1v14M1 8h14" stroke="#e6e6e6" stroke-width="1.8"/></svg>
<div class="t" style="left:1912px;top:377px;font-size:18px;color:#e6e6e6"><span class="k">添加修改器</span></div>
<!-- modifier panel -->
<div class="a" style="left:1790px;top:418px;width:301px;height:408px;border:2px solid #4a7cc9;border-radius:9px;background:#1e1e1e;overflow:hidden">
<div class="a" style="left:0;top:0;width:300px;height:37px;background:#222222"></div>
</div>
<svg class="ic" style="left:1800px;top:426px" width="60" height="26"><path d="M3 8l6 6 6-6" stroke="#ddd" stroke-width="1.8" fill="none"/><path d="M26 7V2h5" stroke="#ddd" stroke-width="1.6" fill="none"/><path d="M27 23V13l10-10h9v20z" stroke="#ddd" stroke-width="1.8" fill="none" stroke-linejoin="round"/></svg>
<div class="a" style="left:1891px;top:422px;width:92px;height:31px;background:#333;border-radius:6px 0 0 6px"></div>
<div class="a" style="left:1893px;top:424px;width:28px;height:28px;background:#6a4cae;border-radius:5px 0 0 5px"></div>
<div class="a" style="left:1922px;top:424px;width:29px;height:28px;background:#6a4cae"></div>
<div class="a" style="left:1953px;top:424px;width:30px;height:28px;background:#6a4cae"></div>
<svg class="ic" style="left:1893px;top:424px" width="92" height="28"><g stroke="#ddd" stroke-width="1.4" fill="none"><rect x="4" y="6" width="4" height="4"/><rect x="4" y="20" width="4" height="4"/><rect x="18" y="20" width="4" height="4"/><path d="M6 10v10M8 22h10M8 8h10"/></g><rect x="17" y="4" width="7" height="7" fill="#eee"/>
<rect x="35" y="7" width="20" height="13" stroke="#eee" stroke-width="2" fill="none"/><path d="M45 20v4M39 24h12" stroke="#eee" stroke-width="1.8"/>
<path d="M62 9h5l2-3h8l2 3h5v14H62z" fill="#eee"/><circle cx="73" cy="15" r="5" fill="#6a4cae"/><circle cx="73" cy="15" r="3" fill="#eee"/></svg>
<svg class="ic" style="left:1990px;top:431px" width="90" height="16"><path d="M2 4l7 7 7-7" stroke="#ddd" stroke-width="1.8" fill="none"/><path d="M35 2l12 12M47 2L35 14" stroke="#ddd" stroke-width="1.8"/><g fill="#666"><circle cx="70" cy="5" r="1.2"/><circle cx="75" cy="5" r="1.2"/><circle cx="80" cy="5" r="1.2"/><circle cx="85" cy="5" r="1.2"/><circle cx="70" cy="11" r="1.2"/><circle cx="75" cy="11" r="1.2"/><circle cx="80" cy="11" r="1.2"/><circle cx="85" cy="11" r="1.2"/></g></svg>
<div class="a" style="left:1802px;top:468px;width:276px;height:31px;background:#333;border-radius:7px"></div>
<div class="a" style="left:1940px;top:470px;width:136px;height:27px;background:#7f5fe0;border-radius:0 6px 6px 0"></div>
<div class="t" style="left:1854px;top:473px;font-size:18px;color:#e6e6e6"><span class="k">顶点</span></div>
<div class="t" style="left:1999px;top:473px;font-size:18px;color:#fff"><span class="k">边</span></div>
<div class="t" style="left:1824px;top:511px;font-size:18px;color:#d8d8d8"><span class="k">宽度类型</span></div>
<div class="a" style="left:1907px;top:506px;width:141px;height:31px;background:#222;border-radius:15px"></div>
<div class="t" style="left:1919px;top:511px;font-size:18px;color:#e6e6e6"><span class="k">偏移</span></div>
<svg class="ic" style="left:2031px;top:517px" width="14" height="9"><path d="M1 1l6 6 6-6" stroke="#ddd" stroke-width="1.8" fill="none"/></svg>
<div class="t" style="left:1846px;top:546px;font-size:18px;color:#d8d8d8">(<span class="k">数</span>)<span class="k">量</span></div>
<div class="a" style="left:1907px;top:540px;width:141px;height:31px;background:#1b1b1b;border:1px solid #262626;border-radius:6px"></div>
<div class="t" style="left:1949px;top:546px;font-size:18px;color:#e6e6e6">0.05 m</div>
<div class="t" style="left:1858px;top:584px;font-size:18px;color:#d8d8d8"><span class="k">分段</span></div>
<div class="a" style="left:1907px;top:578px;width:141px;height:31px;background:#1b1b1b;border:1px solid #262626;border-radius:6px"></div>
<div class="t" style="left:1971px;top:584px;font-size:18px;color:#e6e6e6">4</div>
<div class="t" style="left:1824px;top:638px;font-size:18px;color:#d8d8d8"><span class="k">限定方式</span></div>
<div class="a" style="left:1907px;top:632px;width:141px;height:31px;background:#222;border-radius:15px"></div>
<div class="t" style="left:1919px;top:638px;font-size:18px;color:#e6e6e6"><span class="k">角度</span></div>
<svg class="ic" style="left:2031px;top:644px" width="14" height="9"><path d="M1 1l6 6 6-6" stroke="#ddd" stroke-width="1.8" fill="none"/></svg>
<div class="t" style="left:1858px;top:675px;font-size:18px;color:#d8d8d8"><span class="k">角度</span></div>
<div class="a" style="left:1907px;top:669px;width:141px;height:31px;background:#1b1b1b;border:1px solid #262626;border-radius:6px"></div>
<div class="t" style="left:1962px;top:675px;font-size:18px;color:#e6e6e6">30°</div>
<svg class="ic" style="left:2058px;top:515px" width="12" height="180"><g fill="#c8c8c8"><circle cx="6" cy="6" r="3.3"/><circle cx="6" cy="40" r="3.3"/><circle cx="6" cy="78" r="3.3"/><circle cx="6" cy="132" r="3.3"/><circle cx="6" cy="169" r="3.3"/></g></svg>
<svg class="ic" style="left:1823px;top:722px" width="14" height="100"><g stroke="#ddd" stroke-width="1.7" fill="none"><path d="M4 3l6 7-6 7M4 41l6 7-6 7M4 79l6 7-6 7"/></g></svg>
<div class="t" style="left:1845px;top:722px;font-size:18px;color:#e6e6e6"><span class="k">轮廓</span></div>
<div class="t" style="left:1845px;top:760px;font-size:18px;color:#e6e6e6"><span class="k">几何数据</span></div>
<div class="t" style="left:1845px;top:798px;font-size:18px;color:#e6e6e6"><span class="k">着色方式</span></div>
<!-- STATUS -->
<div id="sb" class="a"><svg class="ic" style="left:9px;top:7px" width="18" height="22"><rect x="1.5" y="1.5" width="14" height="19" rx="5" stroke="#c8c8c8" stroke-width="1.6" fill="none"/><path d="M8.5 1.5v8h-7v-3a5 5 0 0 1 5-5z" fill="#c8c8c8"/></svg><div class="t" style="left:32px;top:7px;color:#c6c6c6"><span class="k">选择（列表）</span></div><svg class="ic" style="left:147px;top:7px" width="18" height="22"><rect x="1.5" y="1.5" width="14" height="19" rx="5" stroke="#c8c8c8" stroke-width="1.6" fill="none"/><rect x="6.5" y="4" width="4" height="8" rx="2" fill="#c8c8c8"/></svg><div class="t" style="left:168px;top:7px;color:#c6c6c6"><span class="k">视图中心对齐鼠标</span></div><div class="t" style="left:870px;top:7px;color:#bdbdbd;letter-spacing:0.25px">Collection</div><div class="t" style="left:962px;top:7px;color:#bdbdbd;letter-spacing:0.25px"><span class="k">立方体</span>.018</div><div class="t" style="left:1063px;top:7px;color:#bdbdbd;letter-spacing:0.25px"><span class="k">顶点</span>:36,438</div><div class="t" style="left:1173px;top:7px;color:#bdbdbd;letter-spacing:0.25px"><span class="k">面</span>:32,289</div><div class="t" style="left:1266px;top:7px;color:#bdbdbd;letter-spacing:0.25px"><span class="k">三角面</span>:64,578</div><div class="t" style="left:1393px;top:7px;color:#bdbdbd;letter-spacing:0.25px"><span class="k">物体</span>:2,072/2,074</div><div class="t" style="left:1546px;top:7px;color:#bdbdbd;letter-spacing:0.25px"><span class="k">时长</span>: 00:08+10 (<span class="k">帧</span> 1/250)</div><div class="t" style="left:1769px;top:7px;color:#bdbdbd;letter-spacing:0.25px"><span class="k">内存</span>: 220.3 MiB</div><div class="t" style="left:1906px;top:7px;color:#bdbdbd;letter-spacing:0.25px"><span class="k">显存</span>: 2.3/4.0 GiB</div><div class="t" style="left:2049px;top:7px;color:#bdbdbd;letter-spacing:0.25px">5.0.1</div><div class="a" style="left:953.7px;top:7px;width:1.6px;height:21px;background:#a8a8a8"></div><div class="a" style="left:1054.6px;top:7px;width:1.6px;height:21px;background:#a8a8a8"></div><div class="a" style="left:1164.2px;top:7px;width:1.6px;height:21px;background:#a8a8a8"></div><div class="a" style="left:1257.2px;top:7px;width:1.6px;height:21px;background:#a8a8a8"></div><div class="a" style="left:1384.9px;top:7px;width:1.6px;height:21px;background:#a8a8a8"></div><div class="a" style="left:1537.9px;top:7px;width:1.6px;height:21px;background:#a8a8a8"></div><div class="a" style="left:1760.6px;top:7px;width:1.6px;height:21px;background:#a8a8a8"></div><div class="a" style="left:1897.7px;top:7px;width:1.6px;height:21px;background:#a8a8a8"></div><div class="a" style="left:2041.2px;top:7px;width:1.6px;height:21px;background:#a8a8a8"></div><svg class="ic" style="left:2080px;top:14px" width="28" height="21"><path d="M28 0v21H4C16 17 24 10 28 0z" fill="#7a4fd0"/></svg></div>
<!-- MENU -->
<div class="a" style="left:1160px;top:708px;width:281px;height:570px;background:rgba(31,32,32,0.93);border-radius:7px;box-shadow:0 2px 8px rgba(0,0,0,0.35)">
<div class="t" style="left:13px;top:12px;font-size:17px;color:#b8b8b8"><span class="k">关联</span>/<span class="k">传递数据</span></div>
<div class="sep" style="top:42px"></div>
<div class="mi" style="top:53px"><span class="k">将物体关联到场景</span></div><svg class="ic" style="left:262px;top:58px" width="10" height="12"><path d="M1 1l8 5-8 5z" fill="#aaa"/></svg>
<div class="sep" style="top:83px"></div>
<div class="mi" style="top:94px"><span class="k">关联物体数据</span></div>
<div class="mi" style="top:128px"><span class="k">关联材质</span></div>
<div class="mi" style="top:162px"><span class="k">关联动画数据</span></div>
<div class="mi" style="top:196px"><span class="k">关联集合</span></div>
<div class="mi" style="top:230px"><span class="k">关联实例集合</span></div>
<div class="mi" style="top:264px"><span class="k">关联字体到文本</span></div>
<div class="sep" style="top:297px"></div>
<div class="a" style="left:6px;top:308px;width:268px;height:27px;background:#353535;border-radius:5px"></div>
<div class="mi" style="top:312px"><span class="k">复制修改器</span></div>
<div class="mi" style="top:346px"><span class="k">复制蜡笔效果</span></div>
<div class="mi" style="top:377px"><span class="k">复制</span>UV<span class="k">贴图</span></div>
<div class="sep" style="top:406px"></div>
<div class="mi" style="top:418px"><span class="k">传递网格数据</span></div>
<div class="mi" style="top:449px"><span class="k">传递网格数据布局</span></div>
<div class="sep" style="top:478px"></div>
<div class="mi" style="top:490px"><span class="k">链接接收器到发光体</span></div><svg class="ic" style="left:262px;top:494px" width="10" height="12"><path d="M1 1l8 5-8 5z" fill="#aaa"/></svg>
<div class="mi" style="top:521px"><span class="k">链接阻断器到发光体</span></div><svg class="ic" style="left:262px;top:525px" width="10" height="12"><path d="M1 1l8 5-8 5z" fill="#aaa"/></svg>
</div>
<div class="a" style="left:1174px;top:997px;width:140px;height:54px;border:3px solid #e3222a"></div>

</body></html>
